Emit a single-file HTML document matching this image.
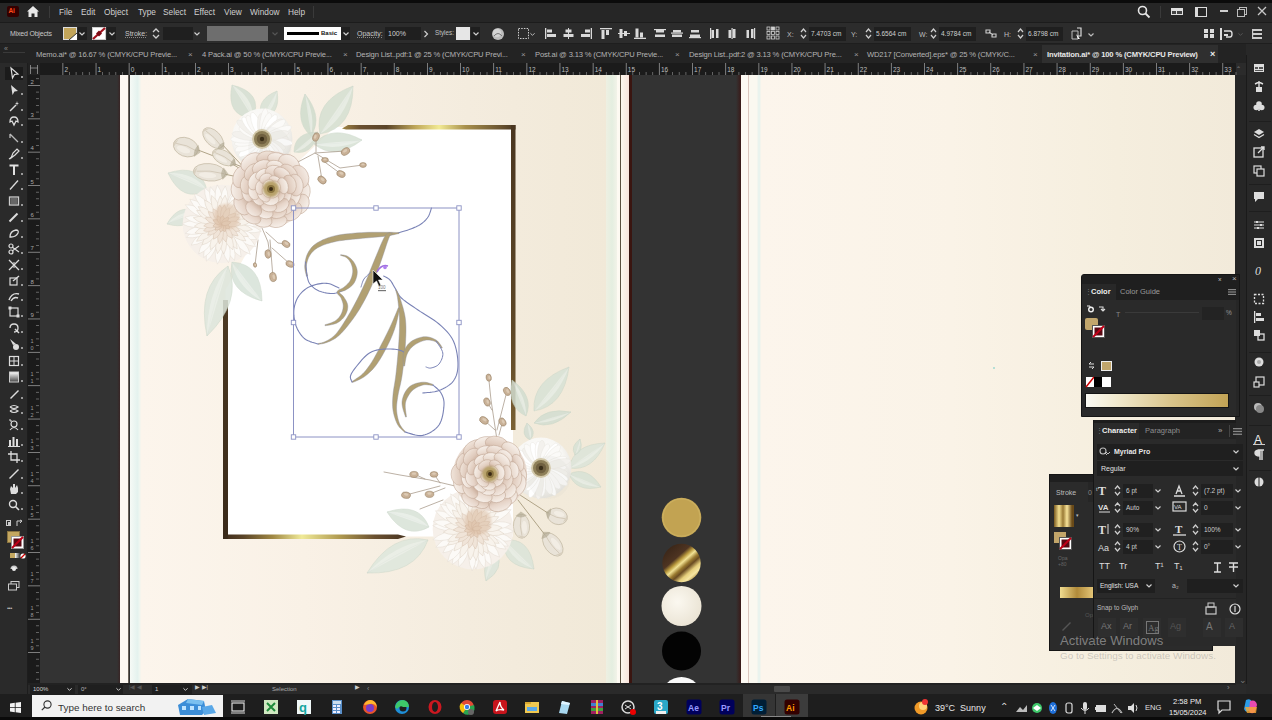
<!DOCTYPE html><html><head><meta charset="utf-8"><style>
html,body{margin:0;padding:0;}
body{width:1272px;height:720px;overflow:hidden;position:relative;background:#2b2b2b;font-family:"Liberation Sans", sans-serif;}
.t{position:absolute;white-space:nowrap;line-height:1;}
div{box-sizing:border-box;}
svg{position:absolute;overflow:visible;}
</style></head><body>

<div style="position:absolute;left:0px;top:0px;width:1272px;height:3px;background:#0b0b0b"></div>
<div style="position:absolute;left:0px;top:3px;width:1272px;height:19px;background:#262626"></div>
<div style="position:absolute;left:0px;top:22px;width:1272px;height:1px;background:#1c1c1c"></div>
<div style="position:absolute;left:7px;top:6px;width:12px;height:11px;background:#330000;border-radius:2px"></div>
<div class="t" style="left:8.5px;top:8px;font-size:6.5px;color:#ff4a1a;font-weight:bold;letter-spacing:-0.3px">Ai</div>
<svg style="left:26px;top:5px" width="14" height="13" viewBox="0 0 14 13"><path d="M1 6.5 L7 1 L13 6.5 L11.5 6.5 L11.5 12 L8.5 12 L8.5 8.5 L5.5 8.5 L5.5 12 L2.5 12 L2.5 6.5 Z" fill="#e8e8e8"/></svg>
<div style="position:absolute;left:49px;top:6px;width:1px;height:12px;background:#3a3a3a"></div>
<div class="t" style="left:59px;top:7.5px;font-size:8.3px;color:#d0d0d0;">File</div>
<div class="t" style="left:81px;top:7.5px;font-size:8.3px;color:#d0d0d0;">Edit</div>
<div class="t" style="left:104px;top:7.5px;font-size:8.3px;color:#d0d0d0;">Object</div>
<div class="t" style="left:138px;top:7.5px;font-size:8.3px;color:#d0d0d0;">Type</div>
<div class="t" style="left:163px;top:7.5px;font-size:8.3px;color:#d0d0d0;">Select</div>
<div class="t" style="left:194px;top:7.5px;font-size:8.3px;color:#d0d0d0;">Effect</div>
<div class="t" style="left:224px;top:7.5px;font-size:8.3px;color:#d0d0d0;">View</div>
<div class="t" style="left:250px;top:7.5px;font-size:8.3px;color:#d0d0d0;">Window</div>
<div class="t" style="left:288px;top:7.5px;font-size:8.3px;color:#d0d0d0;">Help</div>
<div style="position:absolute;left:313px;top:6px;width:1px;height:12px;background:#3a3a3a"></div>
<svg style="left:1137px;top:5px" width="14" height="14" viewBox="0 0 14 14"><circle cx="5.5" cy="5.5" r="4" fill="none" stroke="#e6e6e6" stroke-width="1.6"/><line x1="8.5" y1="8.5" x2="12.5" y2="12.5" stroke="#e6e6e6" stroke-width="1.8"/></svg>
<div style="position:absolute;left:1160px;top:6px;width:1px;height:12px;background:#3a3a3a"></div>
<div style="position:absolute;left:1171px;top:8px;width:12px;height:7px;background:#e0e0e0"></div>
<div style="position:absolute;left:1172px;top:11px;width:4px;height:3px;background:#444"></div>
<div style="position:absolute;left:1177px;top:11px;width:5px;height:3px;background:#444"></div>
<div style="position:absolute;left:1195px;top:7px;width:12px;height:10px;border:1.5px solid #dcdcdc;border-left-width:3px"></div>
<div style="position:absolute;left:1220px;top:10px;width:8px;height:1.5px;background:#cfcfcf"></div>
<div style="position:absolute;left:1239px;top:7px;width:8px;height:8px;border:1.3px solid #bdbdbd"></div>
<div style="position:absolute;left:1237px;top:9px;width:8px;height:8px;border:1.3px solid #bdbdbd;background:#262626"></div>
<svg style="left:1257px;top:6px" width="10" height="10" viewBox="0 0 10 10"><path d="M1 1 L9 9 M9 1 L1 9" stroke="#c8c8c8" stroke-width="1.3"/></svg>
<div style="position:absolute;left:0px;top:23px;width:1272px;height:20px;background:#2c2c2c"></div>
<div style="position:absolute;left:0px;top:43px;width:1272px;height:1px;background:#1e1e1e"></div>
<div class="t" style="left:10px;top:30px;font-size:7px;color:#c8c8c8;letter-spacing:-0.2px">Mixed Objects</div>
<div style="position:absolute;left:63px;top:27px;width:14px;height:13px;background:#c2a55a;border:1px solid #ddd"></div>
<svg style="left:69px;top:33px" width="8" height="7"><path d="M8 0 L8 7 L0 7 Z" fill="#fff"/><path d="M8 0 L0 7" stroke="#333" stroke-width="1"/></svg>
<div style="position:absolute;left:78px;top:27px;width:9px;height:13px;background:#1f1f1f"></div>
<svg style="left:79px;top:31px" width="6" height="6" viewBox="0 0 6 6"><path d="M0.5 1.5 L3 4 L5.5 1.5" fill="none" stroke="#cfcfcf" stroke-width="1.2"/></svg>
<div style="position:absolute;left:92px;top:27px;width:14px;height:13px;background:#fff;border:1px solid #ccc"></div>
<svg style="left:92px;top:27px" width="14" height="13"><path d="M13 1 L1 12" stroke="#a0101c" stroke-width="2.2"/><path d="M7 3.5 L10 6.5 L7 9.5 L4 6.5Z" fill="#7a0a14"/></svg>
<div style="position:absolute;left:107px;top:27px;width:9px;height:13px;background:#1f1f1f"></div>
<svg style="left:109px;top:31px" width="6" height="6" viewBox="0 0 6 6"><path d="M0.5 1.5 L3 4 L5.5 1.5" fill="none" stroke="#cfcfcf" stroke-width="1.2"/></svg>
<div class="t" style="left:125px;top:30px;font-size:7px;color:#c8c8c8;text-decoration:underline dotted #888">Stroke:</div>
<svg style="left:152px;top:27px" width="8" height="13" viewBox="0 0 8 13"><path d="M1 5 L4 2 L7 5 M1 8 L4 11 L7 8" fill="none" stroke="#cfcfcf" stroke-width="1.3"/></svg>
<div style="position:absolute;left:163px;top:27px;width:30px;height:13px;background:#1f1f1f"></div>
<svg style="left:194px;top:31px" width="6" height="6" viewBox="0 0 6 6"><path d="M0.5 1.5 L3 4 L5.5 1.5" fill="none" stroke="#cfcfcf" stroke-width="1.2"/></svg>
<div style="position:absolute;left:207px;top:26px;width:61px;height:15px;background:#6e6e6e"></div>
<svg style="left:272px;top:31px" width="6" height="6" viewBox="0 0 6 6"><path d="M0.5 1.5 L3 4 L5.5 1.5" fill="none" stroke="#555" stroke-width="1.2"/></svg>
<div style="position:absolute;left:284px;top:27px;width:57px;height:13px;background:#fff"></div>
<div style="position:absolute;left:287px;top:32px;width:32px;height:3px;background:#000"></div>
<div class="t" style="left:321px;top:30px;font-size:6px;color:#111;font-weight:bold">Basic</div>
<div style="position:absolute;left:341px;top:27px;width:9px;height:13px;background:#1f1f1f"></div>
<svg style="left:343px;top:31px" width="6" height="6" viewBox="0 0 6 6"><path d="M0.5 1.5 L3 4 L5.5 1.5" fill="none" stroke="#cfcfcf" stroke-width="1.2"/></svg>
<div class="t" style="left:357px;top:30px;font-size:7px;color:#c8c8c8;text-decoration:underline dotted #888">Opacity:</div>
<div style="position:absolute;left:385px;top:27px;width:36px;height:13px;background:#1f1f1f"></div>
<div class="t" style="left:388px;top:30px;font-size:7px;color:#d0d0d0;">100%</div>
<svg style="left:423px;top:30px" width="6" height="8"><path d="M1.5 1 L4.5 4 L1.5 7" fill="none" stroke="#cfcfcf" stroke-width="1.2"/></svg>
<div class="t" style="left:435px;top:30px;font-size:6.3px;color:#c0c0c0;">Styles:</div>
<div style="position:absolute;left:456px;top:27px;width:14px;height:13px;background:#e6e6e6"></div>
<div style="position:absolute;left:471px;top:27px;width:9px;height:13px;background:#1f1f1f"></div>
<svg style="left:473px;top:31px" width="6" height="6" viewBox="0 0 6 6"><path d="M0.5 1.5 L3 4 L5.5 1.5" fill="none" stroke="#cfcfcf" stroke-width="1.2"/></svg>
<svg style="left:491px;top:27px" width="14" height="14"><circle cx="7" cy="7" r="6" fill="#bdbdbd"/><circle cx="6" cy="6" r="4" fill="#e0e0e0" opacity="0.7"/><path d="M3 9 Q7 4 11 9" stroke="#777" fill="none" stroke-width="1"/></svg>
<svg style="left:518px;top:28px" width="11" height="11" viewBox="0 0 11 11"><rect x="0.5" y="0.5" width="10" height="10" fill="none" stroke="#cfcfcf" stroke-width="1" stroke-dasharray="1.5 1.2"/></svg>
<svg style="left:530px;top:32px" width="5" height="5" viewBox="0 0 6 6"><path d="M0.5 1.5 L3 4 L5.5 1.5" fill="none" stroke="#bbb" stroke-width="1.2"/></svg>
<svg style="left:545px;top:28px" width="12" height="11" viewBox="0 0 12 11"><rect x="0" y="0" width="1.3" height="11" fill="#d9d9d9"/><rect x="2" y="1.5" width="5" height="3" fill="#d9d9d9"/><rect x="2" y="6" width="9" height="3" fill="#d9d9d9"/></svg>
<svg style="left:563px;top:28px" width="11" height="11" viewBox="0 0 11 11"><rect x="5" y="0" width="1" height="11" fill="#d9d9d9"/><rect x="2.5" y="1.5" width="6" height="3" fill="#d9d9d9"/><rect x="0.5" y="6" width="10" height="3" fill="#d9d9d9"/></svg>
<svg style="left:580px;top:28px" width="12" height="11" viewBox="0 0 12 11"><rect x="10.7" y="0" width="1.3" height="11" fill="#d9d9d9"/><rect x="5" y="1.5" width="5" height="3" fill="#d9d9d9"/><rect x="1" y="6" width="9" height="3" fill="#d9d9d9"/></svg>
<svg style="left:600px;top:28px" width="12" height="11" viewBox="0 0 12 11"><rect x="0" y="0" width="12" height="1.3" fill="#d9d9d9"/><rect x="1.5" y="2" width="3" height="9" fill="#d9d9d9"/><rect x="6" y="2" width="3" height="5" fill="#d9d9d9"/></svg>
<svg style="left:618px;top:28px" width="12" height="11" viewBox="0 0 12 11"><rect x="0" y="5" width="12" height="1" fill="#d9d9d9"/><rect x="1.5" y="1" width="3" height="9" fill="#d9d9d9"/><rect x="6" y="3" width="3" height="5" fill="#d9d9d9"/></svg>
<svg style="left:634px;top:28px" width="12" height="11" viewBox="0 0 12 11"><rect x="0" y="9.7" width="12" height="1.3" fill="#d9d9d9"/><rect x="1.5" y="0.5" width="3" height="9" fill="#d9d9d9"/><rect x="6" y="4.5" width="3" height="5" fill="#d9d9d9"/></svg>
<svg style="left:654px;top:28px" width="12" height="11" viewBox="0 0 12 11"><rect x="0" y="1" width="12" height="1.2" fill="#d9d9d9"/><rect x="2" y="2" width="8" height="2.5" fill="#d9d9d9"/><rect x="1" y="6.5" width="10" height="2.5" fill="#d9d9d9"/></svg>
<svg style="left:671px;top:28px" width="12" height="11" viewBox="0 0 12 11"><rect x="0" y="4.5" width="12" height="1.2" fill="#d9d9d9"/><rect x="2" y="2" width="8" height="2.5" fill="#d9d9d9"/><rect x="1" y="6.5" width="10" height="2.5" fill="#d9d9d9"/></svg>
<svg style="left:689px;top:28px" width="12" height="11" viewBox="0 0 12 11"><rect x="0" y="9" width="12" height="1.2" fill="#d9d9d9"/><rect x="2" y="2" width="8" height="2.5" fill="#d9d9d9"/><rect x="1" y="6.5" width="10" height="2.5" fill="#d9d9d9"/></svg>
<svg style="left:709px;top:28px" width="12" height="11" viewBox="0 0 12 11"><rect x="1" y="0" width="1.2" height="11" fill="#d9d9d9"/><rect x="2.5" y="2" width="2.5" height="8" fill="#d9d9d9"/><rect x="7" y="1" width="2.5" height="9" fill="#d9d9d9"/></svg>
<svg style="left:726px;top:28px" width="12" height="11" viewBox="0 0 12 11"><rect x="5.5" y="0" width="1.2" height="11" fill="#d9d9d9"/><rect x="2.5" y="2" width="2.5" height="8" fill="#d9d9d9"/><rect x="7" y="1" width="2.5" height="9" fill="#d9d9d9"/></svg>
<svg style="left:744px;top:28px" width="12" height="11" viewBox="0 0 12 11"><rect x="10" y="0" width="1.2" height="11" fill="#d9d9d9"/><rect x="2.5" y="2" width="2.5" height="8" fill="#d9d9d9"/><rect x="7" y="1" width="2.5" height="9" fill="#d9d9d9"/></svg>
<svg style="left:767px;top:27px" width="13" height="13" viewBox="0 0 13 13"><rect x="0.0" y="0.0" width="3" height="3" fill="none" stroke="#cfcfcf" stroke-width="0.8"/><rect x="4.5" y="0.0" width="3" height="3" fill="none" stroke="#cfcfcf" stroke-width="0.8"/><rect x="9.0" y="0.0" width="3" height="3" fill="none" stroke="#cfcfcf" stroke-width="0.8"/><rect x="0.0" y="4.5" width="3" height="3" fill="none" stroke="#cfcfcf" stroke-width="0.8"/><rect x="4.5" y="4.5" width="3" height="3" fill="none" stroke="#cfcfcf" stroke-width="0.8"/><rect x="9.0" y="4.5" width="3" height="3" fill="none" stroke="#cfcfcf" stroke-width="0.8"/><rect x="0.0" y="9.0" width="3" height="3" fill="none" stroke="#cfcfcf" stroke-width="0.8"/><rect x="4.5" y="9.0" width="3" height="3" fill="none" stroke="#cfcfcf" stroke-width="0.8"/><rect x="9.0" y="9.0" width="3" height="3" fill="none" stroke="#cfcfcf" stroke-width="0.8"/><rect x="4.5" y="0" width="3" height="3" fill="#cfcfcf"/></svg>
<div class="t" style="left:787px;top:31px;font-size:7px;color:#bdbdbd;">X:</div>
<svg style="left:800px;top:27px" width="7" height="13" viewBox="0 0 7 13"><path d="M1 5 L3.5 2 L6 5 M1 8 L3.5 11 L6 8" fill="none" stroke="#cfcfcf" stroke-width="1.2"/></svg>
<div style="position:absolute;left:809px;top:27px;width:37px;height:14px;background:#1f1f1f"></div>
<div class="t" style="left:811px;top:31px;font-size:6.5px;color:#cfcfcf;">7.4703 cm</div>
<div class="t" style="left:851px;top:31px;font-size:7px;color:#bdbdbd;">Y:</div>
<svg style="left:865px;top:27px" width="7" height="13" viewBox="0 0 7 13"><path d="M1 5 L3.5 2 L6 5 M1 8 L3.5 11 L6 8" fill="none" stroke="#cfcfcf" stroke-width="1.2"/></svg>
<div style="position:absolute;left:874px;top:27px;width:37px;height:14px;background:#1f1f1f"></div>
<div class="t" style="left:876px;top:31px;font-size:6.5px;color:#cfcfcf;">5.6564 cm</div>
<div class="t" style="left:919px;top:31px;font-size:7px;color:#bdbdbd;">W:</div>
<svg style="left:930px;top:27px" width="7" height="13" viewBox="0 0 7 13"><path d="M1 5 L3.5 2 L6 5 M1 8 L3.5 11 L6 8" fill="none" stroke="#cfcfcf" stroke-width="1.2"/></svg>
<div style="position:absolute;left:939px;top:27px;width:37px;height:14px;background:#1f1f1f"></div>
<div class="t" style="left:941px;top:31px;font-size:6.5px;color:#cfcfcf;">4.9784 cm</div>
<svg style="left:985px;top:28px" width="12" height="11" viewBox="0 0 12 11"><path d="M1 2 L5 2 L5 5 L1 5 Z M7 6 L11 6 L11 9 L7 9 Z M4 4 L8 7" fill="none" stroke="#cfcfcf" stroke-width="1.1"/></svg>
<div class="t" style="left:1004px;top:31px;font-size:7px;color:#bdbdbd;">H:</div>
<svg style="left:1017px;top:27px" width="7" height="13" viewBox="0 0 7 13"><path d="M1 5 L3.5 2 L6 5 M1 8 L3.5 11 L6 8" fill="none" stroke="#cfcfcf" stroke-width="1.2"/></svg>
<div style="position:absolute;left:1026px;top:27px;width:37px;height:14px;background:#1f1f1f"></div>
<div class="t" style="left:1028px;top:31px;font-size:6.5px;color:#cfcfcf;">6.8798 cm</div>
<svg style="left:1071px;top:27px" width="20" height="14" viewBox="0 0 20 14"><path d="M1 4 L7 4 L7 12 L1 12 Z" fill="none" stroke="#bbb" stroke-width="1"/><path d="M6 1 L10 1 L10 9 L6 9" fill="none" stroke="#ddd" stroke-width="1.2"/><path d="M5 7 L9 12 L7 12 Z" fill="#fff"/></svg>
<svg style="left:1088px;top:32px" width="6" height="6" viewBox="0 0 6 6"><path d="M0.5 1.5 L3 4 L5.5 1.5" fill="none" stroke="#bbb" stroke-width="1.2"/></svg>
<svg style="left:1204px;top:28px" width="10" height="11" viewBox="0 0 10 11"><rect x="0" y="1" width="4" height="4" fill="#ddd"/><rect x="6" y="1" width="4" height="4" fill="#ddd"/><rect x="0" y="6" width="4" height="4" fill="#ddd"/><rect x="6" y="6" width="4" height="4" fill="#ddd"/></svg>
<svg style="left:1220px;top:28px" width="14" height="12" viewBox="0 0 14 12"><rect x="0" y="0" width="2" height="12" fill="#ddd"/><path d="M4 3 L10 3 Q12 3 12 6 Q12 9 10 9 L6 9" fill="none" stroke="#ddd" stroke-width="1.4"/><rect x="4" y="6" width="4" height="2" fill="#ddd"/></svg>
<svg style="left:1238px;top:32px" width="5" height="5" viewBox="0 0 6 6"><path d="M0.5 1.5 L3 4 L5.5 1.5" fill="none" stroke="#555" stroke-width="1.2"/></svg>
<svg style="left:1252px;top:28px" width="10" height="11" viewBox="0 0 10 11"><rect x="0" y="1" width="10" height="2" fill="#ccc"/><rect x="0" y="5" width="10" height="2" fill="#ccc"/><rect x="0" y="9" width="10" height="2" fill="#ccc"/><rect x="0" y="1" width="1.2" height="10" fill="#ccc"/></svg>
<div style="position:absolute;left:0px;top:44px;width:1272px;height:19px;background:#232323"></div>
<div class="t" style="left:36px;top:51px;font-size:7.6px;color:#b4b4b4;letter-spacing:-0.15px">Memo.ai* @ 16.67 % (CMYK/CPU Previe...</div>
<div class="t" style="left:188px;top:50.5px;font-size:8px;color:#9a9a9a;">&#215;</div>
<div class="t" style="left:202px;top:51px;font-size:7.6px;color:#b4b4b4;letter-spacing:-0.15px">4 Pack.ai @ 50 % (CMYK/CPU Previe...</div>
<div class="t" style="left:343px;top:50.5px;font-size:8px;color:#9a9a9a;">&#215;</div>
<div class="t" style="left:356px;top:51px;font-size:7.6px;color:#b4b4b4;letter-spacing:-0.15px">Design List..pdf:1 @ 25 % (CMYK/CPU Previ...</div>
<div class="t" style="left:521px;top:50.5px;font-size:8px;color:#9a9a9a;">&#215;</div>
<div class="t" style="left:535px;top:51px;font-size:7.6px;color:#b4b4b4;letter-spacing:-0.15px">Post.ai @ 3.13 % (CMYK/CPU Previe...</div>
<div class="t" style="left:675px;top:50.5px;font-size:8px;color:#9a9a9a;">&#215;</div>
<div class="t" style="left:689px;top:51px;font-size:7.6px;color:#b4b4b4;letter-spacing:-0.15px">Design List..pdf:2 @ 3.13 % (CMYK/CPU Pre...</div>
<div class="t" style="left:854px;top:50.5px;font-size:8px;color:#9a9a9a;">&#215;</div>
<div class="t" style="left:867px;top:51px;font-size:7.6px;color:#b4b4b4;letter-spacing:-0.15px">WD217 [Converted].eps* @ 25 % (CMYK/C...</div>
<div class="t" style="left:1033px;top:50.5px;font-size:8px;color:#9a9a9a;">&#215;</div>
<div style="position:absolute;left:1042px;top:45px;width:176px;height:18px;background:#2f2f2f"></div>
<div class="t" style="left:1047px;top:51px;font-size:7.6px;color:#e8e8e8;letter-spacing:-0.15px;font-weight:bold">Invitation.ai* @ 100 % (CMYK/CPU Preview)</div>
<div class="t" style="left:1210px;top:50px;font-size:9px;color:#eee;font-weight:bold">&#215;</div>
<div class="t" style="left:1261px;top:45px;font-size:8px;color:#aaa;">&#171;</div>
<div style="position:absolute;left:0px;top:63px;width:28px;height:631px;background:#2a2a2a"></div>
<div style="position:absolute;left:27px;top:63px;width:1px;height:631px;background:#1d1d1d"></div>
<div style="position:absolute;left:3px;top:52px;width:22px;height:1px;background:#3a3a3a"></div>
<div class="t" style="left:4px;top:45px;font-size:7px;color:#888;">&#171;</div>
<div style="position:absolute;left:5px;top:67px;width:18px;height:13px;background:#1b1b1b"></div>
<svg width="0" height="0" style="position:absolute"><defs><linearGradient id="tg" x1="0" x2="0" y1="0" y2="1"><stop offset="0" stop-color="#fff"/><stop offset="1" stop-color="#444"/></linearGradient></defs></svg>
<svg style="left:8px;top:67px" width="12" height="12" viewBox="0 0 12 12"><path d="M3 1 L10 7 L6.5 7.5 L4.5 11 Z" fill="none" stroke="#ddd" stroke-width="1.2"/></svg>
<div style="position:absolute;left:21px;top:76px;width:1.5px;height:1.5px;background:#999"></div>
<svg style="left:8px;top:84px" width="12" height="12" viewBox="0 0 12 12"><path d="M3 1 L10 7 L6.5 7.5 L4.5 11 Z" fill="#ddd"/></svg>
<div style="position:absolute;left:21px;top:93px;width:1.5px;height:1.5px;background:#999"></div>
<svg style="left:8px;top:100px" width="12" height="12" viewBox="0 0 12 12"><path d="M2 11 L8 5" stroke="#ddd" stroke-width="1.5"/><path d="M9 1 L9.5 3 L11 3.5 L9.5 4 L9 6 L8.5 4 L7 3.5 L8.5 3Z" fill="#ddd"/></svg>
<div style="position:absolute;left:21px;top:109px;width:1.5px;height:1.5px;background:#999"></div>
<svg style="left:8px;top:115px" width="12" height="12" viewBox="0 0 12 12"><path d="M2 7 Q2 2 6 2 Q10 2 10 7 L8 6 L6 10 L4 6 Z" fill="none" stroke="#ddd" stroke-width="1.3"/></svg>
<div style="position:absolute;left:21px;top:124px;width:1.5px;height:1.5px;background:#999"></div>
<svg style="left:8px;top:132px" width="12" height="12" viewBox="0 0 12 12"><path d="M2 2 L10 10 M2 2 L2 6" fill="none" stroke="#bbb" stroke-width="1.3"/></svg>
<div style="position:absolute;left:21px;top:141px;width:1.5px;height:1.5px;background:#999"></div>
<svg style="left:8px;top:148px" width="12" height="12" viewBox="0 0 12 12"><path d="M3 10 L5 5 L9 1 L11 3 L7 7 Z" fill="none" stroke="#ddd" stroke-width="1.2"/><path d="M1 11 L4 9" stroke="#ddd" stroke-width="1.2"/></svg>
<div style="position:absolute;left:21px;top:157px;width:1.5px;height:1.5px;background:#999"></div>
<svg style="left:8px;top:164px" width="12" height="12" viewBox="0 0 12 12"><path d="M1.5 1.5 L10.5 1.5 M6 1.5 L6 11" stroke="#e2e2e2" stroke-width="2"/></svg>
<div style="position:absolute;left:21px;top:173px;width:1.5px;height:1.5px;background:#999"></div>
<svg style="left:8px;top:179px" width="12" height="12" viewBox="0 0 12 12"><path d="M2 10.5 L10 1.5" stroke="#ddd" stroke-width="1.3"/></svg>
<div style="position:absolute;left:21px;top:188px;width:1.5px;height:1.5px;background:#999"></div>
<svg style="left:8px;top:195px" width="12" height="12" viewBox="0 0 12 12"><rect x="1.5" y="2" width="9" height="8" fill="none" stroke="#ccc" stroke-width="1.3"/><rect x="2.5" y="3" width="7" height="6" fill="#666"/></svg>
<div style="position:absolute;left:21px;top:204px;width:1.5px;height:1.5px;background:#999"></div>
<svg style="left:8px;top:211px" width="12" height="12" viewBox="0 0 12 12"><path d="M1.5 10.5 L9.5 2.5" stroke="#ddd" stroke-width="2"/></svg>
<div style="position:absolute;left:21px;top:220px;width:1.5px;height:1.5px;background:#999"></div>
<svg style="left:8px;top:227px" width="12" height="12" viewBox="0 0 12 12"><path d="M2 10 Q2 4 8 3 Q11 3 10 6 Q8 10 3 10Z" fill="none" stroke="#ddd" stroke-width="1.3"/></svg>
<div style="position:absolute;left:21px;top:236px;width:1.5px;height:1.5px;background:#999"></div>
<svg style="left:8px;top:243px" width="12" height="12" viewBox="0 0 12 12"><circle cx="3" cy="3" r="2" fill="none" stroke="#ddd" stroke-width="1.2"/><circle cx="3" cy="9" r="2" fill="none" stroke="#ddd" stroke-width="1.2"/><path d="M4 4 L11 9 M4 8 L11 3" stroke="#ddd" stroke-width="1.2"/></svg>
<div style="position:absolute;left:21px;top:252px;width:1.5px;height:1.5px;background:#999"></div>
<svg style="left:8px;top:259px" width="12" height="12" viewBox="0 0 12 12"><path d="M1 1 L11 11 M11 1 L1 11" stroke="#ddd" stroke-width="1.3"/><path d="M6 3 L6 9" stroke="#ddd"/></svg>
<div style="position:absolute;left:21px;top:268px;width:1.5px;height:1.5px;background:#999"></div>
<svg style="left:8px;top:275px" width="12" height="12" viewBox="0 0 12 12"><rect x="2" y="3" width="7" height="7" fill="none" stroke="#ddd" stroke-width="1.2"/><path d="M5 6 L11 1" stroke="#ddd" stroke-width="1.3"/></svg>
<div style="position:absolute;left:21px;top:284px;width:1.5px;height:1.5px;background:#999"></div>
<svg style="left:8px;top:290px" width="12" height="12" viewBox="0 0 12 12"><path d="M1 10 Q4 2 11 4 M3 11 Q6 6 10 8" fill="none" stroke="#ddd" stroke-width="1.4"/></svg>
<div style="position:absolute;left:21px;top:299px;width:1.5px;height:1.5px;background:#999"></div>
<svg style="left:8px;top:306px" width="12" height="12" viewBox="0 0 12 12"><rect x="2" y="2" width="8" height="8" fill="none" stroke="#ddd" stroke-width="1.2"/><rect x="0.5" y="0.5" width="3" height="3" fill="#ddd"/><rect x="8.5" y="8.5" width="3" height="3" fill="#ddd"/></svg>
<div style="position:absolute;left:21px;top:315px;width:1.5px;height:1.5px;background:#999"></div>
<svg style="left:8px;top:322px" width="12" height="12" viewBox="0 0 12 12"><path d="M2 6 Q2 2 6 2 Q10 2 10 6 Q10 10 6 10" fill="none" stroke="#ddd" stroke-width="1.3"/><path d="M7 7 L11 11" stroke="#ddd" stroke-width="1.5"/></svg>
<div style="position:absolute;left:21px;top:331px;width:1.5px;height:1.5px;background:#999"></div>
<svg style="left:8px;top:338px" width="12" height="12" viewBox="0 0 12 12"><path d="M2 1 L8 6 L5 7 Z" fill="#ddd"/><circle cx="8" cy="9" r="3" fill="#ddd"/></svg>
<div style="position:absolute;left:21px;top:347px;width:1.5px;height:1.5px;background:#999"></div>
<svg style="left:8px;top:355px" width="12" height="12" viewBox="0 0 12 12"><rect x="1.5" y="1.5" width="9" height="9" fill="none" stroke="#ddd" stroke-width="1.2"/><path d="M1.5 6 L10.5 6 M6 1.5 L6 10.5" stroke="#ddd"/></svg>
<div style="position:absolute;left:21px;top:364px;width:1.5px;height:1.5px;background:#999"></div>
<svg style="left:8px;top:371px" width="12" height="12" viewBox="0 0 12 12"><rect x="1.5" y="1" width="9" height="10" fill="url(#tg)" stroke="#ccc" stroke-width="1"/></svg>
<div style="position:absolute;left:21px;top:380px;width:1.5px;height:1.5px;background:#999"></div>
<svg style="left:8px;top:388px" width="12" height="12" viewBox="0 0 12 12"><path d="M2 10 L9 3 L10 2 L11 3 L10 4 L3 11 Z" fill="#ddd"/></svg>
<div style="position:absolute;left:21px;top:397px;width:1.5px;height:1.5px;background:#999"></div>
<svg style="left:8px;top:403px" width="12" height="12" viewBox="0 0 12 12"><path d="M2 4 Q6 1 10 4 Q6 7 2 4 M2 8 Q6 5 10 8 Q6 11 2 8" fill="none" stroke="#ddd" stroke-width="1.2"/></svg>
<div style="position:absolute;left:21px;top:412px;width:1.5px;height:1.5px;background:#999"></div>
<svg style="left:8px;top:419px" width="12" height="12" viewBox="0 0 12 12"><circle cx="6" cy="5" r="3" fill="none" stroke="#ddd" stroke-width="1.2"/><path d="M2 11 Q6 6 10 11" fill="none" stroke="#ddd" stroke-width="1.2"/><path d="M1 1 L3 1 L3 3" stroke="#ddd" fill="none"/></svg>
<div style="position:absolute;left:21px;top:428px;width:1.5px;height:1.5px;background:#999"></div>
<svg style="left:8px;top:435px" width="12" height="12" viewBox="0 0 12 12"><rect x="1" y="5" width="2" height="6" fill="#ddd"/><rect x="4.5" y="2" width="2" height="9" fill="#ddd"/><rect x="8" y="4" width="2" height="7" fill="#ddd"/><rect x="0" y="11" width="12" height="1" fill="#ddd"/></svg>
<div style="position:absolute;left:21px;top:444px;width:1.5px;height:1.5px;background:#999"></div>
<svg style="left:8px;top:451px" width="12" height="12" viewBox="0 0 12 12"><path d="M3 0 L3 9 L12 9 M0 3 L9 3 L9 12" fill="none" stroke="#ddd" stroke-width="1.3"/></svg>
<div style="position:absolute;left:21px;top:460px;width:1.5px;height:1.5px;background:#999"></div>
<svg style="left:8px;top:468px" width="12" height="12" viewBox="0 0 12 12"><path d="M10 1 L11 2 L4 9 L2 11 L1 10 L3 8 Z" fill="#ddd"/></svg>
<div style="position:absolute;left:21px;top:477px;width:1.5px;height:1.5px;background:#999"></div>
<svg style="left:8px;top:483px" width="12" height="12" viewBox="0 0 12 12"><path d="M3 11 L2 6 L3 3 L5 5 L5 1 L7 1 L7 5 L9 2 L10 5 L10 9 L8 11 Z" fill="#ddd"/></svg>
<div style="position:absolute;left:21px;top:492px;width:1.5px;height:1.5px;background:#999"></div>
<svg style="left:8px;top:499px" width="12" height="12" viewBox="0 0 12 12"><circle cx="5" cy="5" r="3.5" fill="none" stroke="#ddd" stroke-width="1.4"/><path d="M7.5 7.5 L11 11" stroke="#ddd" stroke-width="1.6"/></svg>
<div style="position:absolute;left:21px;top:508px;width:1.5px;height:1.5px;background:#999"></div>
<svg style="left:6px;top:520px" width="6" height="7" viewBox="0 0 6 7"><rect x="0.5" y="0.5" width="4" height="5" fill="none" stroke="#ccc"/><rect x="2" y="2" width="3" height="4" fill="#ccc"/></svg>
<svg style="left:16px;top:520px" width="8" height="7" viewBox="0 0 8 7"><path d="M1 6 L1 1 L6 1 M4 0 L6 1 L4 3" fill="none" stroke="#ccc" stroke-width="1"/></svg>
<div style="position:absolute;left:7px;top:531px;width:13px;height:12px;background:#c4a760;border:1px solid #8a7440"></div>
<div style="position:absolute;left:11px;top:536px;width:13px;height:13px;background:#fff;border:1px solid #999"></div>
<svg style="left:11px;top:536px" width="13" height="13" viewBox="0 0 13 13"><rect x="2.5" y="2.5" width="8" height="8" fill="#5a0a14"/><path d="M12 1 L1 12" stroke="#c00018" stroke-width="2"/></svg>
<div style="position:absolute;left:10px;top:553px;width:5px;height:5px;background:#c4a760"></div>
<div style="position:absolute;left:15px;top:553px;width:5px;height:5px;background:linear-gradient(90deg,#fff,#333)"></div>
<svg style="left:20px;top:553px" width="6" height="6" viewBox="0 0 6 6"><circle cx="3" cy="3" r="2.6" fill="#fff"/><path d="M5 1 L1 5" stroke="#c00" stroke-width="1.3"/></svg>
<svg style="left:9px;top:565px" width="10" height="8" viewBox="0 0 10 8"><circle cx="5" cy="4" r="3.5" fill="#ccc"/><rect x="0" y="4" width="10" height="4" fill="#2a2a2a"/><circle cx="5" cy="4" r="2" fill="#eee"/></svg>
<svg style="left:8px;top:581px" width="12" height="10" viewBox="0 0 12 10"><rect x="3" y="0.5" width="8" height="6" fill="none" stroke="#ccc"/><rect x="0.5" y="3" width="8" height="6" fill="#2a2a2a" stroke="#ccc"/></svg>
<div class="t" style="left:7px;top:605px;font-size:6px;color:#bbb;letter-spacing:-0.5px">&#8226;&#8226;&#8226;</div>
<div style="position:absolute;left:28px;top:63px;width:1208px;height:12px;background:#1b1b1b"></div>
<div style="position:absolute;left:28px;top:75px;width:12px;height:609px;background:#1b1b1b"></div>
<div style="position:absolute;left:28px;top:63px;width:12px;height:12px;background:#222"></div>
<svg style="left:30px;top:65px" width="8" height="9" viewBox="0 0 8 9"><path d="M0.5 0 L0.5 9 M7.5 0 L7.5 9 M0 3 L8 3" stroke="#999" stroke-width="0.8"/></svg>
<svg style="left:0;top:0" width="1272" height="720"><rect x="62.4" y="63" width="0.9" height="12" fill="#8a8a8a"/><text x="64.4" y="71.5" font-size="6.5" fill="#bdbdbd" font-family="Liberation Sans">2</text><rect x="69.0" y="72" width="0.8" height="3" fill="#777"/><rect x="75.7" y="72" width="0.8" height="3" fill="#777"/><rect x="82.3" y="72" width="0.8" height="3" fill="#777"/><rect x="88.9" y="72" width="0.8" height="3" fill="#777"/><rect x="95.6" y="63" width="0.9" height="12" fill="#8a8a8a"/><text x="97.6" y="71.5" font-size="6.5" fill="#bdbdbd" font-family="Liberation Sans">1</text><rect x="102.2" y="72" width="0.8" height="3" fill="#777"/><rect x="108.8" y="72" width="0.8" height="3" fill="#777"/><rect x="115.4" y="72" width="0.8" height="3" fill="#777"/><rect x="122.1" y="72" width="0.8" height="3" fill="#777"/><rect x="128.7" y="63" width="0.9" height="12" fill="#8a8a8a"/><text x="130.7" y="71.5" font-size="6.5" fill="#bdbdbd" font-family="Liberation Sans">0</text><rect x="135.3" y="72" width="0.8" height="3" fill="#777"/><rect x="142.0" y="72" width="0.8" height="3" fill="#777"/><rect x="148.6" y="72" width="0.8" height="3" fill="#777"/><rect x="155.2" y="72" width="0.8" height="3" fill="#777"/><rect x="161.8" y="63" width="0.9" height="12" fill="#8a8a8a"/><text x="163.8" y="71.5" font-size="6.5" fill="#bdbdbd" font-family="Liberation Sans">1</text><rect x="168.5" y="72" width="0.8" height="3" fill="#777"/><rect x="175.1" y="72" width="0.8" height="3" fill="#777"/><rect x="181.7" y="72" width="0.8" height="3" fill="#777"/><rect x="188.4" y="72" width="0.8" height="3" fill="#777"/><rect x="195.0" y="63" width="0.9" height="12" fill="#8a8a8a"/><text x="197.0" y="71.5" font-size="6.5" fill="#bdbdbd" font-family="Liberation Sans">2</text><rect x="201.6" y="72" width="0.8" height="3" fill="#777"/><rect x="208.2" y="72" width="0.8" height="3" fill="#777"/><rect x="214.9" y="72" width="0.8" height="3" fill="#777"/><rect x="221.5" y="72" width="0.8" height="3" fill="#777"/><rect x="228.1" y="63" width="0.9" height="12" fill="#8a8a8a"/><text x="230.1" y="71.5" font-size="6.5" fill="#bdbdbd" font-family="Liberation Sans">3</text><rect x="234.7" y="72" width="0.8" height="3" fill="#777"/><rect x="241.4" y="72" width="0.8" height="3" fill="#777"/><rect x="248.0" y="72" width="0.8" height="3" fill="#777"/><rect x="254.6" y="72" width="0.8" height="3" fill="#777"/><rect x="261.3" y="63" width="0.9" height="12" fill="#8a8a8a"/><text x="263.3" y="71.5" font-size="6.5" fill="#bdbdbd" font-family="Liberation Sans">4</text><rect x="267.9" y="72" width="0.8" height="3" fill="#777"/><rect x="274.5" y="72" width="0.8" height="3" fill="#777"/><rect x="281.1" y="72" width="0.8" height="3" fill="#777"/><rect x="287.8" y="72" width="0.8" height="3" fill="#777"/><rect x="294.4" y="63" width="0.9" height="12" fill="#8a8a8a"/><text x="296.4" y="71.5" font-size="6.5" fill="#bdbdbd" font-family="Liberation Sans">5</text><rect x="301.0" y="72" width="0.8" height="3" fill="#777"/><rect x="307.7" y="72" width="0.8" height="3" fill="#777"/><rect x="314.3" y="72" width="0.8" height="3" fill="#777"/><rect x="320.9" y="72" width="0.8" height="3" fill="#777"/><rect x="327.5" y="63" width="0.9" height="12" fill="#8a8a8a"/><text x="329.5" y="71.5" font-size="6.5" fill="#bdbdbd" font-family="Liberation Sans">6</text><rect x="334.2" y="72" width="0.8" height="3" fill="#777"/><rect x="340.8" y="72" width="0.8" height="3" fill="#777"/><rect x="347.4" y="72" width="0.8" height="3" fill="#777"/><rect x="354.1" y="72" width="0.8" height="3" fill="#777"/><rect x="360.7" y="63" width="0.9" height="12" fill="#8a8a8a"/><text x="362.7" y="71.5" font-size="6.5" fill="#bdbdbd" font-family="Liberation Sans">7</text><rect x="367.3" y="72" width="0.8" height="3" fill="#777"/><rect x="373.9" y="72" width="0.8" height="3" fill="#777"/><rect x="380.6" y="72" width="0.8" height="3" fill="#777"/><rect x="387.2" y="72" width="0.8" height="3" fill="#777"/><rect x="393.8" y="63" width="0.9" height="12" fill="#8a8a8a"/><text x="395.8" y="71.5" font-size="6.5" fill="#bdbdbd" font-family="Liberation Sans">8</text><rect x="400.4" y="72" width="0.8" height="3" fill="#777"/><rect x="407.1" y="72" width="0.8" height="3" fill="#777"/><rect x="413.7" y="72" width="0.8" height="3" fill="#777"/><rect x="420.3" y="72" width="0.8" height="3" fill="#777"/><rect x="427.0" y="63" width="0.9" height="12" fill="#8a8a8a"/><text x="429.0" y="71.5" font-size="6.5" fill="#bdbdbd" font-family="Liberation Sans">9</text><rect x="433.6" y="72" width="0.8" height="3" fill="#777"/><rect x="440.2" y="72" width="0.8" height="3" fill="#777"/><rect x="446.8" y="72" width="0.8" height="3" fill="#777"/><rect x="453.5" y="72" width="0.8" height="3" fill="#777"/><rect x="460.1" y="63" width="0.9" height="12" fill="#8a8a8a"/><text x="462.1" y="71.5" font-size="6.5" fill="#bdbdbd" font-family="Liberation Sans">10</text><rect x="466.7" y="72" width="0.8" height="3" fill="#777"/><rect x="473.4" y="72" width="0.8" height="3" fill="#777"/><rect x="480.0" y="72" width="0.8" height="3" fill="#777"/><rect x="486.6" y="72" width="0.8" height="3" fill="#777"/><rect x="493.2" y="63" width="0.9" height="12" fill="#8a8a8a"/><text x="495.2" y="71.5" font-size="6.5" fill="#bdbdbd" font-family="Liberation Sans">11</text><rect x="499.9" y="72" width="0.8" height="3" fill="#777"/><rect x="506.5" y="72" width="0.8" height="3" fill="#777"/><rect x="513.1" y="72" width="0.8" height="3" fill="#777"/><rect x="519.8" y="72" width="0.8" height="3" fill="#777"/><rect x="526.4" y="63" width="0.9" height="12" fill="#8a8a8a"/><text x="528.4" y="71.5" font-size="6.5" fill="#bdbdbd" font-family="Liberation Sans">12</text><rect x="533.0" y="72" width="0.8" height="3" fill="#777"/><rect x="539.6" y="72" width="0.8" height="3" fill="#777"/><rect x="546.3" y="72" width="0.8" height="3" fill="#777"/><rect x="552.9" y="72" width="0.8" height="3" fill="#777"/><rect x="559.5" y="63" width="0.9" height="12" fill="#8a8a8a"/><text x="561.5" y="71.5" font-size="6.5" fill="#bdbdbd" font-family="Liberation Sans">13</text><rect x="566.1" y="72" width="0.8" height="3" fill="#777"/><rect x="572.8" y="72" width="0.8" height="3" fill="#777"/><rect x="579.4" y="72" width="0.8" height="3" fill="#777"/><rect x="586.0" y="72" width="0.8" height="3" fill="#777"/><rect x="592.7" y="63" width="0.9" height="12" fill="#8a8a8a"/><text x="594.7" y="71.5" font-size="6.5" fill="#bdbdbd" font-family="Liberation Sans">14</text><rect x="599.3" y="72" width="0.8" height="3" fill="#777"/><rect x="605.9" y="72" width="0.8" height="3" fill="#777"/><rect x="612.5" y="72" width="0.8" height="3" fill="#777"/><rect x="619.2" y="72" width="0.8" height="3" fill="#777"/><rect x="625.8" y="63" width="0.9" height="12" fill="#8a8a8a"/><text x="627.8" y="71.5" font-size="6.5" fill="#bdbdbd" font-family="Liberation Sans">15</text><rect x="632.4" y="72" width="0.8" height="3" fill="#777"/><rect x="639.1" y="72" width="0.8" height="3" fill="#777"/><rect x="645.7" y="72" width="0.8" height="3" fill="#777"/><rect x="652.3" y="72" width="0.8" height="3" fill="#777"/><rect x="658.9" y="63" width="0.9" height="12" fill="#8a8a8a"/><text x="660.9" y="71.5" font-size="6.5" fill="#bdbdbd" font-family="Liberation Sans">16</text><rect x="665.6" y="72" width="0.8" height="3" fill="#777"/><rect x="672.2" y="72" width="0.8" height="3" fill="#777"/><rect x="678.8" y="72" width="0.8" height="3" fill="#777"/><rect x="685.5" y="72" width="0.8" height="3" fill="#777"/><rect x="692.1" y="63" width="0.9" height="12" fill="#8a8a8a"/><text x="694.1" y="71.5" font-size="6.5" fill="#bdbdbd" font-family="Liberation Sans">17</text><rect x="698.7" y="72" width="0.8" height="3" fill="#777"/><rect x="705.3" y="72" width="0.8" height="3" fill="#777"/><rect x="712.0" y="72" width="0.8" height="3" fill="#777"/><rect x="718.6" y="72" width="0.8" height="3" fill="#777"/><rect x="725.2" y="63" width="0.9" height="12" fill="#8a8a8a"/><text x="727.2" y="71.5" font-size="6.5" fill="#bdbdbd" font-family="Liberation Sans">18</text><rect x="731.8" y="72" width="0.8" height="3" fill="#777"/><rect x="738.5" y="72" width="0.8" height="3" fill="#777"/><rect x="745.1" y="72" width="0.8" height="3" fill="#777"/><rect x="751.7" y="72" width="0.8" height="3" fill="#777"/><rect x="758.4" y="63" width="0.9" height="12" fill="#8a8a8a"/><text x="760.4" y="71.5" font-size="6.5" fill="#bdbdbd" font-family="Liberation Sans">19</text><rect x="765.0" y="72" width="0.8" height="3" fill="#777"/><rect x="771.6" y="72" width="0.8" height="3" fill="#777"/><rect x="778.2" y="72" width="0.8" height="3" fill="#777"/><rect x="784.9" y="72" width="0.8" height="3" fill="#777"/><rect x="791.5" y="63" width="0.9" height="12" fill="#8a8a8a"/><text x="793.5" y="71.5" font-size="6.5" fill="#bdbdbd" font-family="Liberation Sans">20</text><rect x="798.1" y="72" width="0.8" height="3" fill="#777"/><rect x="804.8" y="72" width="0.8" height="3" fill="#777"/><rect x="811.4" y="72" width="0.8" height="3" fill="#777"/><rect x="818.0" y="72" width="0.8" height="3" fill="#777"/><rect x="824.6" y="63" width="0.9" height="12" fill="#8a8a8a"/><text x="826.6" y="71.5" font-size="6.5" fill="#bdbdbd" font-family="Liberation Sans">21</text><rect x="831.3" y="72" width="0.8" height="3" fill="#777"/><rect x="837.9" y="72" width="0.8" height="3" fill="#777"/><rect x="844.5" y="72" width="0.8" height="3" fill="#777"/><rect x="851.2" y="72" width="0.8" height="3" fill="#777"/><rect x="857.8" y="63" width="0.9" height="12" fill="#8a8a8a"/><text x="859.8" y="71.5" font-size="6.5" fill="#bdbdbd" font-family="Liberation Sans">22</text><rect x="864.4" y="72" width="0.8" height="3" fill="#777"/><rect x="871.0" y="72" width="0.8" height="3" fill="#777"/><rect x="877.7" y="72" width="0.8" height="3" fill="#777"/><rect x="884.3" y="72" width="0.8" height="3" fill="#777"/><rect x="890.9" y="63" width="0.9" height="12" fill="#8a8a8a"/><text x="892.9" y="71.5" font-size="6.5" fill="#bdbdbd" font-family="Liberation Sans">23</text><rect x="897.5" y="72" width="0.8" height="3" fill="#777"/><rect x="904.2" y="72" width="0.8" height="3" fill="#777"/><rect x="910.8" y="72" width="0.8" height="3" fill="#777"/><rect x="917.4" y="72" width="0.8" height="3" fill="#777"/><rect x="924.1" y="63" width="0.9" height="12" fill="#8a8a8a"/><text x="926.1" y="71.5" font-size="6.5" fill="#bdbdbd" font-family="Liberation Sans">24</text><rect x="930.7" y="72" width="0.8" height="3" fill="#777"/><rect x="937.3" y="72" width="0.8" height="3" fill="#777"/><rect x="943.9" y="72" width="0.8" height="3" fill="#777"/><rect x="950.6" y="72" width="0.8" height="3" fill="#777"/><rect x="957.2" y="63" width="0.9" height="12" fill="#8a8a8a"/><text x="959.2" y="71.5" font-size="6.5" fill="#bdbdbd" font-family="Liberation Sans">25</text><rect x="963.8" y="72" width="0.8" height="3" fill="#777"/><rect x="970.5" y="72" width="0.8" height="3" fill="#777"/><rect x="977.1" y="72" width="0.8" height="3" fill="#777"/><rect x="983.7" y="72" width="0.8" height="3" fill="#777"/><rect x="990.3" y="63" width="0.9" height="12" fill="#8a8a8a"/><text x="992.3" y="71.5" font-size="6.5" fill="#bdbdbd" font-family="Liberation Sans">26</text><rect x="997.0" y="72" width="0.8" height="3" fill="#777"/><rect x="1003.6" y="72" width="0.8" height="3" fill="#777"/><rect x="1010.2" y="72" width="0.8" height="3" fill="#777"/><rect x="1016.9" y="72" width="0.8" height="3" fill="#777"/><rect x="1023.5" y="63" width="0.9" height="12" fill="#8a8a8a"/><text x="1025.5" y="71.5" font-size="6.5" fill="#bdbdbd" font-family="Liberation Sans">27</text><rect x="1030.1" y="72" width="0.8" height="3" fill="#777"/><rect x="1036.7" y="72" width="0.8" height="3" fill="#777"/><rect x="1043.4" y="72" width="0.8" height="3" fill="#777"/><rect x="1050.0" y="72" width="0.8" height="3" fill="#777"/><rect x="1056.6" y="63" width="0.9" height="12" fill="#8a8a8a"/><text x="1058.6" y="71.5" font-size="6.5" fill="#bdbdbd" font-family="Liberation Sans">28</text><rect x="1063.2" y="72" width="0.8" height="3" fill="#777"/><rect x="1069.9" y="72" width="0.8" height="3" fill="#777"/><rect x="1076.5" y="72" width="0.8" height="3" fill="#777"/><rect x="1083.1" y="72" width="0.8" height="3" fill="#777"/><rect x="1089.8" y="63" width="0.9" height="12" fill="#8a8a8a"/><text x="1091.8" y="71.5" font-size="6.5" fill="#bdbdbd" font-family="Liberation Sans">29</text><rect x="1096.4" y="72" width="0.8" height="3" fill="#777"/><rect x="1103.0" y="72" width="0.8" height="3" fill="#777"/><rect x="1109.6" y="72" width="0.8" height="3" fill="#777"/><rect x="1116.3" y="72" width="0.8" height="3" fill="#777"/><rect x="1122.9" y="63" width="0.9" height="12" fill="#8a8a8a"/><text x="1124.9" y="71.5" font-size="6.5" fill="#bdbdbd" font-family="Liberation Sans">30</text><rect x="1129.5" y="72" width="0.8" height="3" fill="#777"/><rect x="1136.2" y="72" width="0.8" height="3" fill="#777"/><rect x="1142.8" y="72" width="0.8" height="3" fill="#777"/><rect x="1149.4" y="72" width="0.8" height="3" fill="#777"/><rect x="1156.0" y="63" width="0.9" height="12" fill="#8a8a8a"/><text x="1158.0" y="71.5" font-size="6.5" fill="#bdbdbd" font-family="Liberation Sans">31</text><rect x="1162.7" y="72" width="0.8" height="3" fill="#777"/><rect x="1169.3" y="72" width="0.8" height="3" fill="#777"/><rect x="1175.9" y="72" width="0.8" height="3" fill="#777"/><rect x="1182.6" y="72" width="0.8" height="3" fill="#777"/><rect x="1189.2" y="63" width="0.9" height="12" fill="#8a8a8a"/><text x="1191.2" y="71.5" font-size="6.5" fill="#bdbdbd" font-family="Liberation Sans">32</text><rect x="1195.8" y="72" width="0.8" height="3" fill="#777"/><rect x="1202.4" y="72" width="0.8" height="3" fill="#777"/><rect x="1209.1" y="72" width="0.8" height="3" fill="#777"/><rect x="1215.7" y="72" width="0.8" height="3" fill="#777"/><rect x="1222.3" y="63" width="0.9" height="12" fill="#8a8a8a"/><text x="1224.3" y="71.5" font-size="6.5" fill="#bdbdbd" font-family="Liberation Sans">33</text><rect x="1228.9" y="72" width="0.8" height="3" fill="#777"/><rect x="1235.6" y="72" width="0.8" height="3" fill="#777"/></svg>
<svg style="left:0;top:0" width="1272" height="720"><rect x="36" y="78.3" width="3" height="0.8" fill="#777"/><rect x="28" y="85.0" width="12" height="0.9" fill="#8a8a8a"/><text x="30.5" y="83.5" font-size="6" fill="#a8a8a8" font-family="Liberation Sans">2</text><rect x="36" y="91.7" width="3" height="0.8" fill="#777"/><rect x="36" y="98.3" width="3" height="0.8" fill="#777"/><rect x="36" y="105.0" width="3" height="0.8" fill="#777"/><rect x="36" y="111.7" width="3" height="0.8" fill="#777"/><rect x="28" y="118.4" width="12" height="0.9" fill="#8a8a8a"/><text x="30.5" y="116.9" font-size="6" fill="#a8a8a8" font-family="Liberation Sans">3</text><rect x="36" y="125.0" width="3" height="0.8" fill="#777"/><rect x="36" y="131.7" width="3" height="0.8" fill="#777"/><rect x="36" y="138.4" width="3" height="0.8" fill="#777"/><rect x="36" y="145.0" width="3" height="0.8" fill="#777"/><rect x="28" y="151.7" width="12" height="0.9" fill="#8a8a8a"/><text x="30.5" y="150.2" font-size="6" fill="#a8a8a8" font-family="Liberation Sans">4</text><rect x="36" y="158.4" width="3" height="0.8" fill="#777"/><rect x="36" y="165.1" width="3" height="0.8" fill="#777"/><rect x="36" y="171.7" width="3" height="0.8" fill="#777"/><rect x="36" y="178.4" width="3" height="0.8" fill="#777"/><rect x="28" y="185.1" width="12" height="0.9" fill="#8a8a8a"/><text x="30.5" y="183.6" font-size="6" fill="#a8a8a8" font-family="Liberation Sans">5</text><rect x="36" y="191.8" width="3" height="0.8" fill="#777"/><rect x="36" y="198.4" width="3" height="0.8" fill="#777"/><rect x="36" y="205.1" width="3" height="0.8" fill="#777"/><rect x="36" y="211.8" width="3" height="0.8" fill="#777"/><rect x="28" y="218.4" width="12" height="0.9" fill="#8a8a8a"/><text x="30.5" y="216.9" font-size="6" fill="#a8a8a8" font-family="Liberation Sans">6</text><rect x="36" y="225.1" width="3" height="0.8" fill="#777"/><rect x="36" y="231.8" width="3" height="0.8" fill="#777"/><rect x="36" y="238.5" width="3" height="0.8" fill="#777"/><rect x="36" y="245.1" width="3" height="0.8" fill="#777"/><rect x="28" y="251.8" width="12" height="0.9" fill="#8a8a8a"/><text x="30.5" y="250.3" font-size="6" fill="#a8a8a8" font-family="Liberation Sans">7</text><rect x="36" y="258.5" width="3" height="0.8" fill="#777"/><rect x="36" y="265.1" width="3" height="0.8" fill="#777"/><rect x="36" y="271.8" width="3" height="0.8" fill="#777"/><rect x="36" y="278.5" width="3" height="0.8" fill="#777"/><rect x="28" y="285.2" width="12" height="0.9" fill="#8a8a8a"/><text x="30.5" y="283.7" font-size="6" fill="#a8a8a8" font-family="Liberation Sans">8</text><rect x="36" y="291.8" width="3" height="0.8" fill="#777"/><rect x="36" y="298.5" width="3" height="0.8" fill="#777"/><rect x="36" y="305.2" width="3" height="0.8" fill="#777"/><rect x="36" y="311.8" width="3" height="0.8" fill="#777"/><rect x="28" y="318.5" width="12" height="0.9" fill="#8a8a8a"/><text x="30.5" y="317.0" font-size="6" fill="#a8a8a8" font-family="Liberation Sans">9</text><rect x="36" y="325.2" width="3" height="0.8" fill="#777"/><rect x="36" y="331.9" width="3" height="0.8" fill="#777"/><rect x="36" y="338.5" width="3" height="0.8" fill="#777"/><rect x="36" y="345.2" width="3" height="0.8" fill="#777"/><rect x="28" y="351.9" width="12" height="0.9" fill="#8a8a8a"/><text x="30.5" y="342.9" font-size="5.5" fill="#9a9a9a" font-family="Liberation Sans">1</text><text x="30.5" y="349.9" font-size="5.5" fill="#9a9a9a" font-family="Liberation Sans">0</text><rect x="36" y="358.6" width="3" height="0.8" fill="#777"/><rect x="36" y="365.2" width="3" height="0.8" fill="#777"/><rect x="36" y="371.9" width="3" height="0.8" fill="#777"/><rect x="36" y="378.6" width="3" height="0.8" fill="#777"/><rect x="28" y="385.2" width="12" height="0.9" fill="#8a8a8a"/><text x="30.5" y="376.2" font-size="5.5" fill="#9a9a9a" font-family="Liberation Sans">1</text><text x="30.5" y="383.2" font-size="5.5" fill="#9a9a9a" font-family="Liberation Sans">1</text><rect x="36" y="391.9" width="3" height="0.8" fill="#777"/><rect x="36" y="398.6" width="3" height="0.8" fill="#777"/><rect x="36" y="405.3" width="3" height="0.8" fill="#777"/><rect x="36" y="411.9" width="3" height="0.8" fill="#777"/><rect x="28" y="418.6" width="12" height="0.9" fill="#8a8a8a"/><text x="30.5" y="409.6" font-size="5.5" fill="#9a9a9a" font-family="Liberation Sans">1</text><text x="30.5" y="416.6" font-size="5.5" fill="#9a9a9a" font-family="Liberation Sans">2</text><rect x="36" y="425.3" width="3" height="0.8" fill="#777"/><rect x="36" y="431.9" width="3" height="0.8" fill="#777"/><rect x="36" y="438.6" width="3" height="0.8" fill="#777"/><rect x="36" y="445.3" width="3" height="0.8" fill="#777"/><rect x="28" y="452.0" width="12" height="0.9" fill="#8a8a8a"/><text x="30.5" y="443.0" font-size="5.5" fill="#9a9a9a" font-family="Liberation Sans">1</text><text x="30.5" y="450.0" font-size="5.5" fill="#9a9a9a" font-family="Liberation Sans">3</text><rect x="36" y="458.6" width="3" height="0.8" fill="#777"/><rect x="36" y="465.3" width="3" height="0.8" fill="#777"/><rect x="36" y="472.0" width="3" height="0.8" fill="#777"/><rect x="36" y="478.6" width="3" height="0.8" fill="#777"/><rect x="28" y="485.3" width="12" height="0.9" fill="#8a8a8a"/><text x="30.5" y="476.3" font-size="5.5" fill="#9a9a9a" font-family="Liberation Sans">1</text><text x="30.5" y="483.3" font-size="5.5" fill="#9a9a9a" font-family="Liberation Sans">4</text><rect x="36" y="492.0" width="3" height="0.8" fill="#777"/><rect x="36" y="498.7" width="3" height="0.8" fill="#777"/><rect x="36" y="505.3" width="3" height="0.8" fill="#777"/><rect x="36" y="512.0" width="3" height="0.8" fill="#777"/><rect x="28" y="518.7" width="12" height="0.9" fill="#8a8a8a"/><text x="30.5" y="509.7" font-size="5.5" fill="#9a9a9a" font-family="Liberation Sans">1</text><text x="30.5" y="516.7" font-size="5.5" fill="#9a9a9a" font-family="Liberation Sans">5</text><rect x="36" y="525.4" width="3" height="0.8" fill="#777"/><rect x="36" y="532.0" width="3" height="0.8" fill="#777"/><rect x="36" y="538.7" width="3" height="0.8" fill="#777"/><rect x="36" y="545.4" width="3" height="0.8" fill="#777"/><rect x="28" y="552.0" width="12" height="0.9" fill="#8a8a8a"/><text x="30.5" y="543.0" font-size="5.5" fill="#9a9a9a" font-family="Liberation Sans">1</text><text x="30.5" y="550.0" font-size="5.5" fill="#9a9a9a" font-family="Liberation Sans">6</text><rect x="36" y="558.7" width="3" height="0.8" fill="#777"/><rect x="36" y="565.4" width="3" height="0.8" fill="#777"/><rect x="36" y="572.1" width="3" height="0.8" fill="#777"/><rect x="36" y="578.7" width="3" height="0.8" fill="#777"/><rect x="28" y="585.4" width="12" height="0.9" fill="#8a8a8a"/><text x="30.5" y="576.4" font-size="5.5" fill="#9a9a9a" font-family="Liberation Sans">1</text><text x="30.5" y="583.4" font-size="5.5" fill="#9a9a9a" font-family="Liberation Sans">7</text><rect x="36" y="592.1" width="3" height="0.8" fill="#777"/><rect x="36" y="598.7" width="3" height="0.8" fill="#777"/><rect x="36" y="605.4" width="3" height="0.8" fill="#777"/><rect x="36" y="612.1" width="3" height="0.8" fill="#777"/><rect x="28" y="618.8" width="12" height="0.9" fill="#8a8a8a"/><text x="30.5" y="609.8" font-size="5.5" fill="#9a9a9a" font-family="Liberation Sans">1</text><text x="30.5" y="616.8" font-size="5.5" fill="#9a9a9a" font-family="Liberation Sans">8</text><rect x="36" y="625.4" width="3" height="0.8" fill="#777"/><rect x="36" y="632.1" width="3" height="0.8" fill="#777"/><rect x="36" y="638.8" width="3" height="0.8" fill="#777"/><rect x="36" y="645.4" width="3" height="0.8" fill="#777"/><rect x="28" y="652.1" width="12" height="0.9" fill="#8a8a8a"/><text x="30.5" y="643.1" font-size="5.5" fill="#9a9a9a" font-family="Liberation Sans">1</text><text x="30.5" y="650.1" font-size="5.5" fill="#9a9a9a" font-family="Liberation Sans">9</text><rect x="36" y="658.8" width="3" height="0.8" fill="#777"/><rect x="36" y="665.5" width="3" height="0.8" fill="#777"/><rect x="36" y="672.1" width="3" height="0.8" fill="#777"/><rect x="36" y="678.8" width="3" height="0.8" fill="#777"/></svg>
<div style="position:absolute;left:40px;top:75px;width:1196px;height:609px;background:#333333"></div>
<div style="position:absolute;left:117px;top:75px;width:4px;height:609px;background:linear-gradient(90deg,#333,#3a2020)"></div>
<div style="position:absolute;left:120px;top:75px;width:9px;height:609px;background:#fdf8f2"></div>
<div style="position:absolute;left:128px;top:75px;width:1.2px;height:609px;background:#6a625a"></div>
<div style="position:absolute;left:129.5px;top:75px;width:11px;height:609px;background:linear-gradient(90deg,#f6faf6,#e4f2ee 70%,#eef6f0 85%,#f9f5ec)"></div>
<div style="position:absolute;left:141px;top:75px;width:467px;height:609px;background:linear-gradient(90deg,#fcf5ec 0%,#f9f1e6 35%,#f4ecde 70%,#f1e9d8 100%)"></div>
<div style="position:absolute;left:606px;top:75px;width:12px;height:609px;background:linear-gradient(90deg,#eef0e2,#e4eee0 50%,#f5f4ea)"></div>
<div style="position:absolute;left:617px;top:75px;width:4px;height:609px;background:#fdfaf2"></div>
<div style="position:absolute;left:620px;top:75px;width:1.3px;height:609px;background:#5c5040"></div>
<div style="position:absolute;left:621.3px;top:75px;width:8px;height:609px;background:linear-gradient(90deg,#fdf8ef,#f8e4dc)"></div>
<div style="position:absolute;left:629px;top:75px;width:2.5px;height:609px;background:#3a1510"></div>
<svg style="left:640px;top:475px" width="90" height="209" viewBox="640 475 90 209"><defs><linearGradient id="gstripe" x1="0.15" y1="0.1" x2="0.85" y2="0.9"><stop offset="0" stop-color="#3a2618"/><stop offset="0.32" stop-color="#4e3422"/><stop offset="0.42" stop-color="#b8983c"/><stop offset="0.5" stop-color="#f2e294"/><stop offset="0.6" stop-color="#9a7a30"/><stop offset="0.68" stop-color="#6a4c22"/><stop offset="0.8" stop-color="#e6cf7c"/><stop offset="0.9" stop-color="#f6e6a2"/><stop offset="1" stop-color="#b89848"/></linearGradient><radialGradient id="wcirc" cx="0.4" cy="0.4" r="0.7"><stop offset="0" stop-color="#fbf8f0"/><stop offset="1" stop-color="#e9e2d2"/></radialGradient></defs><circle cx="681.5" cy="517.5" r="19.8" fill="#c2a352"/><circle cx="681.5" cy="517.5" r="18.6" fill="none" stroke="#d2b868" stroke-width="1.2" opacity="0.6"/><circle cx="681.5" cy="563" r="19.2" fill="url(#gstripe)"/><circle cx="681.5" cy="606" r="20" fill="url(#wcirc)"/><circle cx="681.5" cy="651" r="19.5" fill="#030303"/><circle cx="681.5" cy="697" r="20" fill="#fafafa"/></svg>
<div style="position:absolute;left:736px;top:75px;width:4.5px;height:609px;background:linear-gradient(90deg,#333,#3a1a18)"></div>
<div style="position:absolute;left:740.5px;top:75px;width:8px;height:609px;background:#fdfaf4"></div>
<div style="position:absolute;left:747.5px;top:75px;width:1px;height:609px;background:#dcc8c0"></div>
<div style="position:absolute;left:748.5px;top:75px;width:8px;height:609px;background:#faf8f0"></div>
<div style="position:absolute;left:756.5px;top:75px;width:4px;height:609px;background:linear-gradient(90deg,#f8f6ee,#e4f2ee 50%,#f8f5ec)"></div>
<div style="position:absolute;left:760.5px;top:75px;width:475px;height:609px;background:linear-gradient(90deg,#fcf5ec 0%,#faf3e7 40%,#f5eede 75%,#f2eada 100%)"></div>
<div style="position:absolute;left:1235px;top:75px;width:11px;height:609px;background:#262626"></div>
<div class="t" style="left:1237px;top:66px;font-size:9px;color:#777;">&#710;</div>
<div style="position:absolute;left:1246px;top:44px;width:26px;height:650px;background:#282828"></div>
<div style="position:absolute;left:1246px;top:55px;width:1px;height:629px;background:#1a1a1a"></div>
<div style="position:absolute;left:1249px;top:121px;width:22px;height:1px;background:#1e1e1e"></div>
<div style="position:absolute;left:1249px;top:184px;width:22px;height:1px;background:#1e1e1e"></div>
<div style="position:absolute;left:1249px;top:211px;width:22px;height:1px;background:#1e1e1e"></div>
<div style="position:absolute;left:1249px;top:352px;width:22px;height:1px;background:#1e1e1e"></div>
<div style="position:absolute;left:1249px;top:395px;width:22px;height:1px;background:#1e1e1e"></div>
<div style="position:absolute;left:1249px;top:425px;width:22px;height:1px;background:#1e1e1e"></div>
<div style="position:absolute;left:1249px;top:470px;width:22px;height:1px;background:#1e1e1e"></div>
<svg style="left:1253px;top:62px" width="12" height="12" viewBox="0 0 12 12"><rect x="1" y="2" width="10" height="8" fill="#ddd"/><rect x="2" y="5" width="3" height="2" fill="#555"/><rect x="6" y="5" width="4" height="2" fill="#555"/><rect x="2" y="8" width="8" height="1" fill="#555"/></svg>
<svg style="left:1253px;top:81px" width="12" height="12" viewBox="0 0 12 12"><rect x="3" y="6" width="6" height="5" fill="#ddd"/><path d="M6 0 L6 6 M2 3 L6 1 L10 3" stroke="#ddd" stroke-width="1.4" fill="none"/></svg>
<svg style="left:1253px;top:100px" width="12" height="12" viewBox="0 0 12 12"><circle cx="6" cy="4" r="2.8" fill="#ddd"/><circle cx="3.3" cy="7.5" r="2.8" fill="#ddd"/><circle cx="8.7" cy="7.5" r="2.8" fill="#ddd"/><rect x="5.2" y="7" width="1.6" height="4" fill="#ddd"/></svg>
<svg style="left:1253px;top:128px" width="12" height="12" viewBox="0 0 12 12"><path d="M6 1 L11 4 L6 7 L1 4 Z" fill="#ddd"/><path d="M1 6.5 L6 9.5 L11 6.5" fill="none" stroke="#ddd" stroke-width="1.3"/></svg>
<svg style="left:1253px;top:146px" width="12" height="12" viewBox="0 0 12 12"><rect x="1" y="2" width="9" height="9" fill="none" stroke="#ddd" stroke-width="1.3"/><path d="M5 7 L11 1 M8 1 L11 1 L11 4" stroke="#ddd" stroke-width="1.3" fill="none"/></svg>
<svg style="left:1253px;top:165px" width="12" height="12" viewBox="0 0 12 12"><rect x="1" y="1" width="7" height="7" fill="none" stroke="#ddd" stroke-width="1.2"/><rect x="4" y="4" width="7" height="7" fill="#282828" stroke="#ddd" stroke-width="1.2"/></svg>
<svg style="left:1253px;top:191px" width="12" height="12" viewBox="0 0 12 12"><path d="M1 1 L11 1 L11 8 L5 8 L2 11 L2 8 L1 8 Z" fill="#ddd"/></svg>
<svg style="left:1253px;top:219px" width="12" height="12" viewBox="0 0 12 12"><path d="M1 3 L11 3 M1 6 L11 6 M1 9 L11 9" stroke="#ddd" stroke-width="1.1"/><rect x="3" y="2" width="2" height="2" fill="#ddd"/><rect x="7" y="5" width="2" height="2" fill="#ddd"/><rect x="4" y="8" width="2" height="2" fill="#ddd"/></svg>
<svg style="left:1253px;top:237px" width="12" height="12" viewBox="0 0 12 12"><rect x="1" y="1" width="10" height="10" fill="#ddd"/><rect x="3" y="3" width="6" height="6" fill="#282828"/><rect x="4" y="4" width="4" height="4" fill="#ddd"/></svg>
<svg style="left:1253px;top:265px" width="12" height="12" viewBox="0 0 12 12"><text x="2" y="10" font-size="12" font-style="italic" fill="#ddd" font-family="Liberation Serif">0</text></svg>
<svg style="left:1253px;top:293px" width="12" height="12" viewBox="0 0 12 12"><rect x="1.5" y="1.5" width="9" height="9" fill="none" stroke="#ddd" stroke-width="1.3" stroke-dasharray="2 1.5"/></svg>
<svg style="left:1253px;top:311px" width="12" height="12" viewBox="0 0 12 12"><rect x="1" y="0" width="1.3" height="12" fill="#ddd"/><rect x="3" y="2" width="5" height="3" fill="#ddd"/><rect x="3" y="7" width="8" height="3" fill="#ddd"/></svg>
<svg style="left:1253px;top:329px" width="12" height="12" viewBox="0 0 12 12"><rect x="1" y="1" width="6" height="6" fill="#ddd"/><rect x="5" y="5" width="6" height="6" fill="none" stroke="#ddd" stroke-width="1.3"/></svg>
<svg style="left:1253px;top:356px" width="12" height="12" viewBox="0 0 12 12"><circle cx="6" cy="6" r="4.5" fill="#ddd"/><circle cx="6" cy="6" r="2" fill="#aaa"/></svg>
<svg style="left:1253px;top:376px" width="12" height="12" viewBox="0 0 12 12"><rect x="3" y="1" width="8" height="8" fill="none" stroke="#ddd" stroke-width="1.2"/><rect x="1" y="6" width="5" height="5" fill="#282828" stroke="#ddd" stroke-width="1.2"/></svg>
<svg style="left:1253px;top:402px" width="12" height="12" viewBox="0 0 12 12"><circle cx="5" cy="5" r="4" fill="#bbb"/><circle cx="7" cy="7" r="4" fill="#888"/></svg>
<svg style="left:1253px;top:433px" width="12" height="12" viewBox="0 0 12 12"><text x="1" y="11" font-size="12" fill="#eee" font-family="Liberation Sans">A</text><rect x="0" y="11" width="12" height="1" fill="#ccc"/></svg>
<svg style="left:1253px;top:449px" width="12" height="12" viewBox="0 0 12 12"><path d="M5 1 L11 1 M9 1 L9 11 M7 1 L7 11 M7 1 Q2 1 2 4 Q2 7 7 7" stroke="#ddd" stroke-width="1.4" fill="#ddd"/></svg>
<svg style="left:1253px;top:476px" width="12" height="12" viewBox="0 0 12 12"><circle cx="6" cy="6" r="4.5" fill="#ddd"/><path d="M6 0 L6 12" stroke="#282828" stroke-width="1"/></svg>
<div style="position:absolute;left:1081px;top:274px;width:159px;height:143px;background:#2a2a2a;border:1px solid #151515;border-top-left-radius:3px"></div>
<div style="position:absolute;left:1082px;top:275px;width:157px;height:9px;background:#1f1f1f"></div>
<div class="t" style="left:1218px;top:276px;font-size:7px;color:#bbb;letter-spacing:-1px">&#8250;&#8249;</div>
<div class="t" style="left:1232px;top:275px;font-size:8px;color:#bbb;">&#215;</div>
<div style="position:absolute;left:1082px;top:284px;width:157px;height:16px;background:#1f1f1f"></div>
<div style="position:absolute;left:1082px;top:284px;width:34px;height:16px;background:#282828"></div>
<div class="t" style="left:1085px;top:288px;font-size:7px;color:#777;">&#8942;</div>
<div class="t" style="left:1091px;top:288px;font-size:7.5px;color:#eeeeee;font-weight:bold">Color</div>
<div class="t" style="left:1120px;top:288px;font-size:7.5px;color:#9a9a9a;">Color Guide</div>
<svg style="left:1228px;top:289px" width="8" height="6" viewBox="0 0 8 6"><rect x="0" y="0" width="8" height="1.2" fill="#888"/><rect x="0" y="2.4" width="8" height="1.2" fill="#888"/><rect x="0" y="4.8" width="8" height="1.2" fill="#888"/></svg>
<div style="position:absolute;left:1236px;top:300px;width:3px;height:116px;background:#262626"></div>
<svg style="left:1087px;top:305px" width="8" height="8" viewBox="0 0 8 8"><circle cx="4" cy="4.5" r="3" fill="#eee"/><circle cx="4" cy="4.5" r="1.5" fill="#2c2c2c"/><path d="M0 1 L3 1 L3 3" stroke="#eee" fill="none"/></svg>
<svg style="left:1098px;top:305px" width="8" height="8" viewBox="0 0 8 8"><path d="M1 2 L5 2 L5 6 M3 4 L5 6 L7 4" stroke="#ddd" stroke-width="1.1" fill="none"/></svg>
<div class="t" style="left:1116px;top:311px;font-size:7px;color:#888;">T</div>
<div style="position:absolute;left:1125px;top:312px;width:74px;height:1px;background:#3a3a3a"></div>
<div style="position:absolute;left:1202px;top:307px;width:22px;height:13px;background:#232323"></div>
<div class="t" style="left:1226px;top:310px;font-size:6.5px;color:#999;">%</div>
<div style="position:absolute;left:1085px;top:318px;width:13px;height:12px;background:#c1a66c;border-radius:2px"></div>
<div style="position:absolute;left:1092px;top:325px;width:13px;height:13px;background:#fff;border:1px solid #555"></div>
<svg style="left:1092px;top:325px" width="13" height="13" viewBox="0 0 13 13"><rect x="2.5" y="2.5" width="8" height="8" fill="#5a0a14"/><path d="M12 1 L1 12" stroke="#c00018" stroke-width="2"/></svg>
<svg style="left:1088px;top:362px" width="7" height="7" viewBox="0 0 7 7"><path d="M6 2 L1 2 L3 0 M1 5 L6 5 L4 7" stroke="#ddd" stroke-width="1" fill="none"/></svg>
<div style="position:absolute;left:1101px;top:361px;width:11px;height:10px;background:#c1a66c;border:1px solid #eee"></div>
<div style="position:absolute;left:1086px;top:377px;width:8px;height:10px;background:#fff"></div>
<svg style="left:1086px;top:377px" width="8" height="10" viewBox="0 0 8 10"><path d="M8 0 L0 10" stroke="#c00" stroke-width="1.5"/></svg>
<div style="position:absolute;left:1094px;top:377px;width:8px;height:10px;background:#000"></div>
<div style="position:absolute;left:1102px;top:377px;width:9px;height:10px;background:#fff"></div>
<div style="position:absolute;left:1085px;top:393px;width:144px;height:15px;background:#161616"></div>
<div style="position:absolute;left:1086px;top:394px;width:142px;height:13px;background:linear-gradient(90deg,#fbfaf4 0%,#efe6c8 25%,#d9c48a 60%,#c2a355 100%)"></div>
<div style="position:absolute;left:1049px;top:474px;width:164px;height:177px;background:#2b2b2b;border:1px solid #151515"></div>
<div style="position:absolute;left:1050px;top:475px;width:162px;height:7px;background:#1f1f1f"></div>
<div style="position:absolute;left:1050px;top:482px;width:38px;height:20px;background:#2b2b2b"></div>
<div style="position:absolute;left:1088px;top:482px;width:6px;height:20px;background:#262626"></div>
<div class="t" style="left:1056px;top:489px;font-size:7px;color:#bdbdbd;">Stroke</div>
<div class="t" style="left:1088px;top:489px;font-size:7px;color:#888;">0</div>
<div style="position:absolute;left:1054px;top:505px;width:20px;height:22px;background:linear-gradient(90deg,#7a5a20,#f4e090 25%,#9a7a35 45%,#f8e49a 65%,#6a4a18 90%)"></div>
<div class="t" style="left:1076px;top:513px;font-size:5px;color:#bbb;">&#9662;</div>
<div style="position:absolute;left:1054px;top:532px;width:12px;height:11px;background:#c2a56a"></div>
<div style="position:absolute;left:1059px;top:537px;width:13px;height:13px;background:#fff;border:1px solid #555"></div>
<svg style="left:1059px;top:537px" width="13" height="13" viewBox="0 0 13 13"><rect x="2.5" y="2.5" width="8" height="8" fill="#5a0a14"/><path d="M12 1 L1 12" stroke="#c00018" stroke-width="2"/></svg>
<div class="t" style="left:1058px;top:556px;font-size:5px;color:#666;">Opa</div>
<div class="t" style="left:1058px;top:562px;font-size:5px;color:#666;">+80</div>
<div style="position:absolute;left:1060px;top:587px;width:34px;height:11px;background:linear-gradient(90deg,#f0dc90,#b08a3a 50%,#e6c87a)"></div>
<svg style="left:1060px;top:620px" width="12" height="12" viewBox="0 0 12 12"><path d="M2 10 L9 3 L10 2 L11 3 L10 4 L3 11 Z" fill="#555"/></svg>
<div class="t" style="left:1085px;top:612px;font-size:6px;color:#555;">Opa</div>
<div style="position:absolute;left:1093px;top:420px;width:143px;height:226px;background:#2a2a2a;border-left:1px solid #151515"></div>
<div style="position:absolute;left:1236px;top:420px;width:10px;height:264px;background:#262626"></div>
<div style="position:absolute;left:1094px;top:420px;width:142px;height:3px;background:#1c1c1c"></div>
<div style="position:absolute;left:1094px;top:423px;width:45px;height:16px;background:#2a2a2a"></div>
<div style="position:absolute;left:1139px;top:423px;width:97px;height:16px;background:#232323"></div>
<div class="t" style="left:1096px;top:427px;font-size:7px;color:#777;">&#8942;</div>
<div class="t" style="left:1102px;top:427px;font-size:7.5px;color:#eeeeee;font-weight:bold">Character</div>
<div class="t" style="left:1145px;top:427px;font-size:7.5px;color:#8f8f8f;">Paragraph</div>
<div class="t" style="left:1218px;top:427px;font-size:8px;color:#aaa;letter-spacing:-1px">&#8250;&#8250;</div>
<div style="position:absolute;left:1229px;top:425px;width:1px;height:12px;background:#444"></div>
<svg style="left:1233px;top:428px" width="9" height="7" viewBox="0 0 9 7"><rect x="0" y="0" width="9" height="1.3" fill="#888"/><rect x="0" y="2.8" width="9" height="1.3" fill="#888"/><rect x="0" y="5.6" width="9" height="1.3" fill="#888"/></svg>
<div style="position:absolute;left:1097px;top:444px;width:146px;height:16px;background:#1f1f1f"></div>
<svg style="left:1099px;top:447px" width="11" height="10" viewBox="0 0 11 10"><circle cx="4" cy="4" r="3" fill="none" stroke="#bbb" stroke-width="1.1"/><path d="M6 6 L8 8 M7 5 L9 7 L11 5" stroke="#bbb" fill="none"/></svg>
<div class="t" style="left:1114px;top:448px;font-size:7px;color:#e8e8e8;font-weight:bold">Myriad Pro</div>
<svg style="left:1233px;top:449px" width="6" height="6" viewBox="0 0 6 6"><path d="M0.5 1.5 L3 4 L5.5 1.5" fill="none" stroke="#cfcfcf" stroke-width="1.2"/></svg>
<div style="position:absolute;left:1097px;top:461px;width:146px;height:15px;background:#1f1f1f"></div>
<div class="t" style="left:1101px;top:465px;font-size:7px;color:#e0e0e0;">Regular</div>
<svg style="left:1233px;top:466px" width="6" height="6" viewBox="0 0 6 6"><path d="M0.5 1.5 L3 4 L5.5 1.5" fill="none" stroke="#cfcfcf" stroke-width="1.2"/></svg>
<svg style="left:1098px;top:484px" width="13" height="13" viewBox="0 0 13 13"><text x="0" y="11" font-size="12" font-weight="bold" fill="#ddd" font-family="Liberation Serif">T</text><text x="-2" y="7" font-size="6" fill="#ddd" font-family="Liberation Serif">t</text></svg>
<svg style="left:1114px;top:484px" width="7" height="13" viewBox="0 0 7 13"><path d="M1 5 L3.5 2 L6 5 M1 8 L3.5 11 L6 8" fill="none" stroke="#cfcfcf" stroke-width="1.2"/></svg>
<div style="position:absolute;left:1123px;top:484px;width:30px;height:14px;background:#202020"></div>
<div class="t" style="left:1126px;top:488px;font-size:6.5px;color:#cfcfcf;">6 pt</div>
<svg style="left:1155px;top:488px" width="6" height="6" viewBox="0 0 6 6"><path d="M0.5 1.5 L3 4 L5.5 1.5" fill="none" stroke="#cfcfcf" stroke-width="1.2"/></svg>
<svg style="left:1173px;top:484px" width="13" height="13" viewBox="0 0 13 13"><path d="M1 12 L12 12 M3 10 L6 2 L9 10 M4 7 L8 7" stroke="#ddd" stroke-width="1.3" fill="none"/></svg>
<svg style="left:1192px;top:484px" width="7" height="13" viewBox="0 0 7 13"><path d="M1 5 L3.5 2 L6 5 M1 8 L3.5 11 L6 8" fill="none" stroke="#cfcfcf" stroke-width="1.2"/></svg>
<div style="position:absolute;left:1201px;top:484px;width:32px;height:14px;background:#202020"></div>
<div class="t" style="left:1204px;top:488px;font-size:6.5px;color:#cfcfcf;">(7.2 pt)</div>
<svg style="left:1235px;top:488px" width="6" height="6" viewBox="0 0 6 6"><path d="M0.5 1.5 L3 4 L5.5 1.5" fill="none" stroke="#cfcfcf" stroke-width="1.2"/></svg>
<svg style="left:1098px;top:501px" width="13" height="13" viewBox="0 0 13 13"><text x="0" y="9" font-size="8" font-weight="bold" fill="#ddd" font-family="Liberation Sans">VA</text><path d="M1 11 L12 11" stroke="#ddd"/></svg>
<svg style="left:1114px;top:501px" width="7" height="13" viewBox="0 0 7 13"><path d="M1 5 L3.5 2 L6 5 M1 8 L3.5 11 L6 8" fill="none" stroke="#cfcfcf" stroke-width="1.2"/></svg>
<div style="position:absolute;left:1123px;top:501px;width:30px;height:14px;background:#202020"></div>
<div class="t" style="left:1126px;top:505px;font-size:6.5px;color:#cfcfcf;">Auto</div>
<svg style="left:1155px;top:505px" width="6" height="6" viewBox="0 0 6 6"><path d="M0.5 1.5 L3 4 L5.5 1.5" fill="none" stroke="#cfcfcf" stroke-width="1.2"/></svg>
<svg style="left:1173px;top:501px" width="13" height="13" viewBox="0 0 13 13"><rect x="0" y="1" width="13" height="9" fill="none" stroke="#ddd" stroke-width="1.2"/><text x="1" y="8" font-size="6" fill="#ddd" font-family="Liberation Sans">VA</text></svg>
<svg style="left:1192px;top:501px" width="7" height="13" viewBox="0 0 7 13"><path d="M1 5 L3.5 2 L6 5 M1 8 L3.5 11 L6 8" fill="none" stroke="#cfcfcf" stroke-width="1.2"/></svg>
<div style="position:absolute;left:1201px;top:501px;width:32px;height:14px;background:#202020"></div>
<div class="t" style="left:1204px;top:505px;font-size:6.5px;color:#cfcfcf;">0</div>
<svg style="left:1235px;top:505px" width="6" height="6" viewBox="0 0 6 6"><path d="M0.5 1.5 L3 4 L5.5 1.5" fill="none" stroke="#cfcfcf" stroke-width="1.2"/></svg>
<svg style="left:1098px;top:523px" width="13" height="13" viewBox="0 0 13 13"><text x="0" y="11" font-size="12" font-weight="bold" fill="#ddd" font-family="Liberation Serif">T</text><path d="M10 1 L10 11" stroke="#ddd"/></svg>
<svg style="left:1114px;top:523px" width="7" height="13" viewBox="0 0 7 13"><path d="M1 5 L3.5 2 L6 5 M1 8 L3.5 11 L6 8" fill="none" stroke="#cfcfcf" stroke-width="1.2"/></svg>
<div style="position:absolute;left:1123px;top:523px;width:30px;height:14px;background:#202020"></div>
<div class="t" style="left:1126px;top:527px;font-size:6.5px;color:#cfcfcf;">90%</div>
<svg style="left:1155px;top:527px" width="6" height="6" viewBox="0 0 6 6"><path d="M0.5 1.5 L3 4 L5.5 1.5" fill="none" stroke="#cfcfcf" stroke-width="1.2"/></svg>
<svg style="left:1173px;top:523px" width="13" height="13" viewBox="0 0 13 13"><text x="2" y="10" font-size="11" font-weight="bold" fill="#ddd" font-family="Liberation Serif">T</text><path d="M0 12 L13 12" stroke="#ddd" stroke-width="1.3"/></svg>
<svg style="left:1192px;top:523px" width="7" height="13" viewBox="0 0 7 13"><path d="M1 5 L3.5 2 L6 5 M1 8 L3.5 11 L6 8" fill="none" stroke="#cfcfcf" stroke-width="1.2"/></svg>
<div style="position:absolute;left:1201px;top:523px;width:32px;height:14px;background:#202020"></div>
<div class="t" style="left:1204px;top:527px;font-size:6.5px;color:#cfcfcf;">100%</div>
<svg style="left:1235px;top:527px" width="6" height="6" viewBox="0 0 6 6"><path d="M0.5 1.5 L3 4 L5.5 1.5" fill="none" stroke="#cfcfcf" stroke-width="1.2"/></svg>
<svg style="left:1098px;top:540px" width="13" height="13" viewBox="0 0 13 13"><text x="0" y="11" font-size="9" fill="#ddd" font-family="Liberation Sans">Aa</text></svg>
<svg style="left:1114px;top:540px" width="7" height="13" viewBox="0 0 7 13"><path d="M1 5 L3.5 2 L6 5 M1 8 L3.5 11 L6 8" fill="none" stroke="#cfcfcf" stroke-width="1.2"/></svg>
<div style="position:absolute;left:1123px;top:540px;width:30px;height:14px;background:#202020"></div>
<div class="t" style="left:1126px;top:544px;font-size:6.5px;color:#cfcfcf;">4 pt</div>
<svg style="left:1155px;top:544px" width="6" height="6" viewBox="0 0 6 6"><path d="M0.5 1.5 L3 4 L5.5 1.5" fill="none" stroke="#cfcfcf" stroke-width="1.2"/></svg>
<svg style="left:1173px;top:540px" width="13" height="13" viewBox="0 0 13 13"><circle cx="6.5" cy="6.5" r="5.5" fill="none" stroke="#ddd" stroke-width="1.2"/><text x="4" y="10" font-size="8" fill="#ddd" font-family="Liberation Serif">T</text></svg>
<svg style="left:1192px;top:540px" width="7" height="13" viewBox="0 0 7 13"><path d="M1 5 L3.5 2 L6 5 M1 8 L3.5 11 L6 8" fill="none" stroke="#cfcfcf" stroke-width="1.2"/></svg>
<div style="position:absolute;left:1201px;top:540px;width:32px;height:14px;background:#202020"></div>
<div class="t" style="left:1204px;top:544px;font-size:6.5px;color:#cfcfcf;">0&#176;</div>
<svg style="left:1235px;top:544px" width="6" height="6" viewBox="0 0 6 6"><path d="M0.5 1.5 L3 4 L5.5 1.5" fill="none" stroke="#cfcfcf" stroke-width="1.2"/></svg>
<div class="t" style="left:1099px;top:562px;font-size:9px;color:#dddddd;font-family:"Liberation Serif";font-weight:bold">TT</div>
<div class="t" style="left:1119px;top:562px;font-size:9px;color:#dddddd;font-family:"Liberation Serif";font-weight:bold">Tr</div>
<div class="t" style="left:1155px;top:562px;font-size:9px;color:#dddddd;font-family:"Liberation Serif";font-weight:bold">T&#185;</div>
<div class="t" style="left:1174px;top:562px;font-size:9px;color:#dddddd;font-family:"Liberation Serif";font-weight:bold">T&#8321;</div>
<svg style="left:1212px;top:562px" width="11" height="11" viewBox="0 0 11 11"><path d="M2 1 L9 1 M5.5 1 L5.5 10 M2 10 L9 10" stroke="#ddd" stroke-width="1.4"/></svg>
<svg style="left:1228px;top:562px" width="11" height="11" viewBox="0 0 11 11"><path d="M1 1 L10 1 M5.5 1 L5.5 10 M1 5 L10 5" stroke="#ddd" stroke-width="1.4"/></svg>
<div style="position:absolute;left:1097px;top:579px;width:58px;height:14px;background:#1f1f1f"></div>
<div class="t" style="left:1100px;top:583px;font-size:6.5px;color:#e0e0e0;">English: USA</div>
<svg style="left:1146px;top:583px" width="6" height="6" viewBox="0 0 6 6"><path d="M0.5 1.5 L3 4 L5.5 1.5" fill="none" stroke="#cfcfcf" stroke-width="1.2"/></svg>
<div class="t" style="left:1172px;top:582px;font-size:7px;color:#bbb;">a&#8322;</div>
<div style="position:absolute;left:1187px;top:579px;width:56px;height:14px;background:#1f1f1f"></div>
<svg style="left:1233px;top:583px" width="6" height="6" viewBox="0 0 6 6"><path d="M0.5 1.5 L3 4 L5.5 1.5" fill="none" stroke="#cfcfcf" stroke-width="1.2"/></svg>
<div style="position:absolute;left:1094px;top:598px;width:142px;height:1px;background:#222"></div>
<div class="t" style="left:1097px;top:605px;font-size:6.5px;color:#bdbdbd;">Snap to Glyph</div>
<svg style="left:1205px;top:603px" width="12" height="11" viewBox="0 0 12 11"><rect x="1" y="4" width="10" height="7" fill="none" stroke="#ccc" stroke-width="1.2"/><rect x="3" y="0" width="6" height="4" fill="none" stroke="#ccc"/></svg>
<svg style="left:1229px;top:603px" width="12" height="12" viewBox="0 0 12 12"><circle cx="6" cy="6" r="5" fill="none" stroke="#ddd" stroke-width="1.2"/><path d="M6 3 L6 9" stroke="#ddd" stroke-width="1.2"/></svg>
<div style="position:absolute;left:1098px;top:618px;width:18px;height:19px;background:#2e2e2e"></div>
<div style="position:absolute;left:1120px;top:618px;width:18px;height:19px;background:#2e2e2e"></div>
<div style="position:absolute;left:1143px;top:618px;width:18px;height:19px;background:#2e2e2e"></div>
<div style="position:absolute;left:1168px;top:618px;width:18px;height:19px;background:#2e2e2e"></div>
<div style="position:absolute;left:1203px;top:618px;width:18px;height:19px;background:#2e2e2e"></div>
<div style="position:absolute;left:1225px;top:618px;width:18px;height:19px;background:#2e2e2e"></div>
<div class="t" style="left:1101px;top:622px;font-size:9px;color:#777;font-family:"Liberation Serif"">Ax</div>
<div class="t" style="left:1123px;top:622px;font-size:9px;color:#777;font-family:"Liberation Serif"">Ar</div>
<svg style="left:1146px;top:621px" width="13" height="13" viewBox="0 0 13 13"><rect x="0.5" y="0.5" width="12" height="12" fill="none" stroke="#777"/><text x="2" y="10" font-size="9" fill="#777" font-family="Liberation Serif">Ag</text></svg>
<div class="t" style="left:1170px;top:622px;font-size:9px;color:#555;font-family:"Liberation Serif"">Ag</div>
<div class="t" style="left:1206px;top:622px;font-size:10px;color:#777;font-family:"Liberation Serif"">A</div>
<div class="t" style="left:1229px;top:622px;font-size:9px;color:#666;font-family:"Liberation Serif"">A</div>
<div class="t" style="left:1239px;top:676px;font-size:9px;color:#777;">&#8964;</div>
<div class="t" style="left:1060px;top:634px;font-size:13.1px;color:rgba(200,200,200,0.55);">Activate Windows</div>
<div class="t" style="left:1060px;top:651px;font-size:9.9px;color:rgba(120,120,120,0.35);">Go to Settings to activate Windows.</div>
<div style="position:absolute;left:28px;top:684px;width:1218px;height:10px;background:#2a2a2a"></div>
<div style="position:absolute;left:28px;top:683px;width:1208px;height:1.5px;background:#222"></div>
<div style="position:absolute;left:30px;top:685px;width:45px;height:9px;background:#1f1f1f"></div>
<div class="t" style="left:33px;top:686px;font-size:6px;color:#cfcfcf;">100%</div>
<svg style="left:67px;top:687px" width="5" height="5" viewBox="0 0 6 6"><path d="M0.5 1.5 L3 4 L5.5 1.5" fill="none" stroke="#ccc" stroke-width="1.2"/></svg>
<div style="position:absolute;left:78px;top:685px;width:45px;height:9px;background:#1f1f1f"></div>
<div class="t" style="left:81px;top:686px;font-size:6px;color:#bbb;">0&#176;</div>
<svg style="left:116px;top:687px" width="5" height="5" viewBox="0 0 6 6"><path d="M0.5 1.5 L3 4 L5.5 1.5" fill="none" stroke="#ccc" stroke-width="1.2"/></svg>
<div class="t" style="left:129px;top:685px;font-size:5.5px;color:#555;">|&#9664; &#9664;</div>
<div style="position:absolute;left:152px;top:685px;width:40px;height:9px;background:#1f1f1f"></div>
<div class="t" style="left:155px;top:686px;font-size:6px;color:#ccc;">1</div>
<svg style="left:183px;top:687px" width="5" height="5" viewBox="0 0 6 6"><path d="M0.5 1.5 L3 4 L5.5 1.5" fill="none" stroke="#ccc" stroke-width="1.2"/></svg>
<div class="t" style="left:195px;top:685px;font-size:5.5px;color:#ccc;">&#9654; &#9654;|</div>
<div class="t" style="left:272px;top:686px;font-size:6px;color:#aaa;">Selection</div>
<div class="t" style="left:355px;top:685px;font-size:5.5px;color:#ccc;">&#9654;</div>
<div class="t" style="left:367px;top:685px;font-size:7px;color:#888;">&#8249;</div>
<div class="t" style="left:1227px;top:684px;font-size:8px;color:#888;">&#8250;</div>
<div style="position:absolute;left:0px;top:694px;width:1272px;height:26px;background:#1e1e1e"></div>
<div style="position:absolute;left:0px;top:717px;width:1272px;height:3px;background:#0a0a0a"></div>
<svg style="left:10px;top:702px" width="11" height="11" viewBox="0 0 11 11"><path d="M0 1.5 L4.8 0.8 L4.8 5.2 L0 5.2 Z M5.6 0.7 L11 0 L11 5.2 L5.6 5.2 Z M0 5.9 L4.8 5.9 L4.8 10.2 L0 9.5 Z M5.6 5.9 L11 5.9 L11 11 L5.6 10.3 Z" fill="#f2f2f2"/></svg>
<div style="position:absolute;left:32px;top:695px;width:191px;height:22px;background:#f2f2f2"></div>
<svg style="left:41px;top:700px" width="11" height="11" viewBox="0 0 11 11"><circle cx="6.5" cy="4.5" r="3.6" fill="none" stroke="#333" stroke-width="1.1"/><path d="M4 7 L0.8 10.2" stroke="#333" stroke-width="1.2"/></svg>
<div class="t" style="left:58px;top:703px;font-size:9.9px;color:#333;">Type here to search</div>
<svg style="left:176px;top:697px" width="42" height="19" viewBox="0 0 42 19"><path d="M2 8 L12 2 L28 4 L30 14 L26 18 L4 18 Z" fill="#3c8ed8"/><path d="M12 2 L28 4 L26 8 L10 6 Z" fill="#7ac0f0"/><rect x="6" y="9" width="4" height="4" fill="#bfe4ff"/><rect x="14" y="9" width="4" height="4" fill="#bfe4ff"/><rect x="22" y="9" width="3" height="4" fill="#bfe4ff"/><path d="M26 10 L36 8 L40 16 L28 18 Z" fill="#5aa8e8"/></svg>
<svg style="left:230px;top:699px" width="16" height="16" viewBox="0 0 16 16"><rect x="2" y="4" width="12" height="8" fill="none" stroke="#ddd" stroke-width="1.2"/><path d="M1 2 L15 2 M1 14 L15 14" stroke="#ddd"/></svg>
<svg style="left:263px;top:699px" width="16" height="16" viewBox="0 0 16 16"><rect x="1" y="1" width="14" height="14" fill="#cfe8c0"/><path d="M4 4 L12 12 M12 4 L4 12" stroke="#1f8a3a" stroke-width="2"/></svg>
<svg style="left:296px;top:699px" width="16" height="16" viewBox="0 0 16 16"><rect x="1" y="1" width="14" height="14" fill="#f0f8f8"/><text x="3" y="13" font-size="13" font-weight="bold" fill="#13a6a0" font-family="Liberation Sans">q</text></svg>
<svg style="left:329px;top:699px" width="16" height="16" viewBox="0 0 16 16"><rect x="3" y="1" width="10" height="14" fill="#5a8fc8"/><rect x="4" y="2" width="8" height="3" fill="#cde"/><rect x="4" y="6" width="3" height="2" fill="#eef"/><rect x="8" y="6" width="3" height="2" fill="#eef"/><rect x="4" y="9" width="3" height="2" fill="#eef"/><rect x="8" y="9" width="3" height="2" fill="#eef"/><rect x="4" y="12" width="3" height="2" fill="#eef"/><rect x="8" y="12" width="3" height="2" fill="#eef"/></svg>
<svg style="left:362px;top:699px" width="16" height="16" viewBox="0 0 16 16"><circle cx="8" cy="8" r="7" fill="#e8542c"/><circle cx="8" cy="9" r="4" fill="#7a3cc8"/><path d="M2 6 Q4 1 9 1 Q14 2 15 8 Q12 4 8 5 Z" fill="#ffb82e"/></svg>
<svg style="left:394px;top:699px" width="16" height="16" viewBox="0 0 16 16"><circle cx="8" cy="8" r="7" fill="#1f8fd8"/><circle cx="9" cy="9" r="3.5" fill="#1e1e1e"/><path d="M1 8 Q3 1 9 1 Q15 2 15 8 L9 8 Q6 6 3 10Z" fill="#3ec86a"/></svg>
<svg style="left:427px;top:699px" width="16" height="16" viewBox="0 0 16 16"><ellipse cx="8" cy="8" rx="6.5" ry="7" fill="#cc1820"/><ellipse cx="8" cy="8" rx="3" ry="5" fill="#1e1e1e"/></svg>
<svg style="left:459px;top:699px" width="16" height="16" viewBox="0 0 16 16"><circle cx="8" cy="8" r="7" fill="#e24a36"/><path d="M8 8 L15 6 A7 7 0 0 1 4 14 Z" fill="#2aa550"/><path d="M8 8 L4 14 A7 7 0 0 1 2 4 Z" fill="#f4c20d"/><circle cx="8" cy="8" r="3" fill="#fff"/><circle cx="8" cy="8" r="2.2" fill="#3a7ee8"/><circle cx="12" cy="13" r="3" fill="#666"/></svg>
<svg style="left:492px;top:699px" width="16" height="16" viewBox="0 0 16 16"><rect x="1" y="1" width="14" height="14" rx="3" fill="#c8141c"/><path d="M4 12 Q8 3 8 3 Q8 8 12 11 Q6 10 4 12Z" fill="none" stroke="#fff" stroke-width="1.3"/></svg>
<svg style="left:524px;top:699px" width="16" height="16" viewBox="0 0 16 16"><rect x="1" y="3" width="14" height="11" fill="#f0c850"/><rect x="1" y="3" width="6" height="2" fill="#d8a830"/><rect x="3" y="8" width="10" height="4" fill="#5aa8e8"/></svg>
<svg style="left:556px;top:699px" width="16" height="16" viewBox="0 0 16 16"><path d="M3 14 L6 2 L14 4 L11 15 Z" fill="#a8d8f0"/><path d="M6 2 L14 4 L13 6 L5 5Z" fill="#e0f4ff"/></svg>
<svg style="left:589px;top:699px" width="16" height="16" viewBox="0 0 16 16"><rect x="2" y="1" width="12" height="14" fill="#a02060"/><rect x="2" y="4" width="12" height="3" fill="#4080d0"/><rect x="2" y="9" width="12" height="3" fill="#40a040"/><rect x="7" y="1" width="2" height="14" fill="#e0c040"/></svg>
<svg style="left:621px;top:699px" width="16" height="16" viewBox="0 0 16 16"><circle cx="7" cy="8" r="6" fill="none" stroke="#ddd" stroke-width="1.5"/><path d="M4 6 L10 10 M10 6 L4 10" stroke="#ddd"/><circle cx="12" cy="13" r="3" fill="#e00"/></svg>
<svg style="left:653px;top:699px" width="16" height="16" viewBox="0 0 16 16"><rect x="1" y="1" width="14" height="14" rx="2" fill="#2aa8c8"/><text x="4" y="11" font-size="10" font-weight="bold" fill="#fff" font-family="Liberation Sans">3</text><rect x="3" y="12" width="10" height="3" fill="#eee"/></svg>
<svg style="left:686px;top:699px" width="16" height="16" viewBox="0 0 16 16"><rect x="0.5" y="0.5" width="15" height="15" rx="2.5" fill="#00005b"/><text x="2" y="11.5" font-size="8.5" font-weight="bold" fill="#9999ff" font-family="Liberation Sans">Ae</text></svg>
<svg style="left:719px;top:699px" width="16" height="16" viewBox="0 0 16 16"><rect x="0.5" y="0.5" width="15" height="15" rx="2.5" fill="#00005b"/><text x="2" y="11.5" font-size="8.5" font-weight="bold" fill="#9999ff" font-family="Liberation Sans">Pr</text></svg>
<div style="position:absolute;left:743px;top:694px;width:32px;height:23px;background:#353535"></div>
<svg style="left:751px;top:699px" width="16" height="16" viewBox="0 0 16 16"><rect x="0.5" y="0.5" width="15" height="15" rx="2.5" fill="#001e36"/><text x="2" y="11.5" font-size="8.5" font-weight="bold" fill="#31a8ff" font-family="Liberation Sans">Ps</text></svg>
<div style="position:absolute;left:776px;top:694px;width:32px;height:23px;background:#3c3c3c"></div>
<svg style="left:784px;top:699px" width="16" height="16" viewBox="0 0 16 16"><rect x="0.5" y="0.5" width="15" height="15" rx="2.5" fill="#330000"/><text x="2" y="11.5" font-size="8.5" font-weight="bold" fill="#ff9a00" font-family="Liberation Sans">Ai</text></svg>
<div style="position:absolute;left:761px;top:716px;width:30px;height:1px;background:#888"></div>
<svg style="left:913px;top:699px" width="16" height="16" viewBox="0 0 16 16"><circle cx="8" cy="9" r="6.5" fill="#f09a28"/><circle cx="10" cy="7" r="4" fill="#ffd27a"/><circle cx="12" cy="3" r="3" fill="#e33"/></svg>
<div class="t" style="left:935px;top:704px;font-size:9px;color:#e8e8e8;">39&#176;C&nbsp; Sunny</div>
<div class="t" style="left:1000px;top:702px;font-size:10px;color:#ddd;">&#8963;</div>
<svg style="left:1015px;top:702px" width="12" height="12" viewBox="0 0 12 12"><path d="M1 10 L5 5 L8 8 L12 3 L12 10Z" fill="#bbb"/></svg>
<svg style="left:1031px;top:702px" width="12" height="12" viewBox="0 0 12 12"><circle cx="6" cy="6" r="5" fill="#3ec86a"/><path d="M2 6 L6 3 L10 6 L6 9Z" fill="#fff"/></svg>
<svg style="left:1047px;top:702px" width="12" height="12" viewBox="0 0 12 12"><ellipse cx="6" cy="6" rx="4" ry="6" fill="#1f6fd8"/><path d="M4 3 L8 9 M8 3 L4 9" stroke="#fff" stroke-width="0.8"/></svg>
<svg style="left:1063px;top:702px" width="12" height="12" viewBox="0 0 12 12"><rect x="3" y="1" width="6" height="10" rx="2" fill="none" stroke="#ddd" stroke-width="1.2"/></svg>
<svg style="left:1079px;top:702px" width="12" height="12" viewBox="0 0 12 12"><rect x="4" y="0" width="4" height="8" rx="2" fill="#ddd"/><path d="M2 6 Q6 11 10 6 M6 9 L6 12" stroke="#ddd" fill="none"/></svg>
<svg style="left:1095px;top:702px" width="12" height="12" viewBox="0 0 12 12"><rect x="1" y="3" width="10" height="7" fill="#ddd"/><rect x="0" y="5" width="1" height="3" fill="#ddd"/></svg>
<svg style="left:1111px;top:702px" width="12" height="12" viewBox="0 0 12 12"><path d="M1 11 Q6 2 11 11" fill="none" stroke="#bbb" stroke-width="1.2"/><path d="M3 2 L10 11" stroke="#bbb"/></svg>
<svg style="left:1127px;top:702px" width="12" height="12" viewBox="0 0 12 12"><path d="M1 4 L4 4 L7 1 L7 11 L4 8 L1 8Z" fill="#ddd"/><path d="M9 3 Q11 6 9 9" stroke="#ddd" fill="none"/></svg>
<div class="t" style="left:1145px;top:704px;font-size:7.6px;color:#e0e0e0;">ENG</div>
<div class="t" style="left:1173px;top:698px;font-size:7.6px;color:#eeeeee;">2:58 PM</div>
<div class="t" style="left:1169px;top:708.5px;font-size:7.5px;color:#eeeeee;">15/05/2024</div>
<svg style="left:1217px;top:700px" width="14" height="13" viewBox="0 0 14 13"><path d="M1 1 L13 1 L13 10 L5 10 L2 13 L2 10 L1 10Z" fill="none" stroke="#ddd" stroke-width="1.2"/></svg>
<svg style="left:1242px;top:698px" width="18" height="17" viewBox="0 0 18 17"><path d="M4 2 Q9 0 10 4 L8 12 Q4 16 2 11 Z" fill="#2a9de8"/><path d="M8 3 Q14 1 15 7 L13 14 Q9 17 7 13Z" fill="#e84ab0"/><path d="M3 9 L15 9 L14 15 L5 15Z" fill="#f8a830" opacity="0.8"/></svg>
<div style="position:absolute;left:774px;top:686px;width:16px;height:6px;background:#4a4a4a;border-radius:1px"></div>
<div style="position:absolute;left:993px;top:367px;width:2px;height:2px;background:#9fd8d0;border-radius:1px"></div>
<svg style="left:0;top:0" width="1272" height="720" viewBox="0 0 1272 720"><clipPath id="ab1"><rect x="129" y="75" width="491" height="609"/></clipPath><g clip-path="url(#ab1)"><defs><linearGradient id="ftop" x1="223" y1="0" x2="515" y2="0" gradientUnits="userSpaceOnUse"><stop offset="0.4" stop-color="#a88c48"/><stop offset="0.47" stop-color="#6a5030"/><stop offset="0.56" stop-color="#5a4428"/><stop offset="0.66" stop-color="#c0a85a"/><stop offset="0.74" stop-color="#f2ea94"/><stop offset="0.83" stop-color="#a8904c"/><stop offset="0.95" stop-color="#6a5430"/><stop offset="1" stop-color="#4a3822"/></linearGradient><linearGradient id="fbot" x1="223" y1="0" x2="515" y2="0" gradientUnits="userSpaceOnUse"><stop offset="0" stop-color="#3e2c1c"/><stop offset="0.07" stop-color="#5a4428"/><stop offset="0.17" stop-color="#a08844"/><stop offset="0.27" stop-color="#f0ea98"/><stop offset="0.4" stop-color="#b09a50"/><stop offset="0.52" stop-color="#6a5030"/><stop offset="0.62" stop-color="#4a3622"/><stop offset="1" stop-color="#4a3622"/></linearGradient><linearGradient id="fleft" x1="0" y1="125" x2="0" y2="539" gradientUnits="userSpaceOnUse"><stop offset="0" stop-color="#6a5030"/><stop offset="0.5" stop-color="#4a3822"/><stop offset="1" stop-color="#3a2a1a"/></linearGradient><linearGradient id="fright" x1="0" y1="125" x2="0" y2="539" gradientUnits="userSpaceOnUse"><stop offset="0" stop-color="#4a3620"/><stop offset="0.5" stop-color="#5e4828"/><stop offset="1" stop-color="#9a7c40"/></linearGradient><filter id="soft" x="-20%" y="-20%" width="140%" height="140%"><feGaussianBlur stdDeviation="0.5"/></filter><filter id="soft3" x="-20%" y="-20%" width="140%" height="140%"><feGaussianBlur stdDeviation="0.75"/></filter><filter id="soft2" x="-30%" y="-30%" width="160%" height="160%"><feGaussianBlur stdDeviation="1.2"/></filter><radialGradient id="chry" cx="0.5" cy="0.5" r="0.5"><stop offset="0" stop-color="#b09a68"/><stop offset="0.2" stop-color="#c8b090"/><stop offset="0.45" stop-color="#dcc6b6"/><stop offset="0.8" stop-color="#e4d2c6"/><stop offset="1" stop-color="#eadcd2"/></radialGradient><radialGradient id="dahl" cx="0.55" cy="0.45" r="0.55"><stop offset="0" stop-color="#dcc2ac"/><stop offset="0.35" stop-color="#ead8ca"/><stop offset="0.75" stop-color="#f4ece4"/><stop offset="1" stop-color="#f8f3ee"/></radialGradient><radialGradient id="dais" cx="0.45" cy="0.4" r="0.6"><stop offset="0" stop-color="#ffffff"/><stop offset="0.7" stop-color="#f8f7f4"/><stop offset="1" stop-color="#e6e4de"/></radialGradient><radialGradient id="leafg" cx="0.3" cy="0.3" r="0.9"><stop offset="0" stop-color="#e8efe9"/><stop offset="1" stop-color="#c9d8cf"/></radialGradient><linearGradient id="pet1" x1="0" y1="0" x2="0" y2="1"><stop offset="0" stop-color="#f4ebe4"/><stop offset="0.55" stop-color="#e6d4c8"/><stop offset="1" stop-color="#c9ae9c"/></linearGradient><linearGradient id="pet2" x1="0" y1="0" x2="0" y2="1"><stop offset="0" stop-color="#f0e4da"/><stop offset="0.55" stop-color="#e0cbbd"/><stop offset="1" stop-color="#c4a692"/></linearGradient><linearGradient id="pet3" x1="0" y1="0" x2="0" y2="1"><stop offset="0" stop-color="#f7f0ea"/><stop offset="0.6" stop-color="#eadbd0"/><stop offset="1" stop-color="#d0b6a4"/></linearGradient></defs><path d="M335 127 L513 127 L513 536.5 L225.5 536.5 L225.5 290 L300 160 Z" fill="#ffffff"/><path d="M342 128.5 L348 125 L515.5 125 L515.5 129.5 L346 129.5Z" fill="url(#ftop)"/><path d="M223 534.5 L398 534.5 L406 536.5 L398 539 L223 539Z" fill="url(#fbot)"/><rect x="223" y="300" width="5" height="239" fill="url(#fleft)"/><rect x="511" y="125" width="4.5" height="305" fill="url(#fright)"/><g><g opacity="0.85"><path d="M253.0 118.0 Q263.6 92.7 232.0 85.0 Q225.6 116.9 253.0 118.0Z" fill="#d4dfd2" stroke="#c4d2c2" stroke-width="0.5"/><path d="M253.0 118.0 Q245.7 100.2 232.0 85.0" fill="none" stroke="#b9c9c0" stroke-width="0.6" opacity="0.8"/><path d="M253.0 118.0 Q253.0 97.1 232.0 85.0 Q242.5 101.5 253.0 118.0Z" fill="#eef3ec" opacity="0.65"/></g><g opacity="0.85"><path d="M262.0 118.0 Q281.1 114.5 277.0 91.0 Q254.9 99.9 262.0 118.0Z" fill="#d8e2d6" stroke="#c4d2c2" stroke-width="0.5"/><path d="M262.0 118.0 Q271.2 106.0 277.0 91.0" fill="none" stroke="#b9c9c0" stroke-width="0.6" opacity="0.8"/><path d="M262.0 118.0 Q275.3 109.5 277.0 91.0 Q269.5 104.5 262.0 118.0Z" fill="#eef3ec" opacity="0.65"/></g><g opacity="0.85"><path d="M311.0 136.0 Q323.4 117.1 305.0 94.0 Q293.8 121.3 311.0 136.0Z" fill="#cfdccd" stroke="#c4d2c2" stroke-width="0.5"/><path d="M311.0 136.0 Q310.3 115.3 305.0 94.0" fill="none" stroke="#b9c9c0" stroke-width="0.6" opacity="0.8"/><path d="M311.0 136.0 Q315.7 116.0 305.0 94.0 Q308.0 115.0 311.0 136.0Z" fill="#eef3ec" opacity="0.65"/></g><g opacity="0.85"><path d="M320.0 134.0 Q353.3 128.6 353.0 86.0 Q313.1 101.0 320.0 134.0Z" fill="#d5e0d2" stroke="#c4d2c2" stroke-width="0.5"/><path d="M320.0 134.0 Q339.0 112.8 353.0 86.0" fill="none" stroke="#b9c9c0" stroke-width="0.6" opacity="0.8"/><path d="M320.0 134.0 Q344.9 119.3 353.0 86.0 Q336.5 110.0 320.0 134.0Z" fill="#eef3ec" opacity="0.65"/></g><g opacity="0.85"><path d="M314.0 144.0 Q334.8 161.1 362.0 140.0 Q331.6 123.7 314.0 144.0Z" fill="#d7e1d4" stroke="#c4d2c2" stroke-width="0.5"/><path d="M314.0 144.0 Q337.5 144.9 362.0 140.0" fill="none" stroke="#b9c9c0" stroke-width="0.6" opacity="0.8"/><path d="M314.0 144.0 Q336.4 151.5 362.0 140.0 Q338.0 142.0 314.0 144.0Z" fill="#eef3ec" opacity="0.65"/></g><g opacity="0.85"><path d="M294.0 152.0 Q313.2 155.5 318.0 132.0 Q294.0 132.5 294.0 152.0Z" fill="#d2ddcf" stroke="#c4d2c2" stroke-width="0.5"/><path d="M294.0 152.0 Q307.1 144.0 318.0 132.0" fill="none" stroke="#b9c9c0" stroke-width="0.6" opacity="0.8"/><path d="M294.0 152.0 Q309.6 148.8 318.0 132.0 Q306.0 142.0 294.0 152.0Z" fill="#eef3ec" opacity="0.65"/></g><g opacity="0.85"><path d="M207.0 190.0 Q200.4 162.6 168.0 173.0 Q182.4 203.8 207.0 190.0Z" fill="#d9e3d9" stroke="#c4d2c2" stroke-width="0.5"/><path d="M207.0 190.0 Q189.4 178.7 168.0 173.0" fill="none" stroke="#b9c9c0" stroke-width="0.6" opacity="0.8"/><path d="M207.0 190.0 Q193.9 172.0 168.0 173.0 Q187.5 181.5 207.0 190.0Z" fill="#eef3ec" opacity="0.65"/></g><g opacity="0.85"><path d="M196.0 212.0 Q178.7 202.9 167.0 224.0 Q190.1 230.7 196.0 212.0Z" fill="#dbe4da" stroke="#c4d2c2" stroke-width="0.5"/><path d="M196.0 212.0 Q181.1 215.7 167.0 224.0" fill="none" stroke="#b9c9c0" stroke-width="0.6" opacity="0.8"/><path d="M196.0 212.0 Q180.1 210.5 167.0 224.0 Q181.5 218.0 196.0 212.0Z" fill="#eef3ec" opacity="0.65"/></g><g opacity="0.85"><path d="M228.0 266.0 Q196.3 287.0 207.0 336.0 Q242.9 301.0 228.0 266.0Z" fill="#dde6dc" stroke="#c4d2c2" stroke-width="0.5"/><path d="M228.0 266.0 Q214.3 298.9 207.0 336.0" fill="none" stroke="#b9c9c0" stroke-width="0.6" opacity="0.8"/><path d="M228.0 266.0 Q206.9 294.0 207.0 336.0 Q217.5 301.0 228.0 266.0Z" fill="#eef3ec" opacity="0.65"/></g><g opacity="0.85"><path d="M232.0 262.0 Q226.2 291.3 262.0 301.0 Q261.8 263.9 232.0 262.0Z" fill="#d7e2d8" stroke="#c4d2c2" stroke-width="0.5"/><path d="M232.0 262.0 Q243.9 283.0 262.0 301.0" fill="none" stroke="#b9c9c0" stroke-width="0.6" opacity="0.8"/><path d="M232.0 262.0 Q236.6 286.4 262.0 301.0 Q247.0 281.5 232.0 262.0Z" fill="#eef3ec" opacity="0.65"/></g><path d="M298 162 L315 153 L346 151" fill="none" stroke="#ab9d8e" stroke-width="0.8" stroke-linecap="round"/><path d="M315 153 L340 168 L363 165" fill="none" stroke="#ab9d8e" stroke-width="0.8" stroke-linecap="round"/><path d="M318 156 L322 180" fill="none" stroke="#ab9d8e" stroke-width="0.8" stroke-linecap="round"/><path d="M316 152 L316 138" fill="none" stroke="#ab9d8e" stroke-width="0.8" stroke-linecap="round"/><path d="M322 160 L341 174" fill="none" stroke="#ab9d8e" stroke-width="0.8" stroke-linecap="round"/><ellipse cx="345.5" cy="151.5" rx="4.619999999999999" ry="3.3" transform="rotate(-30 345.5 151.5)" fill="#c9b197" stroke="#9a8468" stroke-width="0.6"/><ellipse cx="345.5" cy="150.675" rx="2.3099999999999996" ry="1.32" transform="rotate(-30 345.5 151.5)" fill="#e4d4c0" opacity="0.7"/><ellipse cx="363" cy="165" rx="3.36" ry="2.4" transform="rotate(0 363 165)" fill="#c9b197" stroke="#9a8468" stroke-width="0.6"/><ellipse cx="363" cy="164.4" rx="1.68" ry="0.96" transform="rotate(0 363 165)" fill="#e4d4c0" opacity="0.7"/><ellipse cx="341" cy="174" rx="4.34" ry="3.1" transform="rotate(20 341 174)" fill="#c9b197" stroke="#9a8468" stroke-width="0.6"/><ellipse cx="341" cy="173.225" rx="2.17" ry="1.2400000000000002" transform="rotate(20 341 174)" fill="#e4d4c0" opacity="0.7"/><ellipse cx="322" cy="180" rx="4.619999999999999" ry="3.3" transform="rotate(40 322 180)" fill="#c9b197" stroke="#9a8468" stroke-width="0.6"/><ellipse cx="322" cy="179.175" rx="2.3099999999999996" ry="1.32" transform="rotate(40 322 180)" fill="#e4d4c0" opacity="0.7"/><ellipse cx="325" cy="160" rx="3.36" ry="2.4" transform="rotate(0 325 160)" fill="#c9b197" stroke="#9a8468" stroke-width="0.6"/><ellipse cx="325" cy="159.4" rx="1.68" ry="0.96" transform="rotate(0 325 160)" fill="#e4d4c0" opacity="0.7"/><ellipse cx="316" cy="137" rx="4.34" ry="3.1" transform="rotate(-70 316 137)" fill="#c9b197" stroke="#9a8468" stroke-width="0.6"/><ellipse cx="316" cy="136.225" rx="2.17" ry="1.2400000000000002" transform="rotate(-70 316 137)" fill="#e4d4c0" opacity="0.7"/><path d="M262 228 L268 242 L270 256" fill="none" stroke="#ab9d8e" stroke-width="0.8" stroke-linecap="round"/><path d="M266 232 L278 243 L286 244" fill="none" stroke="#ab9d8e" stroke-width="0.8" stroke-linecap="round"/><path d="M270 240 L273 278" fill="none" stroke="#ab9d8e" stroke-width="0.8" stroke-linecap="round"/><path d="M272 248 L290 264" fill="none" stroke="#ab9d8e" stroke-width="0.8" stroke-linecap="round"/><path d="M258 240 L255 265" fill="none" stroke="#ab9d8e" stroke-width="0.8" stroke-linecap="round"/><ellipse cx="286" cy="244" rx="4.199999999999999" ry="3" transform="rotate(30 286 244)" fill="#c9b197" stroke="#9a8468" stroke-width="0.6"/><ellipse cx="286" cy="243.25" rx="2.0999999999999996" ry="1.2000000000000002" transform="rotate(30 286 244)" fill="#e4d4c0" opacity="0.7"/><ellipse cx="268" cy="254" rx="4.199999999999999" ry="3" transform="rotate(80 268 254)" fill="#c9b197" stroke="#9a8468" stroke-width="0.6"/><ellipse cx="268" cy="253.25" rx="2.0999999999999996" ry="1.2000000000000002" transform="rotate(80 268 254)" fill="#e4d4c0" opacity="0.7"/><ellipse cx="290" cy="264" rx="4.199999999999999" ry="3" transform="rotate(20 290 264)" fill="#c9b197" stroke="#9a8468" stroke-width="0.6"/><ellipse cx="290" cy="263.25" rx="2.0999999999999996" ry="1.2000000000000002" transform="rotate(20 290 264)" fill="#e4d4c0" opacity="0.7"/><ellipse cx="273" cy="277" rx="4.619999999999999" ry="3.3" transform="rotate(80 273 277)" fill="#c9b197" stroke="#9a8468" stroke-width="0.6"/><ellipse cx="273" cy="276.175" rx="2.3099999999999996" ry="1.32" transform="rotate(80 273 277)" fill="#e4d4c0" opacity="0.7"/><ellipse cx="255" cy="265" rx="2.2399999999999998" ry="1.6" transform="rotate(80 255 265)" fill="#c9b197" stroke="#9a8468" stroke-width="0.6"/><ellipse cx="255" cy="264.6" rx="1.1199999999999999" ry="0.6400000000000001" transform="rotate(80 255 265)" fill="#e4d4c0" opacity="0.7"/><path d="M198 150 L245 168" fill="none" stroke="#b0a488" stroke-width="1" stroke-linecap="round"/><path d="M220 142 L248 172" fill="none" stroke="#b0a488" stroke-width="1" stroke-linecap="round"/><path d="M226 160 L250 175" fill="none" stroke="#b0a488" stroke-width="1" stroke-linecap="round"/><path d="M224 174 L252 180" fill="none" stroke="#b0a488" stroke-width="1" stroke-linecap="round"/><g filter="url(#soft)"><ellipse cx="185.8" cy="147.1" rx="12.8" ry="9.3" transform="rotate(20.6 185.8 147.1)" fill="#e9e3d8" stroke="#c2b8a2" stroke-width="0.7"/><path d="M173.4 147.4 L173.6 142.5 L178.5 139.3Z" fill="#d8cfbe"/><ellipse cx="183.5" cy="149.6" rx="7.0" ry="3.0" transform="rotate(20.6 183.5 149.6)" fill="#f5f1ea" opacity="0.7"/><path d="M176.2 143.4 Q186.8 144.4 197.1 151.3" fill="none" stroke="#c4b9a4" stroke-width="0.6"/><path d="M193.8 157.0 L200.4 152.5 L198.4 144.8 Q193.0 149.8 193.8 157.0Z" fill="#aba38c" opacity="0.6"/></g><g filter="url(#soft)"><ellipse cx="213.1" cy="138.1" rx="12.7" ry="7.4" transform="rotate(45.0 213.1 138.1)" fill="#e9e3d8" stroke="#c2b8a2" stroke-width="0.7"/><path d="M202.4 132.6 L203.9 128.9 L209.0 128.8Z" fill="#d8cfbe"/><ellipse cx="210.4" cy="139.0" rx="7.0" ry="2.4" transform="rotate(45.0 210.4 139.0)" fill="#f5f1ea" opacity="0.7"/><path d="M205.9 130.9 Q214.7 136.5 221.6 146.6" fill="none" stroke="#c4b9a4" stroke-width="0.6"/><path d="M217.2 149.5 L224.1 149.1 L224.5 142.2 Q218.5 143.5 217.2 149.5Z" fill="#aba38c" opacity="0.6"/></g><g filter="url(#soft)"><ellipse cx="223.4" cy="157.4" rx="12.1" ry="6.8" transform="rotate(29.7 223.4 157.4)" fill="#e9e3d8" stroke="#c2b8a2" stroke-width="0.7"/><path d="M212.3 155.0 L212.7 151.3 L217.4 150.0Z" fill="#d8cfbe"/><ellipse cx="221.2" cy="158.9" rx="6.7" ry="2.2" transform="rotate(29.7 221.2 158.9)" fill="#f5f1ea" opacity="0.7"/><path d="M215.1 152.6 Q224.5 155.6 233.3 163.0" fill="none" stroke="#c4b9a4" stroke-width="0.6"/><path d="M230.1 166.7 L236.3 164.7 L234.8 158.4 Q229.8 161.0 230.1 166.7Z" fill="#aba38c" opacity="0.6"/></g><g filter="url(#soft)"><ellipse cx="209.4" cy="172.3" rx="16.1" ry="8.7" transform="rotate(5.4 209.4 172.3)" fill="#e9e3d8" stroke="#c2b8a2" stroke-width="0.7"/><path d="M194.6 175.3 L193.5 170.9 L197.4 166.9Z" fill="#d8cfbe"/><ellipse cx="207.5" cy="175.2" rx="8.8" ry="2.8" transform="rotate(5.4 207.5 175.2)" fill="#f5f1ea" opacity="0.7"/><path d="M196.6 171.2 Q209.6 169.8 224.4 173.8" fill="none" stroke="#c4b9a4" stroke-width="0.6"/><path d="M222.6 179.7 L228.5 174.1 L223.7 167.6 Q219.0 173.2 222.6 179.7Z" fill="#aba38c" opacity="0.6"/></g><g filter="url(#soft)"><circle cx="262" cy="139" r="30.38" fill="url(#dais)"/><ellipse cx="276.5" cy="138.6" rx="11.6" ry="4.0" transform="rotate(-1.4 276.5 138.6)" fill="#f3f1ed" stroke="#e6e3dd" stroke-width="0.4"/><ellipse cx="278.8" cy="141.5" rx="13.7" ry="4.0" transform="rotate(8.4 278.8 141.5)" fill="#ffffff" stroke="#e6e3dd" stroke-width="0.4"/><ellipse cx="275.0" cy="144.5" rx="11.3" ry="4.0" transform="rotate(22.9 275.0 144.5)" fill="#f3f1ed" stroke="#e6e3dd" stroke-width="0.4"/><ellipse cx="273.8" cy="146.9" rx="11.4" ry="4.0" transform="rotate(33.7 273.8 146.9)" fill="#fbfaf8" stroke="#e6e3dd" stroke-width="0.4"/><ellipse cx="272.1" cy="149.0" rx="11.4" ry="4.0" transform="rotate(44.6 272.1 149.0)" fill="#fbfaf8" stroke="#e6e3dd" stroke-width="0.4"/><ellipse cx="270.9" cy="152.4" rx="12.9" ry="4.0" transform="rotate(56.5 270.9 152.4)" fill="#ffffff" stroke="#e6e3dd" stroke-width="0.4"/><ellipse cx="266.7" cy="154.4" rx="12.9" ry="4.0" transform="rotate(73.0 266.7 154.4)" fill="#ffffff" stroke="#e6e3dd" stroke-width="0.4"/><ellipse cx="263.4" cy="154.3" rx="12.4" ry="4.0" transform="rotate(84.6 263.4 154.3)" fill="#ffffff" stroke="#e6e3dd" stroke-width="0.4"/><ellipse cx="261.3" cy="156.2" rx="13.8" ry="4.0" transform="rotate(92.4 261.3 156.2)" fill="#fbfaf8" stroke="#e6e3dd" stroke-width="0.4"/><ellipse cx="257.2" cy="154.2" rx="12.8" ry="4.0" transform="rotate(107.4 257.2 154.2)" fill="#f3f1ed" stroke="#e6e3dd" stroke-width="0.4"/><ellipse cx="253.9" cy="153.9" rx="13.7" ry="4.0" transform="rotate(118.5 253.9 153.9)" fill="#ffffff" stroke="#e6e3dd" stroke-width="0.4"/><ellipse cx="251.9" cy="151.5" rx="12.9" ry="4.0" transform="rotate(128.8 251.9 151.5)" fill="#ffffff" stroke="#e6e3dd" stroke-width="0.4"/><ellipse cx="249.2" cy="148.6" rx="12.8" ry="4.0" transform="rotate(143.0 249.2 148.6)" fill="#ffffff" stroke="#e6e3dd" stroke-width="0.4"/><ellipse cx="247.1" cy="145.5" rx="13.1" ry="4.0" transform="rotate(156.5 247.1 145.5)" fill="#fbfaf8" stroke="#e6e3dd" stroke-width="0.4"/><ellipse cx="246.7" cy="141.8" rx="12.5" ry="4.0" transform="rotate(169.4 246.7 141.8)" fill="#fbfaf8" stroke="#e6e3dd" stroke-width="0.4"/><ellipse cx="244.6" cy="139.1" rx="14.0" ry="4.0" transform="rotate(179.7 244.6 139.1)" fill="#fbfaf8" stroke="#e6e3dd" stroke-width="0.4"/><ellipse cx="245.4" cy="135.9" rx="13.6" ry="4.0" transform="rotate(190.4 245.4 135.9)" fill="#f3f1ed" stroke="#e6e3dd" stroke-width="0.4"/><ellipse cx="249.3" cy="132.7" rx="11.4" ry="4.0" transform="rotate(206.2 249.3 132.7)" fill="#fbfaf8" stroke="#e6e3dd" stroke-width="0.4"/><ellipse cx="248.1" cy="128.8" rx="13.8" ry="4.0" transform="rotate(216.2 248.1 128.8)" fill="#f3f1ed" stroke="#e6e3dd" stroke-width="0.4"/><ellipse cx="251.1" cy="127.0" rx="13.0" ry="4.0" transform="rotate(227.6 251.1 127.0)" fill="#ffffff" stroke="#e6e3dd" stroke-width="0.4"/><ellipse cx="253.6" cy="126.0" rx="12.4" ry="4.0" transform="rotate(236.9 253.6 126.0)" fill="#fbfaf8" stroke="#e6e3dd" stroke-width="0.4"/><ellipse cx="256.4" cy="124.3" rx="12.7" ry="4.0" transform="rotate(249.2 256.4 124.3)" fill="#ffffff" stroke="#e6e3dd" stroke-width="0.4"/><ellipse cx="261.4" cy="124.8" rx="11.4" ry="4.0" transform="rotate(267.7 261.4 124.8)" fill="#f3f1ed" stroke="#e6e3dd" stroke-width="0.4"/><ellipse cx="264.0" cy="121.9" rx="13.8" ry="4.0" transform="rotate(276.6 264.0 121.9)" fill="#fbfaf8" stroke="#e6e3dd" stroke-width="0.4"/><ellipse cx="266.4" cy="124.4" rx="12.2" ry="4.0" transform="rotate(286.7 266.4 124.4)" fill="#fbfaf8" stroke="#e6e3dd" stroke-width="0.4"/><ellipse cx="270.0" cy="125.6" rx="12.6" ry="4.0" transform="rotate(300.6 270.0 125.6)" fill="#ffffff" stroke="#e6e3dd" stroke-width="0.4"/><ellipse cx="273.2" cy="128.0" rx="12.6" ry="4.0" transform="rotate(315.6 273.2 128.0)" fill="#f3f1ed" stroke="#e6e3dd" stroke-width="0.4"/><ellipse cx="274.9" cy="128.4" rx="13.4" ry="4.0" transform="rotate(320.5 274.9 128.4)" fill="#fbfaf8" stroke="#e6e3dd" stroke-width="0.4"/><ellipse cx="278.3" cy="132.1" rx="14.2" ry="4.0" transform="rotate(337.2 278.3 132.1)" fill="#fbfaf8" stroke="#e6e3dd" stroke-width="0.4"/><ellipse cx="276.9" cy="135.4" rx="12.3" ry="4.0" transform="rotate(346.3 276.9 135.4)" fill="#f3f1ed" stroke="#e6e3dd" stroke-width="0.4"/><circle cx="269.75" cy="148.3" r="21.7" fill="#cfcdc6" opacity="0.15"/></g><circle cx="262" cy="139" r="9.92" fill="#d2c8aa" filter="url(#soft)"/><circle cx="262" cy="139" r="8.06" fill="#8e7f58"/><circle cx="262" cy="139" r="5.2700000000000005" fill="#706040"/><circle cx="262" cy="139" r="2.1700000000000004" fill="#3a2e18"/><g filter="url(#soft3)"><circle cx="222" cy="224" r="39.36" fill="#f6f0ea"/><path d="M236.4 225.2 Q251.5 229.6 263.5 222.9 Q251.1 216.8 236.3 222.0Z" fill="#fcfaf7" stroke="#e2dad0" stroke-width="0.5"/><path d="M235.8 228.2 Q248.8 235.5 261.3 231.3 Q251.2 222.9 236.4 225.1Z" fill="#fcfaf7" stroke="#e2dad0" stroke-width="0.5"/><path d="M234.5 231.3 Q244.5 241.0 256.9 239.5 Q249.7 229.3 235.8 228.4Z" fill="#fcfaf7" stroke="#e2dad0" stroke-width="0.5"/><path d="M233.0 233.3 Q242.3 245.4 255.7 246.6 Q249.5 234.7 234.8 230.7Z" fill="#fcfaf7" stroke="#e2dad0" stroke-width="0.5"/><path d="M230.6 235.6 Q237.3 249.7 250.3 254.3 Q246.6 241.0 233.0 233.4Z" fill="#fcfaf7" stroke="#e2dad0" stroke-width="0.5"/><path d="M227.8 237.2 Q230.2 250.9 241.0 256.9 Q241.2 244.5 230.6 235.6Z" fill="#fcfaf7" stroke="#e2dad0" stroke-width="0.5"/><path d="M225.2 238.1 Q224.9 252.2 234.5 260.4 Q237.0 248.0 228.2 237.0Z" fill="#fcfaf7" stroke="#e2dad0" stroke-width="0.5"/><path d="M222.8 238.4 Q220.4 252.7 228.6 262.6 Q233.0 250.6 226.0 237.9Z" fill="#fcfaf7" stroke="#e2dad0" stroke-width="0.5"/><path d="M218.8 238.1 Q212.4 251.8 217.4 264.2 Q225.1 253.3 222.0 238.4Z" fill="#fcfaf7" stroke="#e2dad0" stroke-width="0.5"/><path d="M215.0 236.6 Q205.0 247.9 206.3 261.2 Q216.8 252.9 217.9 237.8Z" fill="#fcfaf7" stroke="#e2dad0" stroke-width="0.5"/><path d="M213.7 235.8 Q203.1 245.0 203.6 257.5 Q214.3 251.2 216.5 237.3Z" fill="#fcfaf7" stroke="#e2dad0" stroke-width="0.5"/><path d="M211.9 234.4 Q200.2 241.7 198.7 254.0 Q210.3 249.5 214.5 236.3Z" fill="#fcfaf7" stroke="#e2dad0" stroke-width="0.5"/><path d="M209.3 230.8 Q196.1 234.0 191.2 245.1 Q203.4 244.5 211.1 233.4Z" fill="#fcfaf7" stroke="#e2dad0" stroke-width="0.5"/><path d="M208.0 227.6 Q194.1 227.7 186.4 237.4 Q198.6 239.7 209.1 230.6Z" fill="#fcfaf7" stroke="#e2dad0" stroke-width="0.5"/><path d="M207.7 226.0 Q194.0 224.5 185.3 233.3 Q197.1 236.9 208.5 229.1Z" fill="#fcfaf7" stroke="#e2dad0" stroke-width="0.5"/><path d="M207.7 222.3 Q193.6 217.4 182.0 223.8 Q193.5 230.2 207.6 225.5Z" fill="#fcfaf7" stroke="#e2dad0" stroke-width="0.5"/><path d="M208.2 219.9 Q196.3 212.9 184.8 217.3 Q194.0 225.5 207.6 223.0Z" fill="#fcfaf7" stroke="#e2dad0" stroke-width="0.5"/><path d="M210.0 215.9 Q199.0 204.7 185.2 204.7 Q193.0 216.1 208.5 218.8Z" fill="#fcfaf7" stroke="#e2dad0" stroke-width="0.5"/><path d="M211.6 214.0 Q203.1 201.4 189.8 199.2 Q195.3 211.5 209.6 216.5Z" fill="#fcfaf7" stroke="#e2dad0" stroke-width="0.5"/><path d="M213.5 212.3 Q207.1 198.2 194.2 193.6 Q197.6 206.8 211.1 214.5Z" fill="#fcfaf7" stroke="#e2dad0" stroke-width="0.5"/><path d="M217.3 210.4 Q215.5 195.4 204.6 187.6 Q203.9 200.9 214.4 211.7Z" fill="#fcfaf7" stroke="#e2dad0" stroke-width="0.5"/><path d="M219.2 209.8 Q219.7 195.4 210.3 186.7 Q207.5 199.3 216.2 210.8Z" fill="#fcfaf7" stroke="#e2dad0" stroke-width="0.5"/><path d="M221.8 209.6 Q224.9 195.3 217.2 184.9 Q212.2 196.9 218.6 210.0Z" fill="#fcfaf7" stroke="#e2dad0" stroke-width="0.5"/><path d="M224.8 209.8 Q230.8 197.2 225.3 186.0 Q218.0 196.1 221.7 209.6Z" fill="#fcfaf7" stroke="#e2dad0" stroke-width="0.5"/><path d="M229.0 211.4 Q238.8 200.6 237.2 187.8 Q227.0 195.7 226.1 210.2Z" fill="#fcfaf7" stroke="#e2dad0" stroke-width="0.5"/><path d="M229.7 211.8 Q240.3 201.3 239.6 188.1 Q228.8 195.6 226.9 210.4Z" fill="#fcfaf7" stroke="#e2dad0" stroke-width="0.5"/><path d="M232.1 213.7 Q244.5 205.6 246.5 192.6 Q234.4 197.7 229.6 211.7Z" fill="#fcfaf7" stroke="#e2dad0" stroke-width="0.5"/><path d="M234.6 216.9 Q249.6 212.1 255.8 199.8 Q242.1 201.7 232.7 214.3Z" fill="#fcfaf7" stroke="#e2dad0" stroke-width="0.5"/><path d="M235.8 219.9 Q249.5 219.4 256.6 209.4 Q244.5 207.6 234.6 217.0Z" fill="#fcfaf7" stroke="#e2dad0" stroke-width="0.5"/><path d="M236.3 221.9 Q250.6 223.0 259.6 214.0 Q247.3 210.6 235.5 218.8Z" fill="#fcfaf7" stroke="#e2dad0" stroke-width="0.5"/><path d="M230.6 227.1 Q241.7 233.6 252.5 229.6 Q243.8 222.0 231.1 224.2Z" fill="#f8f3ec" stroke="#ddd0c2" stroke-width="0.5"/><path d="M229.5 229.2 Q237.7 237.9 248.5 236.4 Q242.7 227.2 230.8 226.5Z" fill="#f8f3ec" stroke="#ddd0c2" stroke-width="0.5"/><path d="M228.5 230.4 Q235.1 240.4 245.9 240.9 Q241.9 230.8 230.2 228.0Z" fill="#f8f3ec" stroke="#ddd0c2" stroke-width="0.5"/><path d="M225.4 232.5 Q227.4 244.3 237.2 249.0 Q237.5 238.2 227.9 230.9Z" fill="#f8f3ec" stroke="#ddd0c2" stroke-width="0.5"/><path d="M224.1 232.9 Q224.1 244.2 232.9 249.8 Q235.0 239.6 226.9 231.7Z" fill="#f8f3ec" stroke="#ddd0c2" stroke-width="0.5"/><path d="M221.1 233.1 Q217.4 245.0 223.8 254.1 Q229.2 244.3 224.0 232.9Z" fill="#f8f3ec" stroke="#ddd0c2" stroke-width="0.5"/><path d="M219.2 232.7 Q213.0 243.4 217.4 253.7 Q224.7 245.2 222.1 233.1Z" fill="#f8f3ec" stroke="#ddd0c2" stroke-width="0.5"/><path d="M217.0 231.6 Q208.6 239.5 210.4 249.8 Q219.4 244.3 219.7 232.8Z" fill="#f8f3ec" stroke="#ddd0c2" stroke-width="0.5"/><path d="M214.7 229.5 Q204.0 234.4 202.2 244.9 Q212.6 242.5 216.9 231.6Z" fill="#f8f3ec" stroke="#ddd0c2" stroke-width="0.5"/><path d="M213.7 227.8 Q201.3 230.9 196.5 241.3 Q207.9 240.7 215.4 230.3Z" fill="#f8f3ec" stroke="#ddd0c2" stroke-width="0.5"/><path d="M213.0 225.4 Q201.4 224.6 194.9 233.0 Q205.1 235.8 213.9 228.3Z" fill="#f8f3ec" stroke="#ddd0c2" stroke-width="0.5"/><path d="M212.9 223.2 Q202.2 219.7 194.3 226.2 Q203.2 231.4 213.1 226.2Z" fill="#f8f3ec" stroke="#ddd0c2" stroke-width="0.5"/><path d="M213.5 220.6 Q203.5 213.9 193.3 217.7 Q201.0 225.4 212.9 223.5Z" fill="#f8f3ec" stroke="#ddd0c2" stroke-width="0.5"/><path d="M214.7 218.5 Q207.2 209.4 196.6 210.5 Q201.7 219.8 213.3 221.1Z" fill="#f8f3ec" stroke="#ddd0c2" stroke-width="0.5"/><path d="M215.6 217.5 Q209.1 207.3 198.2 206.6 Q202.2 216.8 213.9 219.9Z" fill="#f8f3ec" stroke="#ddd0c2" stroke-width="0.5"/><path d="M217.9 215.8 Q214.8 204.0 204.5 199.9 Q205.2 210.9 215.5 217.6Z" fill="#f8f3ec" stroke="#ddd0c2" stroke-width="0.5"/><path d="M220.3 215.0 Q220.5 202.5 211.7 195.4 Q209.4 206.5 217.5 216.0Z" fill="#f8f3ec" stroke="#ddd0c2" stroke-width="0.5"/><path d="M222.9 214.9 Q226.7 204.1 220.3 195.9 Q214.9 204.8 220.0 215.1Z" fill="#f8f3ec" stroke="#ddd0c2" stroke-width="0.5"/><path d="M224.5 215.2 Q230.1 204.8 225.2 195.2 Q218.4 203.5 221.5 214.9Z" fill="#f8f3ec" stroke="#ddd0c2" stroke-width="0.5"/><path d="M227.4 216.6 Q236.2 209.2 234.8 198.9 Q225.6 203.9 224.8 215.3Z" fill="#f8f3ec" stroke="#ddd0c2" stroke-width="0.5"/><path d="M228.8 217.9 Q239.6 211.6 241.0 200.5 Q230.4 204.2 226.5 216.1Z" fill="#f8f3ec" stroke="#ddd0c2" stroke-width="0.5"/><path d="M230.5 220.6 Q242.8 218.3 248.0 208.3 Q236.7 208.2 229.0 218.1Z" fill="#f8f3ec" stroke="#ddd0c2" stroke-width="0.5"/><path d="M230.9 222.1 Q242.4 222.4 248.3 213.8 Q238.1 211.4 229.9 219.4Z" fill="#f8f3ec" stroke="#ddd0c2" stroke-width="0.5"/><path d="M231.1 224.7 Q242.3 228.2 250.6 221.5 Q241.3 216.4 230.9 221.8Z" fill="#f8f3ec" stroke="#ddd0c2" stroke-width="0.5"/><path d="M225.4 226.6 Q231.9 233.1 240.0 230.9 Q235.4 223.9 226.3 224.3Z" fill="#f0e4d8" stroke="#d6c2b0" stroke-width="0.5"/><path d="M224.6 227.4 Q229.4 235.6 238.1 235.9 Q235.2 227.7 226.0 225.4Z" fill="#f0e4d8" stroke="#d6c2b0" stroke-width="0.5"/><path d="M223.4 228.0 Q224.9 236.2 232.4 238.2 Q232.8 230.4 225.4 226.6Z" fill="#f0e4d8" stroke="#d6c2b0" stroke-width="0.5"/><path d="M221.7 228.3 Q219.7 236.7 225.9 241.9 Q229.3 234.6 224.1 227.7Z" fill="#f0e4d8" stroke="#d6c2b0" stroke-width="0.5"/><path d="M220.2 227.9 Q215.4 236.1 219.3 243.8 Q225.1 237.4 222.7 228.2Z" fill="#f0e4d8" stroke="#d6c2b0" stroke-width="0.5"/><path d="M218.9 227.0 Q212.2 231.6 213.5 239.2 Q220.7 236.4 221.1 228.2Z" fill="#f0e4d8" stroke="#d6c2b0" stroke-width="0.5"/><path d="M218.0 225.5 Q209.6 227.4 207.6 235.2 Q215.6 235.2 219.5 227.5Z" fill="#f0e4d8" stroke="#d6c2b0" stroke-width="0.5"/><path d="M217.7 224.3 Q208.5 223.8 203.6 230.9 Q211.9 233.0 218.6 226.6Z" fill="#f0e4d8" stroke="#d6c2b0" stroke-width="0.5"/><path d="M217.8 223.2 Q209.6 220.3 203.7 225.9 Q210.6 230.1 218.0 225.6Z" fill="#f0e4d8" stroke="#d6c2b0" stroke-width="0.5"/><path d="M218.6 221.4 Q212.7 215.4 205.2 217.8 Q209.3 224.6 217.7 223.7Z" fill="#f0e4d8" stroke="#d6c2b0" stroke-width="0.5"/><path d="M219.8 220.3 Q216.3 212.3 208.2 211.6 Q209.8 219.6 218.1 222.2Z" fill="#f0e4d8" stroke="#d6c2b0" stroke-width="0.5"/><path d="M221.0 219.8 Q220.4 211.6 213.0 208.8 Q211.9 216.6 218.9 221.1Z" fill="#f0e4d8" stroke="#d6c2b0" stroke-width="0.5"/><path d="M222.7 219.8 Q225.2 211.0 219.5 204.9 Q215.5 212.3 220.2 220.1Z" fill="#f0e4d8" stroke="#d6c2b0" stroke-width="0.5"/><path d="M223.8 220.1 Q228.5 212.3 224.6 204.8 Q218.8 211.0 221.3 219.8Z" fill="#f0e4d8" stroke="#d6c2b0" stroke-width="0.5"/><path d="M224.8 220.7 Q231.2 215.3 229.2 207.7 Q222.2 211.4 222.5 219.8Z" fill="#f0e4d8" stroke="#d6c2b0" stroke-width="0.5"/><path d="M226.0 222.5 Q234.1 221.0 235.9 213.5 Q228.2 213.2 224.5 220.5Z" fill="#f0e4d8" stroke="#d6c2b0" stroke-width="0.5"/><path d="M226.3 223.7 Q235.0 224.2 239.4 217.3 Q231.5 215.1 225.4 221.4Z" fill="#f0e4d8" stroke="#d6c2b0" stroke-width="0.5"/><path d="M226.1 225.2 Q234.3 228.8 241.0 223.9 Q234.3 219.0 226.1 222.7Z" fill="#f0e4d8" stroke="#d6c2b0" stroke-width="0.5"/><path d="M221.5 224.9 Q224.5 229.8 229.9 228.2 Q228.2 222.8 222.5 223.1Z" fill="#e8d4c2" stroke="#ccb29c" stroke-width="0.5"/><path d="M221.1 224.4 Q220.1 229.8 225.2 231.7 Q227.4 226.7 222.9 223.6Z" fill="#e8d4c2" stroke="#ccb29c" stroke-width="0.5"/><path d="M221.0 223.8 Q217.4 227.8 220.7 232.0 Q225.1 229.1 223.0 224.2Z" fill="#e8d4c2" stroke="#ccb29c" stroke-width="0.5"/><path d="M221.3 223.3 Q215.6 224.5 215.1 230.2 Q220.8 230.3 222.7 224.7Z" fill="#e8d4c2" stroke="#ccb29c" stroke-width="0.5"/><path d="M221.8 223.0 Q216.1 221.3 212.9 226.1 Q217.9 229.0 222.2 225.0Z" fill="#e8d4c2" stroke="#ccb29c" stroke-width="0.5"/><path d="M222.4 223.1 Q218.7 218.3 213.1 220.1 Q215.5 225.5 221.6 224.9Z" fill="#e8d4c2" stroke="#ccb29c" stroke-width="0.5"/><path d="M222.9 223.5 Q222.8 217.5 217.2 215.7 Q216.0 221.4 221.1 224.5Z" fill="#e8d4c2" stroke="#ccb29c" stroke-width="0.5"/><path d="M223.0 224.1 Q226.3 219.7 222.6 215.6 Q218.4 219.1 221.0 223.9Z" fill="#e8d4c2" stroke="#ccb29c" stroke-width="0.5"/><path d="M222.7 224.7 Q228.4 223.1 228.6 217.4 Q222.9 217.6 221.3 223.3Z" fill="#e8d4c2" stroke="#ccb29c" stroke-width="0.5"/><path d="M222.2 225.0 Q227.6 226.9 230.8 222.3 Q226.1 219.2 221.8 223.0Z" fill="#e8d4c2" stroke="#ccb29c" stroke-width="0.5"/><circle cx="226.92" cy="216.62" r="13.120000000000001" fill="#d8b89c" opacity="0.45" filter="url(#soft2)"/></g><g filter="url(#soft)"><circle cx="271" cy="189" r="38.0" fill="url(#chry)"/><ellipse cx="301.5" cy="191.5" rx="11.3" ry="8.7" transform="rotate(94.7 301.5 191.5)" fill="url(#pet3)" stroke="#c2a896" stroke-width="0.55"/><ellipse cx="300.7" cy="204.1" rx="10.4" ry="8.0" transform="rotate(116.9 300.7 204.1)" fill="url(#pet3)" stroke="#c2a896" stroke-width="0.55"/><ellipse cx="292.4" cy="211.3" rx="10.7" ry="8.1" transform="rotate(136.3 292.4 211.3)" fill="url(#pet1)" stroke="#c2a896" stroke-width="0.55"/><ellipse cx="277.5" cy="221.2" rx="9.6" ry="6.2" transform="rotate(168.7 277.5 221.2)" fill="url(#pet3)" stroke="#c2a896" stroke-width="0.55"/><ellipse cx="262.1" cy="219.9" rx="10.1" ry="7.1" transform="rotate(196.0 262.1 219.9)" fill="url(#pet3)" stroke="#c2a896" stroke-width="0.55"/><ellipse cx="250.6" cy="214.8" rx="11.8" ry="7.4" transform="rotate(218.3 250.6 214.8)" fill="url(#pet1)" stroke="#c2a896" stroke-width="0.55"/><ellipse cx="242.2" cy="204.9" rx="10.7" ry="7.6" transform="rotate(241.2 242.2 204.9)" fill="url(#pet1)" stroke="#c2a896" stroke-width="0.55"/><ellipse cx="238.6" cy="189.4" rx="10.7" ry="7.5" transform="rotate(269.2 238.6 189.4)" fill="url(#pet3)" stroke="#c2a896" stroke-width="0.55"/><ellipse cx="241.4" cy="176.7" rx="11.5" ry="8.1" transform="rotate(292.6 241.4 176.7)" fill="url(#pet1)" stroke="#c2a896" stroke-width="0.55"/><ellipse cx="251.6" cy="162.1" rx="11.9" ry="7.9" transform="rotate(324.2 251.6 162.1)" fill="url(#pet3)" stroke="#c2a896" stroke-width="0.55"/><ellipse cx="267.0" cy="158.2" rx="10.5" ry="7.2" transform="rotate(352.6 267.0 158.2)" fill="url(#pet2)" stroke="#c2a896" stroke-width="0.55"/><ellipse cx="277.4" cy="159.0" rx="9.9" ry="6.2" transform="rotate(372.0 277.4 159.0)" fill="url(#pet3)" stroke="#c2a896" stroke-width="0.55"/><ellipse cx="289.0" cy="164.0" rx="11.4" ry="8.8" transform="rotate(395.8 289.0 164.0)" fill="url(#pet3)" stroke="#c2a896" stroke-width="0.55"/><ellipse cx="299.3" cy="176.7" rx="11.8" ry="9.1" transform="rotate(426.5 299.3 176.7)" fill="url(#pet1)" stroke="#c2a896" stroke-width="0.55"/><ellipse cx="293.4" cy="196.0" rx="10.9" ry="7.0" transform="rotate(107.5 293.4 196.0)" fill="url(#pet3)" stroke="#c2a896" stroke-width="0.55"/><ellipse cx="286.7" cy="206.8" rx="9.7" ry="6.8" transform="rotate(138.7 286.7 206.8)" fill="url(#pet2)" stroke="#c2a896" stroke-width="0.55"/><ellipse cx="278.2" cy="212.3" rx="8.7" ry="5.9" transform="rotate(162.9 278.2 212.3)" fill="url(#pet2)" stroke="#c2a896" stroke-width="0.55"/><ellipse cx="264.7" cy="212.8" rx="8.5" ry="5.8" transform="rotate(194.8 264.7 212.8)" fill="url(#pet3)" stroke="#c2a896" stroke-width="0.55"/><ellipse cx="253.7" cy="208.8" rx="8.8" ry="6.8" transform="rotate(221.1 253.7 208.8)" fill="url(#pet1)" stroke="#c2a896" stroke-width="0.55"/><ellipse cx="247.8" cy="192.8" rx="9.2" ry="5.8" transform="rotate(260.6 247.8 192.8)" fill="url(#pet1)" stroke="#c2a896" stroke-width="0.55"/><ellipse cx="247.8" cy="184.6" rx="9.6" ry="7.4" transform="rotate(280.8 247.8 184.6)" fill="url(#pet2)" stroke="#c2a896" stroke-width="0.55"/><ellipse cx="252.7" cy="172.1" rx="9.9" ry="6.9" transform="rotate(312.7 252.7 172.1)" fill="url(#pet2)" stroke="#c2a896" stroke-width="0.55"/><ellipse cx="262.3" cy="167.3" rx="10.4" ry="7.1" transform="rotate(338.3 262.3 167.3)" fill="url(#pet1)" stroke="#c2a896" stroke-width="0.55"/><ellipse cx="275.3" cy="166.2" rx="8.7" ry="5.8" transform="rotate(370.8 275.3 166.2)" fill="url(#pet3)" stroke="#c2a896" stroke-width="0.55"/><ellipse cx="288.7" cy="173.6" rx="10.8" ry="7.5" transform="rotate(409.0 288.7 173.6)" fill="url(#pet2)" stroke="#c2a896" stroke-width="0.55"/><ellipse cx="295.2" cy="185.1" rx="11.0" ry="7.9" transform="rotate(440.9 295.2 185.1)" fill="url(#pet1)" stroke="#c2a896" stroke-width="0.55"/><ellipse cx="285.7" cy="197.0" rx="7.7" ry="5.0" transform="rotate(118.4 285.7 197.0)" fill="url(#pet1)" stroke="#c2a896" stroke-width="0.55"/><ellipse cx="280.6" cy="205.4" rx="9.0" ry="6.3" transform="rotate(149.5 280.6 205.4)" fill="url(#pet1)" stroke="#c2a896" stroke-width="0.55"/><ellipse cx="268.8" cy="206.5" rx="7.9" ry="5.3" transform="rotate(187.1 268.8 206.5)" fill="url(#pet1)" stroke="#c2a896" stroke-width="0.55"/><ellipse cx="258.1" cy="198.7" rx="7.5" ry="5.3" transform="rotate(232.9 258.1 198.7)" fill="url(#pet1)" stroke="#c2a896" stroke-width="0.55"/><ellipse cx="254.4" cy="191.3" rx="8.5" ry="6.2" transform="rotate(262.2 254.4 191.3)" fill="url(#pet3)" stroke="#c2a896" stroke-width="0.55"/><ellipse cx="255.3" cy="181.0" rx="9.5" ry="6.5" transform="rotate(297.1 255.3 181.0)" fill="url(#pet3)" stroke="#c2a896" stroke-width="0.55"/><ellipse cx="263.0" cy="174.4" rx="8.0" ry="5.2" transform="rotate(331.3 263.0 174.4)" fill="url(#pet3)" stroke="#c2a896" stroke-width="0.55"/><ellipse cx="274.8" cy="173.0" rx="9.8" ry="7.6" transform="rotate(373.2 274.8 173.0)" fill="url(#pet1)" stroke="#c2a896" stroke-width="0.55"/><ellipse cx="282.4" cy="175.0" rx="9.6" ry="6.6" transform="rotate(399.2 282.4 175.0)" fill="url(#pet1)" stroke="#c2a896" stroke-width="0.55"/><ellipse cx="289.2" cy="184.5" rx="9.5" ry="6.9" transform="rotate(436.2 289.2 184.5)" fill="url(#pet2)" stroke="#c2a896" stroke-width="0.55"/><ellipse cx="279.3" cy="196.8" rx="6.6" ry="4.3" transform="rotate(133.4 279.3 196.8)" fill="url(#pet2)" stroke="#c2a896" stroke-width="0.55"/><ellipse cx="270.5" cy="199.0" rx="8.4" ry="6.5" transform="rotate(182.7 270.5 199.0)" fill="url(#pet3)" stroke="#c2a896" stroke-width="0.55"/><ellipse cx="263.6" cy="194.7" rx="8.3" ry="5.4" transform="rotate(232.4 263.6 194.7)" fill="url(#pet1)" stroke="#c2a896" stroke-width="0.55"/><ellipse cx="260.7" cy="187.3" rx="7.4" ry="5.2" transform="rotate(279.3 260.7 187.3)" fill="url(#pet1)" stroke="#c2a896" stroke-width="0.55"/><ellipse cx="265.9" cy="178.5" rx="6.6" ry="5.0" transform="rotate(334.2 265.9 178.5)" fill="url(#pet1)" stroke="#c2a896" stroke-width="0.55"/><ellipse cx="275.3" cy="180.7" rx="6.5" ry="4.4" transform="rotate(387.7 275.3 180.7)" fill="url(#pet1)" stroke="#c2a896" stroke-width="0.55"/><ellipse cx="282.8" cy="185.8" rx="8.2" ry="5.3" transform="rotate(434.8 282.8 185.8)" fill="url(#pet3)" stroke="#c2a896" stroke-width="0.55"/><ellipse cx="273.6" cy="193.4" rx="5.9" ry="4.3" transform="rotate(150.0 273.6 193.4)" fill="url(#pet2)" stroke="#c2a896" stroke-width="0.55"/><ellipse cx="266.7" cy="192.5" rx="5.7" ry="3.6" transform="rotate(231.1 266.7 192.5)" fill="url(#pet3)" stroke="#c2a896" stroke-width="0.55"/><ellipse cx="268.5" cy="184.4" rx="5.9" ry="4.4" transform="rotate(331.5 268.5 184.4)" fill="url(#pet1)" stroke="#c2a896" stroke-width="0.55"/><ellipse cx="275.9" cy="186.3" rx="5.6" ry="4.2" transform="rotate(421.7 275.9 186.3)" fill="url(#pet1)" stroke="#c2a896" stroke-width="0.55"/></g><circle cx="271" cy="189" r="8.0" fill="#b8a26a" filter="url(#soft2)"/><circle cx="271" cy="189" r="4.0" fill="#8a7440" filter="url(#soft)"/><circle cx="271" cy="189" r="2.0" fill="#3a2a14"/></g><g><g opacity="0.85"><path d="M526.0 416.0 Q534.4 396.2 512.0 380.0 Q506.4 407.0 526.0 416.0Z" fill="#d2ddd0" stroke="#c4d2c2" stroke-width="0.5"/><path d="M526.0 416.0 Q521.3 397.7 512.0 380.0" fill="none" stroke="#b9c9c0" stroke-width="0.6" opacity="0.8"/><path d="M526.0 416.0 Q526.7 397.1 512.0 380.0 Q519.0 398.0 526.0 416.0Z" fill="#eef3ec" opacity="0.65"/></g><g opacity="0.85"><path d="M534.0 411.0 Q564.1 406.2 569.0 367.0 Q531.9 380.6 534.0 411.0Z" fill="#d8e2d6" stroke="#c4d2c2" stroke-width="0.5"/><path d="M534.0 411.0 Q553.4 391.6 569.0 367.0" fill="none" stroke="#b9c9c0" stroke-width="0.6" opacity="0.8"/><path d="M534.0 411.0 Q557.8 397.6 569.0 367.0 Q551.5 389.0 534.0 411.0Z" fill="#eef3ec" opacity="0.65"/></g><g opacity="0.85"><path d="M534.0 423.0 Q552.3 430.3 571.0 412.0 Q545.3 406.9 534.0 423.0Z" fill="#d3ded1" stroke="#c4d2c2" stroke-width="0.5"/><path d="M534.0 423.0 Q552.5 419.4 571.0 412.0" fill="none" stroke="#b9c9c0" stroke-width="0.6" opacity="0.8"/><path d="M534.0 423.0 Q552.4 423.9 571.0 412.0 Q552.5 417.5 534.0 423.0Z" fill="#eef3ec" opacity="0.65"/></g><g opacity="0.85"><path d="M530.0 440.0 Q538.0 431.6 527.0 423.0 Q519.6 434.8 530.0 440.0Z" fill="#d4ded3" stroke="#c4d2c2" stroke-width="0.5"/><path d="M530.0 440.0 Q529.9 431.5 527.0 423.0" fill="none" stroke="#b9c9c0" stroke-width="0.6" opacity="0.8"/><path d="M530.0 440.0 Q533.3 431.5 527.0 423.0 Q528.5 431.5 530.0 440.0Z" fill="#eef3ec" opacity="0.65"/></g><g opacity="0.85"><path d="M569.0 468.0 Q593.0 471.9 605.0 443.0 Q573.8 444.1 569.0 468.0Z" fill="#dce5da" stroke="#c4d2c2" stroke-width="0.5"/><path d="M569.0 468.0 Q587.9 458.0 605.0 443.0" fill="none" stroke="#b9c9c0" stroke-width="0.6" opacity="0.8"/><path d="M569.0 468.0 Q590.0 463.7 605.0 443.0 Q587.0 455.5 569.0 468.0Z" fill="#eef3ec" opacity="0.65"/></g><g opacity="0.85"><path d="M569.0 474.0 Q576.2 493.1 601.0 487.0 Q587.4 465.3 569.0 474.0Z" fill="#d8e2d6" stroke="#c4d2c2" stroke-width="0.5"/><path d="M569.0 474.0 Q583.7 482.4 601.0 487.0" fill="none" stroke="#b9c9c0" stroke-width="0.6" opacity="0.8"/><path d="M569.0 474.0 Q580.6 486.8 601.0 487.0 Q585.0 480.5 569.0 474.0Z" fill="#eef3ec" opacity="0.65"/></g><g opacity="0.85"><path d="M575.0 455.0 Q584.2 450.8 580.0 439.0 Q569.8 446.4 575.0 455.0Z" fill="#d8e2d6" stroke="#c4d2c2" stroke-width="0.5"/><path d="M575.0 455.0 Q578.5 447.6 580.0 439.0" fill="none" stroke="#b9c9c0" stroke-width="0.6" opacity="0.8"/><path d="M575.0 455.0 Q580.8 448.9 580.0 439.0 Q577.5 447.0 575.0 455.0Z" fill="#eef3ec" opacity="0.65"/></g><g opacity="0.85"><path d="M429.0 527.0 Q419.1 501.6 387.0 512.0 Q405.3 540.4 429.0 527.0Z" fill="#d8e2d7" stroke="#c4d2c2" stroke-width="0.5"/><path d="M429.0 527.0 Q409.7 516.8 387.0 512.0" fill="none" stroke="#b9c9c0" stroke-width="0.6" opacity="0.8"/><path d="M429.0 527.0 Q413.6 510.5 387.0 512.0 Q408.0 519.5 429.0 527.0Z" fill="#eef3ec" opacity="0.65"/></g><g opacity="0.85"><path d="M428.0 540.0 Q392.0 531.8 367.0 573.0 Q415.2 574.6 428.0 540.0Z" fill="#dee7dd" stroke="#c4d2c2" stroke-width="0.5"/><path d="M428.0 540.0 Q396.7 552.8 367.0 573.0" fill="none" stroke="#b9c9c0" stroke-width="0.6" opacity="0.8"/><path d="M428.0 540.0 Q394.8 544.1 367.0 573.0 Q397.5 556.5 428.0 540.0Z" fill="#eef3ec" opacity="0.65"/></g><g opacity="0.85"><path d="M504.0 540.0 Q501.7 566.4 534.0 569.0 Q530.3 536.8 504.0 540.0Z" fill="#dbe4d9" stroke="#c4d2c2" stroke-width="0.5"/><path d="M504.0 540.0 Q516.4 556.3 534.0 569.0" fill="none" stroke="#b9c9c0" stroke-width="0.6" opacity="0.8"/><path d="M504.0 540.0 Q510.3 560.5 534.0 569.0 Q519.0 554.5 504.0 540.0Z" fill="#eef3ec" opacity="0.65"/></g><g opacity="0.85"><path d="M497.0 553.0 Q480.4 559.4 486.0 581.0 Q504.8 569.0 497.0 553.0Z" fill="#dce5db" stroke="#c4d2c2" stroke-width="0.5"/><path d="M497.0 553.0 Q489.8 565.9 486.0 581.0" fill="none" stroke="#b9c9c0" stroke-width="0.6" opacity="0.8"/><path d="M497.0 553.0 Q485.9 563.2 486.0 581.0 Q491.5 567.0 497.0 553.0Z" fill="#eef3ec" opacity="0.65"/></g><path d="M455 486 L430 480 L400 475 L384 472" fill="none" stroke="#ab9d8e" stroke-width="0.8" stroke-linecap="round"/><path d="M425 479 L414 474" fill="none" stroke="#ab9d8e" stroke-width="0.8" stroke-linecap="round"/><path d="M440 483 L434 474" fill="none" stroke="#ab9d8e" stroke-width="0.8" stroke-linecap="round"/><path d="M440 486 L406 495" fill="none" stroke="#ab9d8e" stroke-width="0.8" stroke-linecap="round"/><path d="M445 488 L429.5 494" fill="none" stroke="#ab9d8e" stroke-width="0.8" stroke-linecap="round"/><path d="M443 500 L420 509" fill="none" stroke="#ab9d8e" stroke-width="0.8" stroke-linecap="round"/><ellipse cx="414" cy="474.4" rx="4.199999999999999" ry="3" transform="rotate(0 414 474.4)" fill="#c9b197" stroke="#9a8468" stroke-width="0.6"/><ellipse cx="414" cy="473.65" rx="2.0999999999999996" ry="1.2000000000000002" transform="rotate(0 414 474.4)" fill="#e4d4c0" opacity="0.7"/><ellipse cx="434" cy="474.4" rx="3.9199999999999995" ry="2.8" transform="rotate(0 434 474.4)" fill="#c9b197" stroke="#9a8468" stroke-width="0.6"/><ellipse cx="434" cy="473.7" rx="1.9599999999999997" ry="1.1199999999999999" transform="rotate(0 434 474.4)" fill="#e4d4c0" opacity="0.7"/><ellipse cx="406" cy="495.2" rx="4.4799999999999995" ry="3.2" transform="rotate(10 406 495.2)" fill="#c9b197" stroke="#9a8468" stroke-width="0.6"/><ellipse cx="406" cy="494.4" rx="2.2399999999999998" ry="1.2800000000000002" transform="rotate(10 406 495.2)" fill="#e4d4c0" opacity="0.7"/><ellipse cx="429.5" cy="494.3" rx="4.34" ry="3.1" transform="rotate(0 429.5 494.3)" fill="#c9b197" stroke="#9a8468" stroke-width="0.6"/><ellipse cx="429.5" cy="493.52500000000003" rx="2.17" ry="1.2400000000000002" transform="rotate(0 429.5 494.3)" fill="#e4d4c0" opacity="0.7"/><path d="M497 440 L491 400 L488.7 378" fill="none" stroke="#ab9d8e" stroke-width="0.8" stroke-linecap="round"/><path d="M497 430 L507 391" fill="none" stroke="#ab9d8e" stroke-width="0.8" stroke-linecap="round"/><path d="M495 430 L484 420" fill="none" stroke="#ab9d8e" stroke-width="0.8" stroke-linecap="round"/><path d="M499 435 L502.5 422" fill="none" stroke="#ab9d8e" stroke-width="0.8" stroke-linecap="round"/><path d="M492 410 L487 402" fill="none" stroke="#ab9d8e" stroke-width="0.8" stroke-linecap="round"/><ellipse cx="488.7" cy="377.6" rx="3.6399999999999997" ry="2.6" transform="rotate(80 488.7 377.6)" fill="#c9b197" stroke="#9a8468" stroke-width="0.6"/><ellipse cx="488.7" cy="376.95000000000005" rx="1.8199999999999998" ry="1.04" transform="rotate(80 488.7 377.6)" fill="#e4d4c0" opacity="0.7"/><ellipse cx="507" cy="391.4" rx="4.34" ry="3.1" transform="rotate(60 507 391.4)" fill="#c9b197" stroke="#9a8468" stroke-width="0.6"/><ellipse cx="507" cy="390.625" rx="2.17" ry="1.2400000000000002" transform="rotate(60 507 391.4)" fill="#e4d4c0" opacity="0.7"/><ellipse cx="487" cy="402" rx="4.199999999999999" ry="3" transform="rotate(70 487 402)" fill="#c9b197" stroke="#9a8468" stroke-width="0.6"/><ellipse cx="487" cy="401.25" rx="2.0999999999999996" ry="1.2000000000000002" transform="rotate(70 487 402)" fill="#e4d4c0" opacity="0.7"/><ellipse cx="484" cy="420.4" rx="4.619999999999999" ry="3.3" transform="rotate(30 484 420.4)" fill="#c9b197" stroke="#9a8468" stroke-width="0.6"/><ellipse cx="484" cy="419.575" rx="2.3099999999999996" ry="1.32" transform="rotate(30 484 420.4)" fill="#e4d4c0" opacity="0.7"/><ellipse cx="502.5" cy="422" rx="4.34" ry="3.1" transform="rotate(60 502.5 422)" fill="#c9b197" stroke="#9a8468" stroke-width="0.6"/><ellipse cx="502.5" cy="421.225" rx="2.17" ry="1.2400000000000002" transform="rotate(60 502.5 422)" fill="#e4d4c0" opacity="0.7"/><path d="M520 495 L554 517" fill="none" stroke="#b0a488" stroke-width="1" stroke-linecap="round"/><path d="M518 500 L552 544" fill="none" stroke="#b0a488" stroke-width="1" stroke-linecap="round"/><g filter="url(#soft)"><ellipse cx="557.5" cy="516.3" rx="10.0" ry="8.1" transform="rotate(-162.5 557.5 516.3)" fill="#e9e3d8" stroke="#c2b8a2" stroke-width="0.7"/><path d="M567.2 515.2 L567.4 519.5 L562.9 522.2Z" fill="#d8cfbe"/><ellipse cx="559.2" cy="513.9" rx="5.5" ry="2.6" transform="rotate(-162.5 559.2 513.9)" fill="#f5f1ea" opacity="0.7"/><path d="M565.0 518.7 Q556.7 518.6 548.5 513.5" fill="none" stroke="#c4b9a4" stroke-width="0.6"/><path d="M551.0 508.3 L545.6 512.5 L547.6 519.1 Q551.8 514.5 551.0 508.3Z" fill="#aba38c" opacity="0.6"/></g><g filter="url(#soft)"><ellipse cx="521.5" cy="526.2" rx="12.0" ry="8.1" transform="rotate(-92.4 521.5 526.2)" fill="#e9e3d8" stroke="#c2b8a2" stroke-width="0.7"/><path d="M526.0 536.8 L522.1 538.5 L517.9 535.2Z" fill="#d8cfbe"/><ellipse cx="524.4" cy="527.3" rx="6.6" ry="2.6" transform="rotate(-92.4 524.4 527.3)" fill="#f5f1ea" opacity="0.7"/><path d="M522.0 535.8 Q519.1 526.3 521.1 514.9" fill="none" stroke="#c4b9a4" stroke-width="0.6"/><path d="M526.8 515.6 L520.9 511.5 L515.5 516.1 Q521.2 519.0 526.8 515.6Z" fill="#aba38c" opacity="0.6"/></g><g filter="url(#soft)"><ellipse cx="552.8" cy="544.5" rx="13.2" ry="8.1" transform="rotate(-127.3 552.8 544.5)" fill="#e9e3d8" stroke="#c2b8a2" stroke-width="0.7"/><path d="M563.2 551.6 L560.9 555.2 L555.6 554.9Z" fill="#d8cfbe"/><ellipse cx="555.8" cy="543.9" rx="7.3" ry="2.6" transform="rotate(-127.3 555.8 543.9)" fill="#f5f1ea" opacity="0.7"/><path d="M559.2 553.0 Q550.9 546.0 545.3 534.7" fill="none" stroke="#c4b9a4" stroke-width="0.6"/><path d="M550.4 532.1 L543.1 531.8 L541.4 538.9 Q548.0 538.2 550.4 532.1Z" fill="#aba38c" opacity="0.6"/></g><g filter="url(#soft3)"><circle cx="473" cy="529" r="40.32" fill="#f6f0ea"/><path d="M487.6 531.5 Q501.7 537.2 513.8 531.3 Q502.4 524.1 487.8 528.2Z" fill="#fcfaf7" stroke="#e2dad0" stroke-width="0.5"/><path d="M486.7 534.6 Q499.4 543.4 512.7 540.3 Q503.0 530.8 487.6 531.5Z" fill="#fcfaf7" stroke="#e2dad0" stroke-width="0.5"/><path d="M485.5 536.9 Q495.5 547.2 508.3 546.1 Q501.2 535.4 486.9 534.0Z" fill="#fcfaf7" stroke="#e2dad0" stroke-width="0.5"/><path d="M484.7 538.0 Q493.5 549.1 506.1 549.1 Q500.3 537.9 486.4 535.2Z" fill="#fcfaf7" stroke="#e2dad0" stroke-width="0.5"/><path d="M481.9 540.8 Q487.4 553.7 499.5 557.1 Q496.9 544.7 484.3 538.6Z" fill="#fcfaf7" stroke="#e2dad0" stroke-width="0.5"/><path d="M478.1 542.9 Q480.2 557.9 491.3 565.4 Q491.9 552.0 481.1 541.4Z" fill="#fcfaf7" stroke="#e2dad0" stroke-width="0.5"/><path d="M475.7 543.5 Q475.1 558.9 484.8 568.3 Q487.7 555.1 478.8 542.6Z" fill="#fcfaf7" stroke="#e2dad0" stroke-width="0.5"/><path d="M472.4 543.8 Q468.6 558.3 476.0 569.3 Q481.6 557.3 475.7 543.5Z" fill="#fcfaf7" stroke="#e2dad0" stroke-width="0.5"/><path d="M471.1 543.7 Q465.9 558.5 472.2 570.9 Q479.0 558.8 474.4 543.7Z" fill="#fcfaf7" stroke="#e2dad0" stroke-width="0.5"/><path d="M466.3 542.2 Q456.8 553.8 458.8 566.9 Q469.0 558.4 469.4 543.3Z" fill="#fcfaf7" stroke="#e2dad0" stroke-width="0.5"/><path d="M464.2 540.9 Q452.5 551.0 452.2 564.6 Q463.9 557.6 467.0 542.5Z" fill="#fcfaf7" stroke="#e2dad0" stroke-width="0.5"/><path d="M462.7 539.6 Q449.8 548.3 447.6 561.9 Q460.2 556.3 465.3 541.6Z" fill="#fcfaf7" stroke="#e2dad0" stroke-width="0.5"/><path d="M460.5 536.9 Q447.2 541.2 442.9 552.9 Q455.3 551.4 462.5 539.4Z" fill="#fcfaf7" stroke="#e2dad0" stroke-width="0.5"/><path d="M459.1 534.1 Q443.7 536.2 435.8 547.4 Q449.5 547.9 460.6 537.0Z" fill="#fcfaf7" stroke="#e2dad0" stroke-width="0.5"/><path d="M458.4 531.2 Q442.8 530.3 432.8 539.7 Q446.2 542.9 459.2 534.4Z" fill="#fcfaf7" stroke="#e2dad0" stroke-width="0.5"/><path d="M458.5 526.1 Q444.8 520.1 432.7 525.6 Q443.7 533.1 458.2 529.4Z" fill="#fcfaf7" stroke="#e2dad0" stroke-width="0.5"/><path d="M458.9 524.6 Q445.9 517.2 433.3 521.4 Q443.5 530.0 458.3 527.8Z" fill="#fcfaf7" stroke="#e2dad0" stroke-width="0.5"/><path d="M460.5 521.1 Q449.2 510.2 435.4 510.8 Q443.5 522.0 459.1 524.1Z" fill="#fcfaf7" stroke="#e2dad0" stroke-width="0.5"/><path d="M462.3 518.8 Q453.7 506.1 440.2 504.1 Q445.7 516.6 460.3 521.4Z" fill="#fcfaf7" stroke="#e2dad0" stroke-width="0.5"/><path d="M463.5 517.6 Q457.3 504.9 445.0 502.1 Q448.3 514.4 461.3 520.0Z" fill="#fcfaf7" stroke="#e2dad0" stroke-width="0.5"/><path d="M466.5 515.7 Q462.7 500.6 450.7 493.9 Q451.6 507.6 463.7 517.5Z" fill="#fcfaf7" stroke="#e2dad0" stroke-width="0.5"/><path d="M469.5 514.6 Q469.2 499.5 459.1 490.7 Q456.9 503.9 466.4 515.7Z" fill="#fcfaf7" stroke="#e2dad0" stroke-width="0.5"/><path d="M471.8 514.3 Q474.2 500.5 465.8 491.3 Q461.3 503.0 468.6 514.9Z" fill="#fcfaf7" stroke="#e2dad0" stroke-width="0.5"/><path d="M475.6 514.4 Q481.4 500.2 475.7 487.8 Q468.3 499.3 472.3 514.2Z" fill="#fcfaf7" stroke="#e2dad0" stroke-width="0.5"/><path d="M479.5 515.7 Q489.2 503.7 487.1 490.2 Q476.8 499.2 476.5 514.6Z" fill="#fcfaf7" stroke="#e2dad0" stroke-width="0.5"/><path d="M481.3 516.8 Q492.3 506.5 492.0 493.2 Q480.7 500.4 478.4 515.2Z" fill="#fcfaf7" stroke="#e2dad0" stroke-width="0.5"/><path d="M484.0 519.1 Q497.0 511.8 499.8 498.9 Q487.2 503.1 481.5 516.9Z" fill="#fcfaf7" stroke="#e2dad0" stroke-width="0.5"/><path d="M485.3 520.8 Q500.2 514.9 505.5 501.9 Q491.8 504.8 483.2 518.3Z" fill="#fcfaf7" stroke="#e2dad0" stroke-width="0.5"/><path d="M486.8 523.8 Q502.8 521.2 511.1 509.6 Q496.9 509.5 485.4 520.9Z" fill="#fcfaf7" stroke="#e2dad0" stroke-width="0.5"/><path d="M487.8 528.7 Q501.3 531.8 510.9 523.9 Q499.5 518.8 487.4 525.4Z" fill="#fcfaf7" stroke="#e2dad0" stroke-width="0.5"/><path d="M481.9 531.9 Q493.2 538.2 503.9 533.7 Q495.0 526.2 482.4 528.9Z" fill="#f8f3ec" stroke="#ddd0c2" stroke-width="0.5"/><path d="M480.4 534.8 Q488.1 544.2 499.2 543.3 Q493.9 533.6 481.8 532.1Z" fill="#f8f3ec" stroke="#ddd0c2" stroke-width="0.5"/><path d="M479.5 535.7 Q485.5 545.8 496.2 546.3 Q492.7 536.1 481.3 533.3Z" fill="#f8f3ec" stroke="#ddd0c2" stroke-width="0.5"/><path d="M476.5 537.7 Q478.3 549.3 488.1 553.7 Q488.7 542.9 479.1 536.1Z" fill="#f8f3ec" stroke="#ddd0c2" stroke-width="0.5"/><path d="M474.8 538.2 Q474.2 549.8 482.9 555.9 Q485.6 545.6 477.6 537.2Z" fill="#f8f3ec" stroke="#ddd0c2" stroke-width="0.5"/><path d="M472.4 538.3 Q469.2 551.1 476.2 560.6 Q481.2 549.9 475.4 538.0Z" fill="#f8f3ec" stroke="#ddd0c2" stroke-width="0.5"/><path d="M470.6 538.1 Q465.0 549.7 470.1 560.1 Q477.0 550.8 473.6 538.3Z" fill="#f8f3ec" stroke="#ddd0c2" stroke-width="0.5"/><path d="M467.8 536.8 Q458.7 546.1 460.1 557.8 Q469.8 551.1 470.6 538.1Z" fill="#f8f3ec" stroke="#ddd0c2" stroke-width="0.5"/><path d="M465.8 535.0 Q455.2 540.2 454.0 550.9 Q464.4 548.1 468.1 537.0Z" fill="#f8f3ec" stroke="#ddd0c2" stroke-width="0.5"/><path d="M464.4 532.6 Q452.3 534.8 447.6 544.9 Q458.7 545.1 466.0 535.2Z" fill="#f8f3ec" stroke="#ddd0c2" stroke-width="0.5"/><path d="M464.0 531.7 Q452.7 532.1 447.6 541.2 Q457.9 543.0 465.3 534.4Z" fill="#f8f3ec" stroke="#ddd0c2" stroke-width="0.5"/><path d="M463.7 528.5 Q451.9 525.2 443.3 532.2 Q453.2 537.2 464.0 531.5Z" fill="#f8f3ec" stroke="#ddd0c2" stroke-width="0.5"/><path d="M464.0 526.4 Q454.0 520.6 444.5 525.5 Q452.5 532.6 463.6 529.4Z" fill="#f8f3ec" stroke="#ddd0c2" stroke-width="0.5"/><path d="M465.0 524.1 Q456.6 515.7 445.9 517.8 Q451.9 526.8 463.9 526.9Z" fill="#f8f3ec" stroke="#ddd0c2" stroke-width="0.5"/><path d="M467.2 521.7 Q462.6 511.3 452.2 510.0 Q454.4 520.2 465.2 523.9Z" fill="#f8f3ec" stroke="#ddd0c2" stroke-width="0.5"/><path d="M469.2 520.5 Q466.2 507.8 455.7 502.9 Q456.2 514.5 466.6 522.1Z" fill="#f8f3ec" stroke="#ddd0c2" stroke-width="0.5"/><path d="M470.5 520.0 Q469.4 506.9 459.7 500.3 Q458.5 512.0 467.8 521.2Z" fill="#f8f3ec" stroke="#ddd0c2" stroke-width="0.5"/><path d="M473.9 519.7 Q477.6 507.1 470.9 497.5 Q465.5 507.9 470.9 519.9Z" fill="#f8f3ec" stroke="#ddd0c2" stroke-width="0.5"/><path d="M475.6 520.0 Q481.5 509.5 476.5 499.7 Q469.4 508.0 472.6 519.6Z" fill="#f8f3ec" stroke="#ddd0c2" stroke-width="0.5"/><path d="M478.0 521.1 Q487.0 511.4 485.4 499.6 Q475.9 506.6 475.2 519.9Z" fill="#f8f3ec" stroke="#ddd0c2" stroke-width="0.5"/><path d="M480.1 522.9 Q490.7 517.2 491.9 506.4 Q481.4 509.5 477.8 520.9Z" fill="#f8f3ec" stroke="#ddd0c2" stroke-width="0.5"/><path d="M481.3 524.7 Q492.8 521.8 496.4 511.6 Q485.6 512.1 479.5 522.3Z" fill="#f8f3ec" stroke="#ddd0c2" stroke-width="0.5"/><path d="M482.0 526.4 Q493.5 525.9 498.7 516.7 Q488.3 515.0 480.7 523.7Z" fill="#f8f3ec" stroke="#ddd0c2" stroke-width="0.5"/><path d="M482.3 530.1 Q493.5 534.1 502.2 527.6 Q492.9 522.0 482.2 527.1Z" fill="#f8f3ec" stroke="#ddd0c2" stroke-width="0.5"/><path d="M476.4 531.8 Q482.2 538.2 490.1 536.0 Q486.1 528.9 477.4 529.4Z" fill="#f0e4d8" stroke="#d6c2b0" stroke-width="0.5"/><path d="M475.7 532.5 Q480.2 540.4 488.6 540.2 Q486.1 532.2 477.1 530.4Z" fill="#f0e4d8" stroke="#d6c2b0" stroke-width="0.5"/><path d="M474.4 533.2 Q475.9 541.9 483.8 544.4 Q484.2 536.1 476.4 531.7Z" fill="#f0e4d8" stroke="#d6c2b0" stroke-width="0.5"/><path d="M472.3 533.3 Q469.7 542.6 475.6 549.0 Q479.7 541.2 474.8 533.0Z" fill="#f0e4d8" stroke="#d6c2b0" stroke-width="0.5"/><path d="M471.0 532.9 Q465.6 540.4 469.2 548.2 Q475.5 542.4 473.4 533.4Z" fill="#f0e4d8" stroke="#d6c2b0" stroke-width="0.5"/><path d="M469.7 531.9 Q461.8 537.4 462.2 546.2 Q470.3 542.8 471.8 533.2Z" fill="#f0e4d8" stroke="#d6c2b0" stroke-width="0.5"/><path d="M469.0 530.8 Q460.1 533.7 458.2 542.1 Q466.8 541.2 470.7 532.7Z" fill="#f0e4d8" stroke="#d6c2b0" stroke-width="0.5"/><path d="M468.7 529.7 Q459.3 530.2 455.3 537.8 Q463.8 539.2 469.8 532.0Z" fill="#f0e4d8" stroke="#d6c2b0" stroke-width="0.5"/><path d="M468.7 527.9 Q460.0 524.5 453.2 529.9 Q460.4 534.6 468.9 530.4Z" fill="#f0e4d8" stroke="#d6c2b0" stroke-width="0.5"/><path d="M469.5 526.4 Q463.3 520.2 455.5 522.8 Q459.9 529.7 468.6 528.8Z" fill="#f0e4d8" stroke="#d6c2b0" stroke-width="0.5"/><path d="M470.2 525.6 Q464.9 517.6 456.0 517.8 Q459.3 526.0 468.8 527.7Z" fill="#f0e4d8" stroke="#d6c2b0" stroke-width="0.5"/><path d="M471.6 524.9 Q469.9 516.0 461.9 513.5 Q461.7 521.9 469.5 526.3Z" fill="#f0e4d8" stroke="#d6c2b0" stroke-width="0.5"/><path d="M473.2 524.6 Q475.1 516.0 468.6 510.9 Q465.3 518.4 470.8 525.2Z" fill="#f0e4d8" stroke="#d6c2b0" stroke-width="0.5"/><path d="M475.0 525.1 Q480.3 517.0 476.7 508.9 Q470.4 515.2 472.5 524.6Z" fill="#f0e4d8" stroke="#d6c2b0" stroke-width="0.5"/><path d="M476.0 525.8 Q483.0 519.8 481.5 511.3 Q473.9 515.4 473.7 524.7Z" fill="#f0e4d8" stroke="#d6c2b0" stroke-width="0.5"/><path d="M476.9 527.0 Q485.5 523.9 486.9 515.6 Q478.5 516.7 475.1 525.2Z" fill="#f0e4d8" stroke="#d6c2b0" stroke-width="0.5"/><path d="M477.4 528.5 Q486.0 529.0 489.8 521.8 Q482.0 519.7 476.4 526.2Z" fill="#f0e4d8" stroke="#d6c2b0" stroke-width="0.5"/><path d="M477.3 529.9 Q485.4 532.9 491.3 527.3 Q484.5 522.9 477.1 527.4Z" fill="#f0e4d8" stroke="#d6c2b0" stroke-width="0.5"/><path d="M472.5 529.9 Q475.2 535.0 480.8 533.7 Q479.4 528.1 473.5 528.1Z" fill="#e8d4c2" stroke="#ccb29c" stroke-width="0.5"/><path d="M472.1 529.5 Q472.2 535.7 477.9 537.5 Q479.2 531.7 473.9 528.5Z" fill="#e8d4c2" stroke="#ccb29c" stroke-width="0.5"/><path d="M472.0 528.8 Q467.9 532.9 470.8 537.8 Q475.7 534.8 474.0 529.2Z" fill="#e8d4c2" stroke="#ccb29c" stroke-width="0.5"/><path d="M472.2 528.3 Q466.8 529.9 467.3 535.5 Q472.9 535.2 473.8 529.7Z" fill="#e8d4c2" stroke="#ccb29c" stroke-width="0.5"/><path d="M472.8 528.0 Q467.3 526.2 464.3 531.0 Q469.2 534.0 473.2 530.0Z" fill="#e8d4c2" stroke="#ccb29c" stroke-width="0.5"/><path d="M473.4 528.1 Q470.2 523.4 465.0 525.6 Q467.0 530.8 472.6 529.9Z" fill="#e8d4c2" stroke="#ccb29c" stroke-width="0.5"/><path d="M473.9 528.5 Q474.0 522.6 468.5 520.9 Q467.0 526.5 472.1 529.5Z" fill="#e8d4c2" stroke="#ccb29c" stroke-width="0.5"/><path d="M474.0 529.2 Q478.1 524.8 475.1 519.7 Q470.2 523.0 472.0 528.8Z" fill="#e8d4c2" stroke="#ccb29c" stroke-width="0.5"/><path d="M473.7 529.7 Q479.3 528.3 479.3 522.5 Q473.6 522.6 472.3 528.3Z" fill="#e8d4c2" stroke="#ccb29c" stroke-width="0.5"/><path d="M473.2 530.0 Q478.5 532.2 481.8 527.6 Q477.2 524.3 472.8 528.0Z" fill="#e8d4c2" stroke="#ccb29c" stroke-width="0.5"/><circle cx="478.04" cy="521.44" r="13.44" fill="#d8b89c" opacity="0.45" filter="url(#soft2)"/></g><g filter="url(#soft)"><circle cx="541" cy="468" r="30.38" fill="url(#dais)"/><ellipse cx="555.1" cy="467.7" rx="11.4" ry="4.0" transform="rotate(-1.3 555.1 467.7)" fill="#fbfaf8" stroke="#e6e3dd" stroke-width="0.4"/><ellipse cx="555.9" cy="471.3" rx="12.3" ry="4.0" transform="rotate(12.6 555.9 471.3)" fill="#f3f1ed" stroke="#e6e3dd" stroke-width="0.4"/><ellipse cx="555.9" cy="474.6" rx="13.1" ry="4.0" transform="rotate(24.0 555.9 474.6)" fill="#ffffff" stroke="#e6e3dd" stroke-width="0.4"/><ellipse cx="555.6" cy="477.4" rx="13.9" ry="4.0" transform="rotate(32.7 555.6 477.4)" fill="#fbfaf8" stroke="#e6e3dd" stroke-width="0.4"/><ellipse cx="551.6" cy="479.4" rx="12.5" ry="4.0" transform="rotate(47.2 551.6 479.4)" fill="#fbfaf8" stroke="#e6e3dd" stroke-width="0.4"/><ellipse cx="548.9" cy="483.3" rx="13.8" ry="4.0" transform="rotate(62.8 548.9 483.3)" fill="#ffffff" stroke="#e6e3dd" stroke-width="0.4"/><ellipse cx="546.6" cy="482.5" rx="12.5" ry="4.0" transform="rotate(69.0 546.6 482.5)" fill="#fbfaf8" stroke="#e6e3dd" stroke-width="0.4"/><ellipse cx="541.6" cy="483.7" rx="12.7" ry="4.0" transform="rotate(87.7 541.6 483.7)" fill="#ffffff" stroke="#e6e3dd" stroke-width="0.4"/><ellipse cx="539.4" cy="485.4" rx="14.0" ry="4.0" transform="rotate(95.1 539.4 485.4)" fill="#f3f1ed" stroke="#e6e3dd" stroke-width="0.4"/><ellipse cx="534.7" cy="484.4" rx="14.1" ry="4.0" transform="rotate(110.8 534.7 484.4)" fill="#ffffff" stroke="#e6e3dd" stroke-width="0.4"/><ellipse cx="533.1" cy="480.5" rx="11.8" ry="4.0" transform="rotate(122.3 533.1 480.5)" fill="#ffffff" stroke="#e6e3dd" stroke-width="0.4"/><ellipse cx="529.9" cy="480.2" rx="13.3" ry="4.0" transform="rotate(132.2 529.9 480.2)" fill="#f3f1ed" stroke="#e6e3dd" stroke-width="0.4"/><ellipse cx="526.9" cy="477.7" rx="13.8" ry="4.0" transform="rotate(145.6 526.9 477.7)" fill="#fbfaf8" stroke="#e6e3dd" stroke-width="0.4"/><ellipse cx="526.0" cy="475.7" rx="13.5" ry="4.0" transform="rotate(152.7 526.0 475.7)" fill="#ffffff" stroke="#e6e3dd" stroke-width="0.4"/><ellipse cx="526.4" cy="470.5" rx="11.9" ry="4.0" transform="rotate(170.3 526.4 470.5)" fill="#ffffff" stroke="#e6e3dd" stroke-width="0.4"/><ellipse cx="526.0" cy="467.7" rx="12.1" ry="4.0" transform="rotate(181.2 526.0 467.7)" fill="#ffffff" stroke="#e6e3dd" stroke-width="0.4"/><ellipse cx="525.5" cy="464.4" rx="12.8" ry="4.0" transform="rotate(193.0 525.5 464.4)" fill="#fbfaf8" stroke="#e6e3dd" stroke-width="0.4"/><ellipse cx="528.1" cy="461.8" rx="11.5" ry="4.0" transform="rotate(205.6 528.1 461.8)" fill="#ffffff" stroke="#e6e3dd" stroke-width="0.4"/><ellipse cx="526.6" cy="458.1" rx="14.1" ry="4.0" transform="rotate(214.4 526.6 458.1)" fill="#ffffff" stroke="#e6e3dd" stroke-width="0.4"/><ellipse cx="531.0" cy="457.2" rx="11.8" ry="4.0" transform="rotate(227.1 531.0 457.2)" fill="#f3f1ed" stroke="#e6e3dd" stroke-width="0.4"/><ellipse cx="532.1" cy="454.8" rx="12.8" ry="4.0" transform="rotate(236.0 532.1 454.8)" fill="#fbfaf8" stroke="#e6e3dd" stroke-width="0.4"/><ellipse cx="535.9" cy="453.8" rx="12.1" ry="4.0" transform="rotate(250.2 535.9 453.8)" fill="#ffffff" stroke="#e6e3dd" stroke-width="0.4"/><ellipse cx="539.4" cy="453.3" rx="11.9" ry="4.0" transform="rotate(263.8 539.4 453.3)" fill="#ffffff" stroke="#e6e3dd" stroke-width="0.4"/><ellipse cx="541.6" cy="452.6" rx="12.4" ry="4.0" transform="rotate(272.2 541.6 452.6)" fill="#f3f1ed" stroke="#e6e3dd" stroke-width="0.4"/><ellipse cx="545.0" cy="454.6" rx="11.2" ry="4.0" transform="rotate(286.5 545.0 454.6)" fill="#fbfaf8" stroke="#e6e3dd" stroke-width="0.4"/><ellipse cx="549.9" cy="454.3" rx="13.1" ry="4.0" transform="rotate(303.1 549.9 454.3)" fill="#ffffff" stroke="#e6e3dd" stroke-width="0.4"/><ellipse cx="551.6" cy="455.4" rx="13.2" ry="4.0" transform="rotate(310.1 551.6 455.4)" fill="#fbfaf8" stroke="#e6e3dd" stroke-width="0.4"/><ellipse cx="552.0" cy="459.3" rx="11.3" ry="4.0" transform="rotate(321.8 552.0 459.3)" fill="#fbfaf8" stroke="#e6e3dd" stroke-width="0.4"/><ellipse cx="555.1" cy="462.2" rx="12.3" ry="4.0" transform="rotate(337.7 555.1 462.2)" fill="#fbfaf8" stroke="#e6e3dd" stroke-width="0.4"/><ellipse cx="557.4" cy="463.8" rx="13.6" ry="4.0" transform="rotate(345.6 557.4 463.8)" fill="#f3f1ed" stroke="#e6e3dd" stroke-width="0.4"/><circle cx="548.75" cy="477.3" r="21.7" fill="#cfcdc6" opacity="0.15"/></g><circle cx="541" cy="468" r="9.92" fill="#d2c8aa" filter="url(#soft)"/><circle cx="541" cy="468" r="8.06" fill="#8e7f58"/><circle cx="541" cy="468" r="5.2700000000000005" fill="#706040"/><circle cx="541" cy="468" r="2.1700000000000004" fill="#3a2e18"/><g filter="url(#soft)"><circle cx="490" cy="474" r="37.05" fill="url(#chry)"/><ellipse cx="519.7" cy="476.5" rx="10.4" ry="6.8" transform="rotate(94.8 519.7 476.5)" fill="url(#pet1)" stroke="#c2a896" stroke-width="0.55"/><ellipse cx="518.1" cy="485.3" rx="11.1" ry="7.4" transform="rotate(111.9 518.1 485.3)" fill="url(#pet3)" stroke="#c2a896" stroke-width="0.55"/><ellipse cx="508.9" cy="497.6" rx="9.6" ry="6.6" transform="rotate(141.4 508.9 497.6)" fill="url(#pet3)" stroke="#c2a896" stroke-width="0.55"/><ellipse cx="500.3" cy="503.8" rx="11.6" ry="7.3" transform="rotate(160.9 500.3 503.8)" fill="url(#pet1)" stroke="#c2a896" stroke-width="0.55"/><ellipse cx="480.0" cy="502.4" rx="9.1" ry="5.7" transform="rotate(199.5 480.0 502.4)" fill="url(#pet2)" stroke="#c2a896" stroke-width="0.55"/><ellipse cx="470.4" cy="499.2" rx="9.8" ry="6.3" transform="rotate(217.9 470.4 499.2)" fill="url(#pet1)" stroke="#c2a896" stroke-width="0.55"/><ellipse cx="461.1" cy="484.3" rx="9.5" ry="7.3" transform="rotate(250.3 461.1 484.3)" fill="url(#pet3)" stroke="#c2a896" stroke-width="0.55"/><ellipse cx="459.4" cy="474.2" rx="11.0" ry="8.3" transform="rotate(269.5 459.4 474.2)" fill="url(#pet2)" stroke="#c2a896" stroke-width="0.55"/><ellipse cx="462.8" cy="461.4" rx="9.2" ry="5.8" transform="rotate(294.9 462.8 461.4)" fill="url(#pet2)" stroke="#c2a896" stroke-width="0.55"/><ellipse cx="474.0" cy="448.6" rx="11.7" ry="7.6" transform="rotate(327.8 474.0 448.6)" fill="url(#pet2)" stroke="#c2a896" stroke-width="0.55"/><ellipse cx="485.2" cy="443.8" rx="11.2" ry="7.1" transform="rotate(350.9 485.2 443.8)" fill="url(#pet3)" stroke="#c2a896" stroke-width="0.55"/><ellipse cx="496.7" cy="443.9" rx="11.6" ry="7.5" transform="rotate(372.5 496.7 443.9)" fill="url(#pet2)" stroke="#c2a896" stroke-width="0.55"/><ellipse cx="510.8" cy="450.8" rx="10.7" ry="7.1" transform="rotate(401.9 510.8 450.8)" fill="url(#pet3)" stroke="#c2a896" stroke-width="0.55"/><ellipse cx="517.6" cy="462.9" rx="9.0" ry="5.7" transform="rotate(428.0 517.6 462.9)" fill="url(#pet1)" stroke="#c2a896" stroke-width="0.55"/><ellipse cx="514.5" cy="478.6" rx="10.7" ry="7.2" transform="rotate(100.6 514.5 478.6)" fill="url(#pet2)" stroke="#c2a896" stroke-width="0.55"/><ellipse cx="509.1" cy="491.0" rx="8.4" ry="6.2" transform="rotate(131.7 509.1 491.0)" fill="url(#pet3)" stroke="#c2a896" stroke-width="0.55"/><ellipse cx="497.5" cy="496.3" rx="8.3" ry="6.1" transform="rotate(161.4 497.5 496.3)" fill="url(#pet3)" stroke="#c2a896" stroke-width="0.55"/><ellipse cx="482.1" cy="495.4" rx="10.5" ry="6.7" transform="rotate(200.3 482.1 495.4)" fill="url(#pet3)" stroke="#c2a896" stroke-width="0.55"/><ellipse cx="470.3" cy="490.3" rx="9.3" ry="6.1" transform="rotate(230.4 470.3 490.3)" fill="url(#pet2)" stroke="#c2a896" stroke-width="0.55"/><ellipse cx="467.4" cy="478.6" rx="9.6" ry="6.0" transform="rotate(258.4 467.4 478.6)" fill="url(#pet3)" stroke="#c2a896" stroke-width="0.55"/><ellipse cx="465.7" cy="469.2" rx="8.7" ry="5.7" transform="rotate(281.2 465.7 469.2)" fill="url(#pet2)" stroke="#c2a896" stroke-width="0.55"/><ellipse cx="471.8" cy="456.8" rx="9.9" ry="6.9" transform="rotate(313.5 471.8 456.8)" fill="url(#pet2)" stroke="#c2a896" stroke-width="0.55"/><ellipse cx="485.0" cy="451.2" rx="8.5" ry="5.3" transform="rotate(347.5 485.0 451.2)" fill="url(#pet3)" stroke="#c2a896" stroke-width="0.55"/><ellipse cx="495.8" cy="451.6" rx="9.4" ry="6.0" transform="rotate(374.6 495.8 451.6)" fill="url(#pet1)" stroke="#c2a896" stroke-width="0.55"/><ellipse cx="504.9" cy="456.7" rx="8.5" ry="6.0" transform="rotate(400.7 504.9 456.7)" fill="url(#pet3)" stroke="#c2a896" stroke-width="0.55"/><ellipse cx="512.9" cy="470.2" rx="8.6" ry="6.0" transform="rotate(440.6 512.9 470.2)" fill="url(#pet3)" stroke="#c2a896" stroke-width="0.55"/><ellipse cx="505.8" cy="481.1" rx="9.1" ry="6.7" transform="rotate(114.3 505.8 481.1)" fill="url(#pet2)" stroke="#c2a896" stroke-width="0.55"/><ellipse cx="498.4" cy="489.2" rx="8.2" ry="6.0" transform="rotate(151.1 498.4 489.2)" fill="url(#pet1)" stroke="#c2a896" stroke-width="0.55"/><ellipse cx="487.4" cy="490.0" rx="7.8" ry="5.2" transform="rotate(189.2 487.4 490.0)" fill="url(#pet3)" stroke="#c2a896" stroke-width="0.55"/><ellipse cx="479.5" cy="485.8" rx="7.9" ry="5.2" transform="rotate(221.6 479.5 485.8)" fill="url(#pet3)" stroke="#c2a896" stroke-width="0.55"/><ellipse cx="472.3" cy="477.7" rx="8.8" ry="6.9" transform="rotate(258.2 472.3 477.7)" fill="url(#pet1)" stroke="#c2a896" stroke-width="0.55"/><ellipse cx="472.9" cy="467.4" rx="7.8" ry="5.4" transform="rotate(291.1 472.9 467.4)" fill="url(#pet2)" stroke="#c2a896" stroke-width="0.55"/><ellipse cx="481.1" cy="460.1" rx="7.6" ry="4.9" transform="rotate(327.6 481.1 460.1)" fill="url(#pet3)" stroke="#c2a896" stroke-width="0.55"/><ellipse cx="491.6" cy="458.2" rx="8.5" ry="5.5" transform="rotate(365.7 491.6 458.2)" fill="url(#pet3)" stroke="#c2a896" stroke-width="0.55"/><ellipse cx="502.2" cy="460.7" rx="9.5" ry="6.0" transform="rotate(402.6 502.2 460.7)" fill="url(#pet3)" stroke="#c2a896" stroke-width="0.55"/><ellipse cx="506.6" cy="472.5" rx="7.4" ry="5.0" transform="rotate(444.9 506.6 472.5)" fill="url(#pet1)" stroke="#c2a896" stroke-width="0.55"/><ellipse cx="497.7" cy="480.0" rx="7.5" ry="5.4" transform="rotate(127.9 497.7 480.0)" fill="url(#pet1)" stroke="#c2a896" stroke-width="0.55"/><ellipse cx="488.4" cy="485.4" rx="7.1" ry="4.8" transform="rotate(187.8 488.4 485.4)" fill="url(#pet3)" stroke="#c2a896" stroke-width="0.55"/><ellipse cx="482.4" cy="479.9" rx="7.9" ry="5.6" transform="rotate(232.2 482.4 479.9)" fill="url(#pet1)" stroke="#c2a896" stroke-width="0.55"/><ellipse cx="478.9" cy="471.0" rx="7.6" ry="4.9" transform="rotate(285.0 478.9 471.0)" fill="url(#pet3)" stroke="#c2a896" stroke-width="0.55"/><ellipse cx="485.5" cy="465.6" rx="7.7" ry="5.3" transform="rotate(332.0 485.5 465.6)" fill="url(#pet2)" stroke="#c2a896" stroke-width="0.55"/><ellipse cx="495.4" cy="465.2" rx="6.4" ry="4.7" transform="rotate(391.5 495.4 465.2)" fill="url(#pet2)" stroke="#c2a896" stroke-width="0.55"/><ellipse cx="498.9" cy="472.3" rx="7.8" ry="5.9" transform="rotate(439.4 498.9 472.3)" fill="url(#pet3)" stroke="#c2a896" stroke-width="0.55"/><ellipse cx="493.3" cy="478.2" rx="4.9" ry="3.1" transform="rotate(141.8 493.3 478.2)" fill="url(#pet1)" stroke="#c2a896" stroke-width="0.55"/><ellipse cx="485.4" cy="477.3" rx="5.2" ry="4.0" transform="rotate(234.9 485.4 477.3)" fill="url(#pet2)" stroke="#c2a896" stroke-width="0.55"/><ellipse cx="488.2" cy="471.0" rx="4.7" ry="3.0" transform="rotate(329.8 488.2 471.0)" fill="url(#pet2)" stroke="#c2a896" stroke-width="0.55"/><ellipse cx="493.9" cy="470.8" rx="5.2" ry="3.6" transform="rotate(410.2 493.9 470.8)" fill="url(#pet1)" stroke="#c2a896" stroke-width="0.55"/></g><circle cx="490" cy="474" r="7.800000000000001" fill="#b8a26a" filter="url(#soft2)"/><circle cx="490" cy="474" r="3.9000000000000004" fill="#8a7440" filter="url(#soft)"/><circle cx="490" cy="474" r="1.9500000000000002" fill="#3a2a14"/></g><path d="M431.50 208.00 L431.25 208.71 L430.95 209.66 L430.60 210.80 L430.19 212.06 L429.72 213.38 L429.20 214.68 L428.63 215.91 L428.00 217.00 L427.32 217.98 L426.57 218.94 L425.78 219.86 L424.93 220.75 L424.02 221.61 L423.06 222.44 L422.06 223.23 L421.00 224.00 L419.89 224.73 L418.71 225.41 L417.48 226.07 L416.21 226.69 L414.88 227.29 L413.52 227.87 L412.12 228.44 L410.70 229.00 L409.14 229.58 L407.40 230.16 L405.56 230.75 L403.71 231.31 L401.94 231.84 L400.34 232.30 L399.00 232.70 L398.00 233.00" fill="none" stroke="#7a83b6" stroke-width="1.1" stroke-linecap="round" stroke-linejoin="round" /><path d="M398.95 232.52 L398.01 232.50 L396.84 232.47 L395.46 232.43 L393.89 232.38 L392.13 232.34 L390.19 232.31 L388.10 232.29 L385.87 232.28 L383.43 232.28 L380.72 232.26 L377.79 232.25 L374.70 232.25 L371.50 232.28 L368.24 232.34 L364.98 232.45 L361.77 232.63 L358.55 232.85 L355.20 233.10 L351.77 233.38 L348.32 233.71 L344.90 234.10 L341.57 234.55 L338.38 235.07 L335.40 235.68 L332.62 236.38 L329.96 237.15 L327.43 237.99 L325.03 238.90 L322.77 239.87 L320.66 240.88 L318.68 241.93 L316.86 243.03 L315.20 244.17 L313.71 245.36 L312.40 246.59 L311.25 247.87 L310.23 249.17 L309.33 250.51 L308.51 251.87 L307.75 253.28 L307.05 254.78 L306.46 256.37 L305.97 258.00 L305.56 259.66 L305.24 261.30 L305.00 262.91 L304.83 264.46 L304.72 265.94 L304.73 267.43 L304.87 268.95 L305.10 270.44 L305.40 271.88 L305.71 273.21 L306.01 274.40 L306.25 275.37 L306.41 276.12 L307.59 275.88 L307.45 275.11 L307.22 274.10 L306.94 272.93 L306.67 271.62 L306.42 270.23 L306.25 268.80 L306.19 267.40 L306.28 266.06 L306.49 264.69 L306.79 263.23 L307.17 261.73 L307.62 260.22 L308.16 258.73 L308.78 257.30 L309.48 255.96 L310.25 254.72 L311.09 253.56 L311.98 252.45 L312.92 251.42 L313.94 250.45 L315.04 249.53 L316.26 248.65 L317.62 247.80 L319.14 246.97 L320.84 246.15 L322.70 245.36 L324.70 244.58 L326.84 243.85 L329.11 243.15 L331.49 242.49 L333.99 241.88 L336.60 241.32 L339.38 240.82 L342.40 240.38 L345.60 239.99 L348.93 239.64 L352.32 239.31 L355.71 239.00 L359.04 238.69 L362.23 238.37 L365.37 238.06 L368.55 237.77 L371.76 237.49 L374.92 237.23 L378.00 236.96 L380.92 236.69 L383.65 236.41 L386.13 236.12 L388.38 235.78 L390.46 235.42 L392.38 235.04 L394.11 234.65 L395.66 234.29 L397.00 233.96 L398.13 233.68 L399.05 233.48Z" fill="#b1a072" stroke="#8c8ea0" stroke-width="0.55" stroke-opacity="0.75"/><path d="M307.00 276.00 L307.19 276.62 L307.40 277.46 L307.64 278.46 L307.94 279.56 L308.30 280.72 L308.76 281.88 L309.32 282.99 L310.00 284.00 L310.80 284.95 L311.71 285.93 L312.72 286.90 L313.81 287.84 L315.00 288.75 L316.26 289.59 L317.59 290.35 L319.00 291.00 L320.53 291.57 L322.22 292.08 L324.02 292.53 L325.88 292.91 L327.75 293.20 L329.59 293.40 L331.36 293.51 L333.00 293.50 L334.59 293.33 L336.22 292.96 L337.83 292.47 L339.38 291.91 L340.81 291.32 L342.09 290.77 L343.17 290.31 L344.00 290.00" fill="none" stroke="#7a83b6" stroke-width="1.1" stroke-linecap="round" stroke-linejoin="round" /><path d="M305.50 262.00 L305.63 263.18 L305.80 264.84 L306.02 266.84 L306.25 269.00 L306.48 271.16 L306.70 273.16 L306.87 274.82 L307.00 276.00" fill="none" stroke="#7a83b6" stroke-width="1.0" stroke-linecap="round" stroke-linejoin="round" /><path d="M340.51 255.35 L341.01 255.51 L341.68 255.70 L342.47 255.91 L343.33 256.16 L344.21 256.47 L345.07 256.82 L345.86 257.23 L346.55 257.71 L347.19 258.27 L347.86 258.91 L348.51 259.62 L349.13 260.37 L349.71 261.17 L350.25 262.01 L350.72 262.86 L351.13 263.75 L351.50 264.69 L351.85 265.70 L352.15 266.75 L352.40 267.82 L352.59 268.89 L352.71 269.94 L352.75 270.96 L352.72 271.95 L352.61 272.98 L352.42 274.10 L352.16 275.28 L351.83 276.47 L351.45 277.66 L351.01 278.80 L350.54 279.86 L350.06 280.80 L349.53 281.65 L348.92 282.48 L348.21 283.31 L347.43 284.12 L346.60 284.92 L345.73 285.68 L344.87 286.42 L344.08 287.09 L343.32 287.66 L342.43 288.17 L341.42 288.66 L340.37 289.13 L339.36 289.61 L338.43 290.13 L337.63 290.78 L337.08 291.73 L337.09 292.83 L337.52 293.73 L338.13 294.51 L338.82 295.25 L339.55 296.00 L340.22 296.75 L340.77 297.49 L341.16 298.24 L341.53 299.13 L341.92 300.14 L342.29 301.19 L342.62 302.25 L342.89 303.30 L343.08 304.31 L343.19 305.24 L343.22 306.10 L343.18 306.99 L343.09 307.95 L342.93 308.95 L342.71 309.98 L342.43 311.01 L342.09 312.03 L341.69 313.02 L341.24 313.96 L340.73 314.89 L340.16 315.82 L339.51 316.75 L338.80 317.65 L338.03 318.53 L337.20 319.36 L336.30 320.14 L335.36 320.84 L334.26 321.49 L332.92 322.12 L331.41 322.71 L329.85 323.26 L328.33 323.75 L326.93 324.18 L325.75 324.54 L324.88 324.84 L325.12 325.76 L326.01 325.60 L327.21 325.41 L328.66 325.19 L330.27 324.92 L331.95 324.59 L333.63 324.20 L335.22 323.73 L336.64 323.16 L337.89 322.49 L339.07 321.75 L340.20 320.94 L341.26 320.06 L342.25 319.12 L343.16 318.13 L344.00 317.10 L344.76 316.04 L345.44 314.92 L346.06 313.73 L346.60 312.49 L347.05 311.21 L347.41 309.90 L347.66 308.57 L347.79 307.24 L347.78 305.90 L347.59 304.55 L347.22 303.23 L346.72 301.99 L346.14 300.81 L345.52 299.70 L344.87 298.66 L344.25 297.70 L343.64 296.76 L342.90 295.82 L342.03 294.98 L341.14 294.26 L340.31 293.62 L339.61 293.06 L339.13 292.59 L338.94 292.31 L338.92 292.27 L339.03 292.19 L339.46 291.98 L340.22 291.74 L341.20 291.49 L342.33 291.23 L343.54 290.91 L344.77 290.48 L345.92 289.91 L346.94 289.29 L347.95 288.65 L349.01 287.96 L350.07 287.19 L351.13 286.34 L352.15 285.40 L353.10 284.35 L353.94 283.20 L354.67 281.96 L355.31 280.65 L355.87 279.27 L356.36 277.84 L356.75 276.38 L357.04 274.92 L357.22 273.47 L357.28 272.05 L357.19 270.65 L356.96 269.28 L356.61 267.95 L356.16 266.68 L355.65 265.47 L355.08 264.33 L354.49 263.26 L353.87 262.25 L353.20 261.29 L352.47 260.38 L351.68 259.53 L350.86 258.75 L350.01 258.03 L349.16 257.39 L348.31 256.81 L347.45 256.29 L346.54 255.86 L345.55 255.52 L344.56 255.27 L343.59 255.09 L342.67 254.94 L341.86 254.83 L341.19 254.74 L340.69 254.65Z" fill="#b1a072" stroke="#8c8ea0" stroke-width="0.55" stroke-opacity="0.75"/><path d="M391.83 233.05 L391.51 233.04 L391.14 232.88 L390.54 232.69 L389.68 232.62 L388.61 232.82 L387.43 233.42 L386.25 234.47 L385.10 235.98 L383.95 237.98 L382.74 240.41 L381.48 243.20 L380.17 246.24 L378.85 249.44 L377.53 252.67 L376.24 255.83 L374.98 258.83 L373.75 261.77 L372.52 264.77 L371.31 267.78 L370.11 270.80 L368.90 273.81 L367.69 276.77 L366.46 279.69 L365.21 282.54 L363.93 285.37 L362.62 288.20 L361.29 291.01 L359.94 293.78 L358.60 296.52 L357.25 299.20 L355.90 301.82 L354.57 304.35 L353.24 306.83 L351.89 309.27 L350.54 311.67 L349.18 314.01 L347.84 316.29 L346.52 318.48 L345.22 320.57 L343.97 322.55 L342.76 324.42 L341.59 326.21 L340.46 327.89 L339.36 329.49 L338.27 330.98 L337.19 332.38 L336.10 333.68 L335.00 334.88 L333.88 335.98 L332.72 336.97 L331.55 337.88 L330.36 338.70 L329.17 339.46 L327.99 340.15 L326.83 340.78 L325.73 341.36 L324.64 341.86 L323.51 342.27 L322.38 342.61 L321.28 342.88 L320.24 343.11 L319.31 343.30 L318.52 343.46 L317.92 343.61 L318.08 344.39 L318.68 344.29 L319.47 344.17 L320.41 344.03 L321.47 343.87 L322.63 343.65 L323.83 343.39 L325.06 343.05 L326.27 342.64 L327.48 342.19 L328.73 341.70 L330.04 341.16 L331.39 340.55 L332.78 339.85 L334.18 339.06 L335.60 338.15 L337.00 337.12 L338.38 335.98 L339.74 334.75 L341.09 333.43 L342.45 332.01 L343.82 330.51 L345.20 328.92 L346.60 327.23 L348.03 325.45 L349.52 323.56 L351.05 321.56 L352.61 319.44 L354.19 317.24 L355.78 314.94 L357.36 312.57 L358.91 310.14 L360.43 307.65 L361.92 305.09 L363.39 302.46 L364.86 299.74 L366.31 296.97 L367.73 294.14 L369.12 291.27 L370.47 288.38 L371.79 285.46 L373.07 282.49 L374.30 279.46 L375.49 276.40 L376.64 273.32 L377.77 270.25 L378.87 267.19 L379.95 264.16 L381.02 261.17 L382.12 258.06 L383.22 254.78 L384.32 251.45 L385.39 248.19 L386.40 245.10 L387.35 242.30 L388.19 239.89 L388.90 238.02 L389.46 236.74 L389.87 235.92 L390.17 235.39 L390.44 235.01 L390.79 234.70 L391.25 234.47 L391.77 234.24 L392.17 233.95Z" fill="#b1a072" stroke="#8c8ea0" stroke-width="0.55" stroke-opacity="0.75"/><path d="M318.00 344.00 L316.97 343.66 L315.56 343.27 L313.88 342.80 L312.03 342.25 L310.12 341.61 L308.24 340.86 L306.50 339.99 L305.00 339.00 L303.68 337.86 L302.42 336.56 L301.23 335.14 L300.11 333.62 L299.06 332.03 L298.11 330.38 L297.25 328.69 L296.50 327.00 L295.84 325.25 L295.28 323.41 L294.80 321.51 L294.42 319.56 L294.13 317.61 L293.92 315.68 L293.82 313.80 L293.80 312.00 L293.88 310.26 L294.07 308.53 L294.36 306.82 L294.73 305.16 L295.19 303.53 L295.72 301.96 L296.33 300.44 L297.00 299.00 L297.75 297.61 L298.59 296.27 L299.52 294.98 L300.51 293.75 L301.57 292.58 L302.68 291.48 L303.82 290.45 L305.00 289.50 L306.22 288.63 L307.52 287.84 L308.86 287.12 L310.25 286.47 L311.67 285.88 L313.11 285.36 L314.56 284.90 L316.00 284.50 L317.46 284.15 L318.95 283.84 L320.47 283.59 L322.00 283.41 L323.53 283.30 L325.05 283.27 L326.54 283.33 L328.00 283.50 L329.50 283.83 L331.08 284.34 L332.68 284.98 L334.25 285.69 L335.72 286.40 L337.05 287.06 L338.16 287.62 L339.00 288.00" fill="none" stroke="#7a83b6" stroke-width="1.1" stroke-linecap="round" stroke-linejoin="round" /><path d="M361.00 287.00 L361.21 286.37 L361.45 285.53 L361.74 284.52 L362.08 283.41 L362.47 282.25 L362.92 281.09 L363.43 279.99 L364.00 279.00 L364.71 278.06 L365.57 277.10 L366.54 276.13 L367.54 275.20 L368.52 274.33 L369.41 273.55 L370.16 272.90 L370.70 272.40" fill="none" stroke="#7a83b6" stroke-width="1.0" stroke-linecap="round" stroke-linejoin="round" /><path d="M383.70 276.00 L384.19 276.28 L384.86 276.62 L385.66 277.03 L386.54 277.50 L387.46 278.03 L388.37 278.62 L389.23 279.28 L390.00 280.00 L390.68 280.79 L391.31 281.67 L391.91 282.62 L392.49 283.62 L393.08 284.68 L393.68 285.77 L394.32 286.88 L395.00 288.00 L395.66 289.14 L396.26 290.31 L396.85 291.52 L397.48 292.75 L398.19 294.02 L399.05 295.31 L400.10 296.64 L401.40 298.00 L402.96 299.39 L404.73 300.81 L406.68 302.27 L408.79 303.75 L411.00 305.27 L413.30 306.81 L415.64 308.39 L418.00 310.00 L420.46 311.63 L423.10 313.29 L425.84 314.97 L428.64 316.69 L431.42 318.44 L434.11 320.24 L436.66 322.09 L439.00 324.00 L441.18 325.94 L443.29 327.89 L445.31 329.87 L447.23 331.91 L449.01 334.02 L450.64 336.22 L452.11 338.54 L453.40 341.00 L454.51 343.67 L455.45 346.58 L456.25 349.64 L456.89 352.78 L457.38 355.91 L457.73 358.96 L457.93 361.85 L458.00 364.50 L457.93 366.95 L457.73 369.28 L457.38 371.51 L456.89 373.62 L456.25 375.63 L455.45 377.53 L454.51 379.32 L453.40 381.00 L452.08 382.57 L450.53 384.03 L448.80 385.38 L446.93 386.62 L444.97 387.76 L442.96 388.78 L440.96 389.70 L439.00 390.50 L436.94 391.16 L434.68 391.68 L432.31 392.06 L429.95 392.34 L427.70 392.55 L425.67 392.71 L423.97 392.85 L422.70 393.00" fill="none" stroke="#7a83b6" stroke-width="1.1" stroke-linecap="round" stroke-linejoin="round" /><path d="M395.63 290.14 L395.80 290.78 L396.03 291.54 L396.29 292.43 L396.59 293.45 L396.89 294.63 L397.19 295.98 L397.47 297.53 L397.73 299.29 L397.99 301.34 L398.27 303.66 L398.55 306.20 L398.82 308.89 L399.06 311.69 L399.27 314.55 L399.42 317.40 L399.51 320.20 L399.53 323.01 L399.52 325.89 L399.46 328.83 L399.36 331.85 L399.22 334.95 L399.06 338.13 L398.86 341.41 L398.65 344.78 L398.40 348.32 L398.10 352.09 L397.77 356.01 L397.40 359.98 L397.03 363.91 L396.65 367.72 L396.27 371.31 L395.91 374.58 L395.54 377.54 L395.14 380.30 L394.73 382.90 L394.31 385.38 L393.91 387.77 L393.55 390.10 L393.23 392.41 L393.00 394.68 L392.83 396.84 L392.69 398.88 L392.59 400.84 L392.54 402.74 L392.54 404.61 L392.62 406.46 L392.77 408.31 L393.01 410.18 L393.34 412.09 L393.76 414.01 L394.26 415.93 L394.82 417.81 L395.43 419.63 L396.09 421.36 L396.79 422.98 L397.53 424.47 L398.37 425.86 L399.35 427.15 L400.39 428.32 L401.44 429.37 L402.45 430.31 L403.35 431.12 L404.10 431.79 L404.64 432.32 L405.36 431.68 L404.86 431.06 L404.18 430.29 L403.38 429.39 L402.52 428.38 L401.65 427.26 L400.81 426.07 L400.07 424.83 L399.47 423.53 L398.95 422.11 L398.46 420.53 L398.00 418.84 L397.58 417.07 L397.23 415.25 L396.94 413.41 L396.72 411.59 L396.59 409.82 L396.55 408.10 L396.58 406.41 L396.69 404.73 L396.86 403.01 L397.09 401.23 L397.36 399.37 L397.67 397.40 L398.00 395.32 L398.38 393.21 L398.83 391.07 L399.35 388.84 L399.90 386.50 L400.47 384.01 L401.05 381.34 L401.59 378.48 L402.09 375.42 L402.56 372.08 L403.04 368.45 L403.52 364.61 L403.97 360.65 L404.40 356.64 L404.78 352.67 L405.10 348.83 L405.35 345.22 L405.56 341.81 L405.73 338.48 L405.87 335.22 L405.96 332.03 L405.97 328.89 L405.91 325.81 L405.76 322.79 L405.49 319.80 L405.08 316.81 L404.52 313.83 L403.85 310.92 L403.12 308.11 L402.35 305.44 L401.60 302.96 L400.89 300.71 L400.27 298.71 L399.69 296.95 L399.10 295.41 L398.52 294.07 L397.98 292.92 L397.47 291.95 L397.03 291.13 L396.66 290.44 L396.37 289.86Z" fill="#b1a072" stroke="#8c8ea0" stroke-width="0.55" stroke-opacity="0.75"/><path d="M398.31 307.78 L397.78 309.06 L397.08 310.76 L396.25 312.77 L395.33 315.01 L394.34 317.36 L393.33 319.75 L392.33 322.05 L391.37 324.20 L390.43 326.22 L389.50 328.22 L388.54 330.21 L387.57 332.20 L386.57 334.23 L385.54 336.30 L384.45 338.44 L383.32 340.66 L382.09 343.04 L380.79 345.59 L379.42 348.23 L378.03 350.89 L376.63 353.52 L375.26 356.04 L373.94 358.38 L372.69 360.49 L371.51 362.39 L370.35 364.17 L369.22 365.82 L368.11 367.37 L367.01 368.83 L365.93 370.19 L364.84 371.48 L363.78 372.68 L362.72 373.76 L361.63 374.75 L360.53 375.65 L359.42 376.47 L358.34 377.23 L357.31 377.93 L356.36 378.57 L355.51 379.17 L354.80 379.69 L354.18 380.12 L353.64 380.47 L353.16 380.77 L352.75 381.01 L352.38 381.22 L352.07 381.40 L351.80 381.56 L352.20 382.44 L352.48 382.34 L352.82 382.25 L353.23 382.13 L353.71 381.98 L354.28 381.79 L354.93 381.54 L355.67 381.22 L356.49 380.83 L357.40 380.39 L358.44 379.92 L359.59 379.38 L360.83 378.78 L362.14 378.08 L363.49 377.29 L364.87 376.36 L366.22 375.32 L367.55 374.20 L368.89 373.02 L370.25 371.75 L371.64 370.38 L373.05 368.88 L374.46 367.24 L375.89 365.46 L377.31 363.51 L378.77 361.34 L380.26 358.95 L381.78 356.39 L383.28 353.73 L384.75 351.04 L386.16 348.37 L387.48 345.78 L388.68 343.34 L389.78 341.03 L390.80 338.78 L391.74 336.58 L392.61 334.42 L393.43 332.28 L394.20 330.14 L394.93 327.99 L395.63 325.80 L396.31 323.46 L396.96 320.96 L397.56 318.39 L398.11 315.87 L398.60 313.49 L399.03 311.35 L399.40 309.56 L399.69 308.22Z" fill="#b1a072" stroke="#8c8ea0" stroke-width="0.55" stroke-opacity="0.75"/><path d="M352.00 382.00 L351.84 381.56 L351.57 380.99 L351.24 380.32 L350.91 379.56 L350.62 378.73 L350.42 377.85 L350.36 376.93 L350.50 376.00 L350.81 375.05 L351.23 374.05 L351.76 373.02 L352.41 371.94 L353.15 370.80 L354.00 369.60 L354.95 368.34 L356.00 367.00 L357.19 365.51 L358.54 363.83 L360.02 362.04 L361.59 360.22 L363.21 358.43 L364.85 356.75 L366.46 355.25 L368.00 354.00 L369.47 353.00 L370.89 352.17 L372.29 351.49 L373.71 350.94 L375.16 350.48 L376.67 350.11 L378.28 349.79 L380.00 349.50 L381.92 349.26 L384.04 349.11 L386.29 349.03 L388.58 349.02 L390.85 349.07 L393.01 349.17 L394.98 349.32 L396.70 349.50 L398.20 349.77 L399.56 350.15 L400.79 350.61 L401.89 351.10 L402.86 351.59 L403.71 352.05 L404.42 352.43 L405.00 352.70" fill="none" stroke="#7a83b6" stroke-width="1.1" stroke-linecap="round" stroke-linejoin="round" /><path d="M404.60 366.05 L404.78 365.01 L405.00 363.62 L405.24 361.97 L405.54 360.18 L405.89 358.34 L406.30 356.56 L406.78 354.96 L407.31 353.64 L407.92 352.45 L408.61 351.27 L409.35 350.15 L410.16 349.09 L411.01 348.09 L411.93 347.14 L412.90 346.25 L413.93 345.43 L415.08 344.62 L416.38 343.81 L417.81 343.02 L419.32 342.28 L420.85 341.62 L422.38 341.05 L423.84 340.60 L425.19 340.29 L426.49 340.12 L427.83 340.06 L429.21 340.11 L430.59 340.27 L431.95 340.52 L433.25 340.86 L434.48 341.27 L435.57 341.72 L436.55 342.30 L437.49 343.09 L438.38 344.01 L439.20 345.01 L439.94 346.01 L440.60 346.93 L441.16 347.72 L441.62 348.29 L442.38 347.71 L441.98 347.14 L441.48 346.34 L440.87 345.37 L440.17 344.30 L439.38 343.19 L438.49 342.11 L437.51 341.11 L436.43 340.28 L435.27 339.58 L434.02 338.91 L432.67 338.29 L431.22 337.73 L429.70 337.27 L428.11 336.93 L426.48 336.73 L424.81 336.71 L423.11 336.87 L421.33 337.19 L419.51 337.64 L417.68 338.22 L415.89 338.91 L414.16 339.70 L412.54 340.59 L411.07 341.57 L409.75 342.64 L408.54 343.81 L407.45 345.07 L406.47 346.41 L405.61 347.81 L404.86 349.27 L404.23 350.78 L403.69 352.36 L403.30 354.13 L403.10 356.06 L403.05 358.04 L403.09 360.01 L403.18 361.87 L403.28 363.54 L403.37 364.93 L403.40 365.95Z" fill="#b1a072" stroke="#8c8ea0" stroke-width="0.55" stroke-opacity="0.75"/><path d="M436.00 341.00 L436.60 341.93 L437.47 343.18 L438.52 344.67 L439.64 346.31 L440.73 348.05 L441.69 349.79 L442.41 351.47 L442.80 353.00 L442.86 354.47 L442.69 355.98 L442.34 357.51 L441.83 359.00 L441.20 360.43 L440.49 361.77 L439.75 362.97 L439.00 364.00 L438.18 364.87 L437.22 365.61 L436.18 366.23 L435.07 366.75 L433.96 367.17 L432.89 367.52 L431.89 367.79 L431.00 368.00 L430.20 368.11 L429.42 368.08 L428.69 367.95 L428.00 367.75 L427.38 367.52 L426.83 367.30 L426.37 367.11 L426.00 367.00" fill="none" stroke="#7a83b6" stroke-width="1.0" stroke-linecap="round" stroke-linejoin="round" /><path d="M406.47 416.91 L406.34 415.70 L406.11 414.09 L405.83 412.18 L405.56 410.09 L405.35 407.93 L405.26 405.82 L405.32 403.89 L405.58 402.25 L406.03 400.71 L406.64 399.10 L407.39 397.50 L408.24 395.93 L409.17 394.44 L410.16 393.06 L411.17 391.81 L412.16 390.73 L413.19 389.79 L414.38 388.90 L415.70 388.05 L417.13 387.26 L418.62 386.56 L420.11 385.94 L421.58 385.42 L422.91 385.02 L424.19 384.78 L425.56 384.70 L426.99 384.76 L428.42 384.90 L429.78 385.10 L431.01 385.31 L432.07 385.49 L432.88 385.59 L433.12 384.41 L432.37 384.20 L431.38 383.86 L430.18 383.45 L428.81 383.02 L427.32 382.62 L425.74 382.31 L424.11 382.14 L422.49 382.18 L420.88 382.37 L419.20 382.65 L417.43 383.03 L415.62 383.54 L413.81 384.19 L412.04 385.01 L410.36 386.04 L408.84 387.27 L407.51 388.69 L406.30 390.28 L405.21 392.02 L404.26 393.87 L403.45 395.79 L402.80 397.76 L402.31 399.75 L402.02 401.75 L402.00 403.87 L402.29 406.10 L402.79 408.35 L403.40 410.53 L404.06 412.59 L404.68 414.43 L405.20 415.96 L405.53 417.09Z" fill="#b1a072" stroke="#8c8ea0" stroke-width="0.55" stroke-opacity="0.75"/><path d="M433.00 385.00 L433.65 385.59 L434.55 386.34 L435.63 387.24 L436.81 388.25 L438.01 389.36 L439.16 390.53 L440.18 391.75 L441.00 393.00 L441.67 394.25 L442.29 395.53 L442.84 396.86 L443.31 398.25 L443.68 399.74 L443.93 401.34 L444.04 403.09 L444.00 405.00 L443.84 407.18 L443.58 409.66 L443.21 412.34 L442.71 415.10 L442.05 417.85 L441.23 420.49 L440.22 422.90 L439.00 425.00 L437.51 426.85 L435.75 428.60 L433.78 430.21 L431.64 431.66 L429.41 432.93 L427.14 434.00 L424.88 434.83 L422.70 435.40 L420.43 435.61 L417.96 435.44 L415.39 434.99 L412.83 434.35 L410.40 433.63 L408.21 432.93 L406.38 432.36 L405.00 432.00" fill="none" stroke="#7a83b6" stroke-width="1.1" stroke-linecap="round" stroke-linejoin="round" /><path d="M377 272 Q381 264 388 266" stroke="#a070e0" stroke-width="1.6" fill="none"/><circle cx="385" cy="267.5" r="1.8" fill="#b080f0"/><path d="M373 270 L373 284 L376.5 281 L379 286.5 L381 285.5 L378.5 280 L383 280 Z" fill="#111" stroke="#fff" stroke-width="0.6"/><text x="378" y="289" font-size="4.5" fill="#777" font-family="Liberation Sans">100</text><rect x="378" y="290" width="8" height="1.2" fill="#777"/><rect x="293.5" y="208" width="165.5" height="229" fill="none" stroke="#8c92c4" stroke-width="1"/><rect x="291.3" y="205.8" width="4.4" height="4.4" fill="#fff" stroke="#8c92c4" stroke-width="0.9"/><rect x="373.8" y="205.8" width="4.4" height="4.4" fill="#fff" stroke="#8c92c4" stroke-width="0.9"/><rect x="456.8" y="205.8" width="4.4" height="4.4" fill="#fff" stroke="#8c92c4" stroke-width="0.9"/><rect x="291.3" y="320.3" width="4.4" height="4.4" fill="#fff" stroke="#8c92c4" stroke-width="0.9"/><rect x="456.8" y="320.3" width="4.4" height="4.4" fill="#fff" stroke="#8c92c4" stroke-width="0.9"/><rect x="291.3" y="434.8" width="4.4" height="4.4" fill="#fff" stroke="#8c92c4" stroke-width="0.9"/><rect x="373.8" y="434.8" width="4.4" height="4.4" fill="#fff" stroke="#8c92c4" stroke-width="0.9"/><rect x="456.8" y="434.8" width="4.4" height="4.4" fill="#fff" stroke="#8c92c4" stroke-width="0.9"/></g></svg>
</body></html>
